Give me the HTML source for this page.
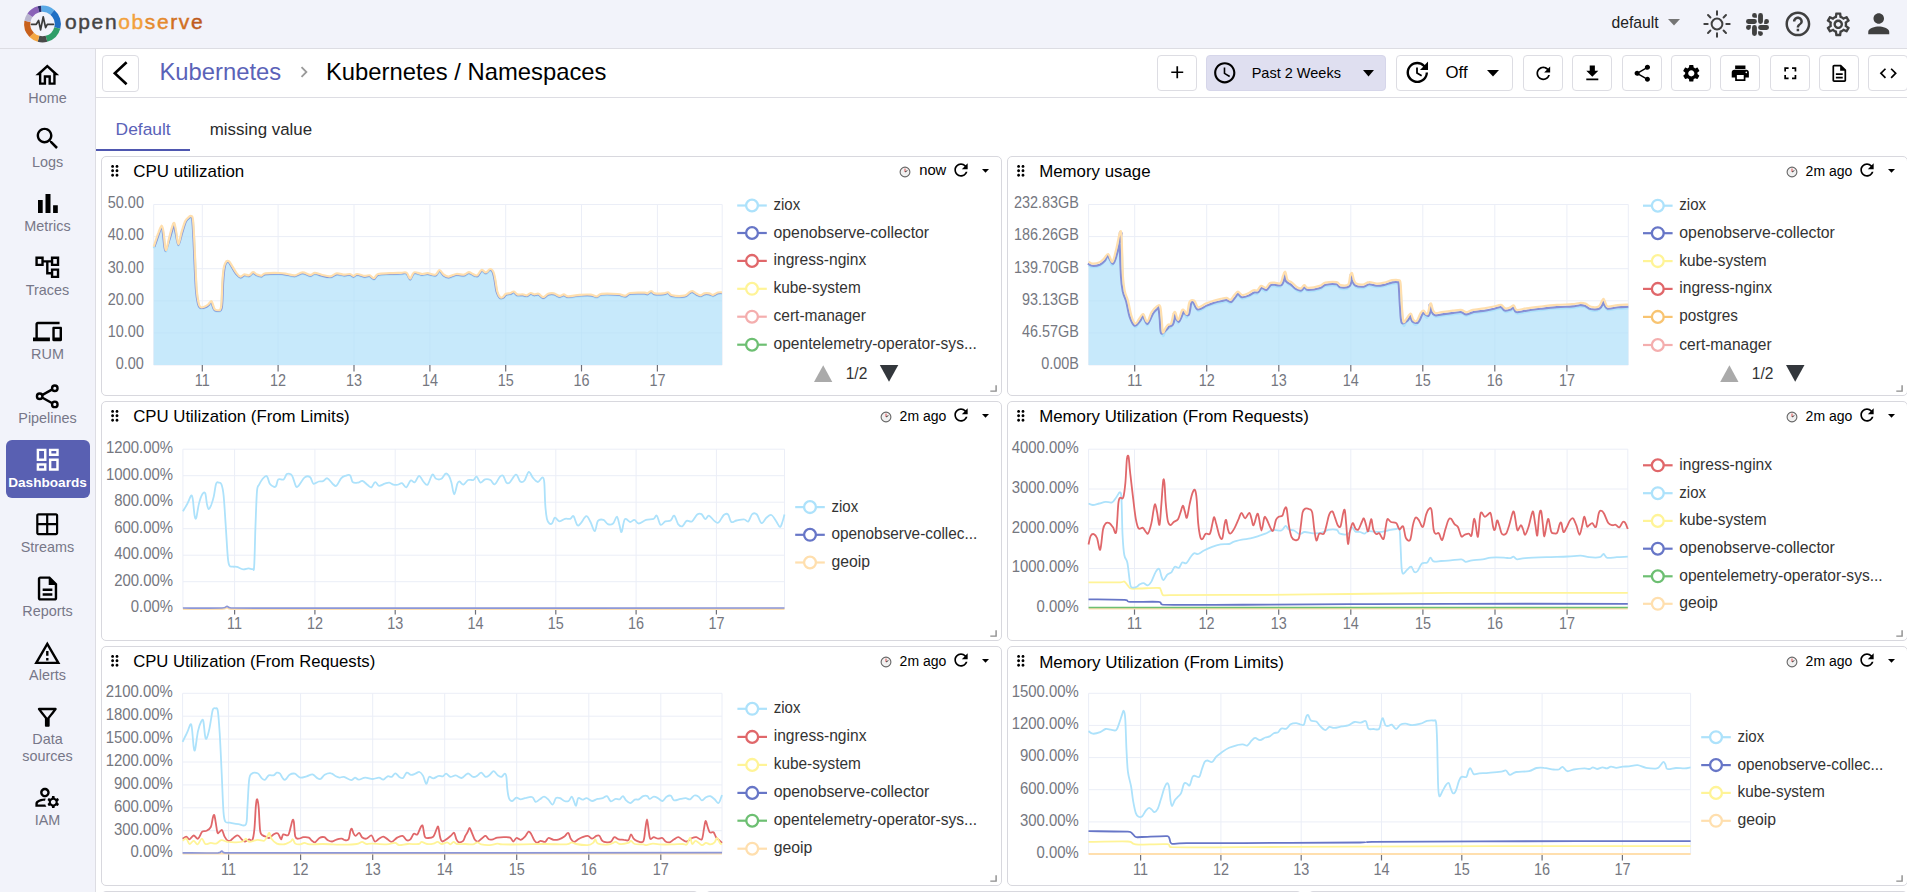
<!DOCTYPE html><html><head><meta charset="utf-8"><title>OpenObserve</title><style>
*{box-sizing:border-box}
html,body{margin:0;padding:0}
body{width:1907px;height:892px;overflow:hidden;background:#fff;position:relative;font-family:"Liberation Sans",sans-serif;color:#000}
.abs{position:absolute}
.ic{position:absolute;display:block}
.t{position:absolute;white-space:nowrap;line-height:1}
#hdr{left:0;top:0;width:1907px;height:49px;background:#f2f3fa;border-bottom:1px solid #dddde3}
#side{left:0;top:49px;width:96px;height:843px;background:#f2f3fa;border-right:1px solid #dddde3}
#tb{left:96px;top:49px;width:1811px;height:49px;border-bottom:1px solid #dddde3;background:#fff}
.btn{position:absolute;border:1px solid #dddde3;border-radius:4px;background:#fff}
.nav{position:absolute;left:0;width:95px;text-align:center;font-size:14.4px;color:#777788;line-height:1}
.panel{position:absolute;border:1px solid #d8d8de;border-radius:5px;background:#fff}
.ptitle{position:absolute;font-size:16.8px;line-height:1;white-space:nowrap;color:#000}
.pago{position:absolute;font-size:14px;line-height:1;white-space:nowrap;color:#000;text-align:right}
</style></head><body>
<div id="hdr" class="abs"></div>
<svg class="ic" style="left:0;top:0" width="70" height="48" viewBox="0 0 70 48"><path d="M41.17 8.76 A15.30 15.30 0 0 1 52.33 12.28" stroke="#5aa9e6" stroke-width="6.20" fill="none"/><path d="M52.33 12.28 A15.30 15.30 0 0 1 57.28 27.96" stroke="#1f6fc4" stroke-width="6.20" fill="none"/><path d="M57.28 27.96 A15.30 15.30 0 0 1 46.46 38.78" stroke="#2f9e68" stroke-width="6.20" fill="none"/><path d="M46.46 38.78 A15.30 15.30 0 0 1 38.54 38.78" stroke="#4a4a4a" stroke-width="6.20" fill="none"/><path d="M38.54 38.78 A15.30 15.30 0 0 1 31.68 34.82" stroke="#f5a742" stroke-width="6.20" fill="none"/><path d="M31.68 34.82 A15.30 15.30 0 0 1 27.43 21.34" stroke="#c8601c" stroke-width="6.20" fill="none"/><path d="M27.43 21.34 A15.30 15.30 0 0 1 29.97 15.22" stroke="#b9b5cf" stroke-width="6.20" fill="none"/><path d="M29.97 15.22 A15.30 15.30 0 0 1 38.54 9.22" stroke="#8a63b8" stroke-width="6.20" fill="none"/><path d="M38.54 9.22 A15.30 15.30 0 0 1 41.17 8.76" stroke="#2a2a66" stroke-width="6.20" fill="none"/><path d="M31.5 24.3 H36.3 L38.6 20.5 L40.6 29.8 L43.2 16.8 L45.6 27.6 L47.3 24.3 H53.5" stroke="#3a3a3a" stroke-width="1.7" fill="none" stroke-linejoin="round" stroke-linecap="round"/></svg>
<div class="t" style="left:65px;top:11.2px;font-size:21px;letter-spacing:1.62px;-webkit-text-stroke-width:0.45px;color:#444">open<span style="color:#f2a13c">ob</span><span style="color:#e58a2e">se</span><span style="color:#d16f22">rv</span><span style="color:#bf5a1c">e</span></div>
<div class="t" style="left:1611.5px;top:15.3px;font-size:15.7px;color:#222">default</div>
<svg class="ic" style="left:1667.5px;top:19px" width="12" height="7" viewBox="0 0 12 7"><path d="M0 0H12L6 6.5z" fill="#757575"/></svg>
<svg class="ic" style="left:1703px;top:9.8px" width="28" height="28" viewBox="0 0 28 28"><circle cx="14" cy="14" r="5.4" fill="none" stroke="#404040" stroke-width="2"/><line x1="23.30" y1="14.00" x2="26.70" y2="14.00" stroke="#404040" stroke-width="2" stroke-linecap="round"/><line x1="20.58" y1="20.58" x2="22.98" y2="22.98" stroke="#404040" stroke-width="2" stroke-linecap="round"/><line x1="14.00" y1="23.30" x2="14.00" y2="26.70" stroke="#404040" stroke-width="2" stroke-linecap="round"/><line x1="7.42" y1="20.58" x2="5.02" y2="22.98" stroke="#404040" stroke-width="2" stroke-linecap="round"/><line x1="4.70" y1="14.00" x2="1.30" y2="14.00" stroke="#404040" stroke-width="2" stroke-linecap="round"/><line x1="7.42" y1="7.42" x2="5.02" y2="5.02" stroke="#404040" stroke-width="2" stroke-linecap="round"/><line x1="14.00" y1="4.70" x2="14.00" y2="1.30" stroke="#404040" stroke-width="2" stroke-linecap="round"/><line x1="20.58" y1="7.42" x2="22.98" y2="5.02" stroke="#404040" stroke-width="2" stroke-linecap="round"/></svg>
<svg class="ic" style="left:1745.5px;top:12.5px" width="23" height="23" viewBox="0 0 24 24"><path fill="#404040" d="M5.042 15.165a2.528 2.528 0 0 1-2.52 2.523A2.528 2.528 0 0 1 0 15.165a2.527 2.527 0 0 1 2.522-2.520h2.520v2.520zM6.313 15.165a2.527 2.527 0 0 1 2.521-2.520 2.527 2.527 0 0 1 2.521 2.520v6.313A2.528 2.528 0 0 1 8.834 24a2.528 2.528 0 0 1-2.521-2.522v-6.313zM8.834 5.042a2.528 2.528 0 0 1-2.521-2.520A2.528 2.528 0 0 1 8.834 0a2.528 2.528 0 0 1 2.521 2.522v2.520H8.834zM8.834 6.313a2.528 2.528 0 0 1 2.521 2.521 2.528 2.528 0 0 1-2.521 2.521H2.522A2.528 2.528 0 0 1 0 8.834a2.528 2.528 0 0 1 2.522-2.521h6.312zM18.956 8.834a2.528 2.528 0 0 1 2.522-2.521A2.528 2.528 0 0 1 24 8.834a2.528 2.528 0 0 1-2.522 2.521h-2.522V8.834zM17.688 8.834a2.528 2.528 0 0 1-2.523 2.521 2.527 2.527 0 0 1-2.520-2.521V2.522A2.527 2.527 0 0 1 15.165 0a2.528 2.528 0 0 1 2.523 2.522v6.312zM15.165 18.956a2.528 2.528 0 0 1 2.523 2.522A2.528 2.528 0 0 1 15.165 24a2.527 2.527 0 0 1-2.520-2.522v-2.522h2.520zM15.165 17.688a2.527 2.527 0 0 1-2.520-2.523 2.526 2.526 0 0 1 2.520-2.520h6.313A2.527 2.527 0 0 1 24 15.165a2.528 2.528 0 0 1-2.522 2.523h-6.313z"/></svg>
<svg class="ic" style="left:1782.90px;top:8.90px" width="29.80" height="29.80" viewBox="0 0 24 24"><path fill="#404040" d="M11 18h2v-2h-2v2zm1-16C6.480 2 2 6.480 2 12s4.480 10 10 10 10-4.480 10-10S17.520 2 12 2zm0 18c-4.410 0-8-3.590-8-8s3.590-8 8-8 8 3.590 8 8-3.590 8-8 8zm0-14c-2.210 0-4 1.790-4 4h2c0-1.100.900-2 2-2s2 .900 2 2c0 2-3 1.750-3 5h2c0-2.250 3-2.500 3-5 0-2.210-1.790-4-4-4z"/></svg>
<svg class="ic" style="left:1823.65px;top:9.55px" width="28.50" height="28.50" viewBox="0 0 24 24"><path fill="#404040" d="M19.430 12.980c.040-.320.070-.640.070-.980 0-.340-.030-.660-.070-.980l2.110-1.650c.190-.150.240-.420.120-.640l-2-3.460c-.090-.160-.260-.250-.440-.250-.060 0-.120.010-.170.030l-2.490 1c-.520-.400-1.080-.730-1.690-.980l-.380-2.650C14.460 2.180 14.250 2 14 2h-4c-.250 0-.460.180-.490.420l-.380 2.650c-.610.250-1.170.590-1.690.980l-2.490-1c-.060-.020-.120-.030-.180-.030-.170 0-.340.090-.430.250l-2 3.460c-.130.220-.070.490.120.640l2.110 1.650c-.040.320-.070.650-.070.980 0 .330.030.660.070.980l-2.110 1.650c-.190.150-.240.420-.120.640l2 3.460c.090.160.260.250.440.250.060 0 .120-.010.170-.030l2.490-1c.520.400 1.080.730 1.690.980l.380 2.650c.030.240.240.420.490.420h4c.250 0 .460-.180.490-.420l.380-2.650c.610-.250 1.170-.590 1.690-.980l2.490 1c.060.020.120.030.180.030.170 0 .340-.090.430-.250l2-3.460c.120-.220.070-.490-.120-.640l-2.110-1.650zm-1.980-1.710c.040.310.050.520.050.730 0 .210-.020.430-.050.730l-.140 1.130.890.700 1.080.840-.700 1.210-1.270-.510-1.040-.420-.900.680c-.430.320-.840.560-1.250.730l-1.060.430-.160 1.130-.200 1.350h-1.400l-.190-1.350-.160-1.130-1.060-.430c-.430-.180-.830-.410-1.230-.710l-.910-.700-1.060.430-1.270.510-.700-1.210 1.080-.840.890-.700-.140-1.130c-.030-.310-.050-.540-.050-.740s.020-.430.050-.730l.140-1.130-.890-.700-1.080-.840.700-1.210 1.270.510 1.040.420.900-.680c.430-.320.840-.560 1.250-.730l1.060-.430.160-1.130.200-1.350h1.390l.190 1.350.160 1.130 1.060.430c.430.180.830.410 1.230.710l.910.700 1.060-.430 1.270-.510.700 1.210-1.070.850-.890.700.140 1.130zM12 8c-2.210 0-4 1.790-4 4s1.790 4 4 4 4-1.790 4-4-1.790-4-4-4zm0 6c-1.100 0-2-.900-2-2s.900-2 2-2 2 .900 2 2-.900 2-2 2z"/></svg>
<svg class="ic" style="left:1862.85px;top:8.25px" width="31.50" height="31.50" viewBox="0 0 24 24"><path fill="#404040" d="M12 12c2.210 0 4-1.790 4-4s-1.790-4-4-4-4 1.790-4 4 1.790 4 4 4zm0 2c-2.670 0-8 1.340-8 4v2h16v-2c0-2.660-5.330-4-8-4z"/></svg>
<div id="side" class="abs"></div>
<div class="abs" style="left:5.5px;top:440px;width:84px;height:58px;border-radius:6px;background:#5960b2"></div>
<svg class="ic" style="left:33.20px;top:60.70px" width="28.60" height="28.60" viewBox="0 0 24 24"><path fill="#000" d="M12 5.69l5 4.5V18h-2v-6H9v6H7v-7.81l5-4.5M12 3L2 12h3v8h6v-6h2v6h6v-8h3L12 3z"/></svg>
<div class="nav" style="top:91.3px;color:#777788;">Home</div>
<svg class="ic" style="left:32.90px;top:124.40px" width="29.20" height="29.20" viewBox="0 0 24 24"><path fill="#000" d="M15.5 14h-.79l-.28-.27C15.41 12.59 16 11.11 16 9.5 16 5.91 13.09 3 9.5 3S3 5.91 3 9.5 5.91 16 9.5 16c1.61 0 3.09-.59 4.23-1.57l.27.28v.79l5 4.99L20.49 19l-4.99-5zm-6 0C7.01 14 5 11.99 5 9.5S7.01 5 9.5 5 14 7.01 14 9.5 11.99 14 9.5 14z"/></svg>
<div class="nav" style="top:155.3px;color:#777788;">Logs</div>
<svg class="ic" style="left:37.6px;top:193.5px" width="20" height="19.4" viewBox="0 0 20 19.4"><path fill="#000" d="M0 5.9h4.7v13.5H0zM7.5 0h5v19.400h-5zM15.100 11.200h4.700v8.200h-4.700z"/></svg>
<div class="nav" style="top:219.3px;color:#777788;">Metrics</div>
<svg class="ic" style="left:33.20px;top:252.70px" width="28.60" height="28.60" viewBox="0 0 24 24"><path fill="#000" d="M22 11V3h-7v3H9V3H2v8h7V8h2v10h4v3h7v-8h-7v3h-2V8h2v3h7zM7 9H4V5h3v4zm10 6h3v4h-3v-4zm0-10h3v4h-3V5z"/></svg>
<div class="nav" style="top:283.3px;color:#777788;">Traces</div>
<svg class="ic" style="left:33.00px;top:316.50px" width="29.00" height="29.00" viewBox="0 0 24 24"><path fill="#000" d="M4 6h18V4H4c-1.1 0-2 .9-2 2v11H0v3h14v-3H4V6zm19 2h-6c-.55 0-1 .45-1 1v10c0 .55.45 1 1 1h6c.55 0 1-.45 1-1V9c0-.55-.45-1-1-1zm-1 9h-4v-7h4v7z"/></svg>
<div class="nav" style="top:347.3px;color:#777788;">RUM</div>
<svg class="ic" style="left:33.2px;top:382.3px" width="28.6" height="28.6" viewBox="0 0 24 24"><g stroke="#000" stroke-width="2" fill="none"><line x1="7.6" y1="11" x2="16.2" y2="6.2"/><line x1="7.6" y1="13" x2="16.2" y2="17.8"/><circle cx="5.6" cy="12" r="2.3"/><circle cx="18.3" cy="5.2" r="2.3"/><circle cx="18.3" cy="18.8" r="2.3"/></g></svg>
<div class="nav" style="top:411.3px;color:#777788;">Pipelines</div>
<svg class="ic" style="left:32.80px;top:445.30px" width="29.40" height="29.40" viewBox="0 0 24 24"><path fill="#fff" d="M19 5v2h-4V5h4M9 5v6H5V5h4m10 8v6h-4v-6h4M9 17v2H5v-2h4M21 3h-8v6h8V3zM11 3H3v10h8V3zm10 8h-8v10h8V11zm-10 4H3v6h8v-6z"/></svg>
<div class="nav" style="top:475.3px;color:#fff;font-weight:bold;font-size:13.6px;margin-top:0.8px;">Dashboards</div>
<svg class="ic" style="left:34.30px;top:510.80px" width="26.40" height="26.40" viewBox="0 0 24 24"><path fill="#000" d="M20 2H4c-1.1 0-2 .9-2 2v16c0 1.1.9 2 2 2h16c1.1 0 2-.9 2-2V4c0-1.1-.9-2-2-2zm0 9h-7V4h7v7zm-9-7v7H4V4h7zm-7 9h7v7H4v-7zm9 7v-7h7v7h-7z"/></svg>
<div class="nav" style="top:539.8px;color:#777788;">Streams</div>
<svg class="ic" style="left:33.00px;top:573.50px" width="29.00" height="29.00" viewBox="0 0 24 24"><path fill="#000" d="M8 16h8v2H8zm0-4h8v2H8zm6-10H6c-1.1 0-2 .9-2 2v16c0 1.1.89 2 1.99 2H18c1.1 0 2-.9 2-2V8l-6-6zm4 18H6V4h7v5h5v11z"/></svg>
<div class="nav" style="top:603.8px;color:#777788;">Reports</div>
<svg class="ic" style="left:33.20px;top:638.70px" width="28.60" height="28.60" viewBox="0 0 24 24"><path fill="#000" d="M12 5.99L19.53 19H4.47L12 5.99M12 2L1 21h22L12 2zm1 14h-2v2h2v-2zm0-6h-2v4h2v-4z"/></svg>
<div class="nav" style="top:667.8px;color:#777788;">Alerts</div>
<svg class="ic" style="left:33.20px;top:702.70px" width="28.60" height="28.60" viewBox="0 0 24 24"><path fill="#000" d="M7 6h10l-5.01 6.3L7 6zm-2.750-.390C6.270 8.200 10 13 10 13v6c0 .550.450 1 1 1h2c.550 0 1-.450 1-1v-6s3.720-4.800 5.740-7.390c.510-.660.040-1.610-.790-1.610H5.040c-.830 0-1.300.950-.790 1.610z"/></svg>
<div class="nav" style="top:731.8px;color:#777788;">Data</div>
<svg class="ic" style="left:33.20px;top:782.70px" width="28.60" height="28.60" viewBox="0 0 24 24"><path fill="#000" d="M4 18v-.65c0-.34.16-.66.41-.81C6.100 15.530 8.030 15 10 15c.030 0 .050 0 .080.010.100-.700.300-1.370.590-1.980-.220-.020-.440-.030-.670-.030-2.420 0-4.680.670-6.610 1.820-.880.520-1.390 1.500-1.390 2.530V20h9.260c-.420-.600-.750-1.280-.970-2H4zm6-6c2.210 0 4-1.790 4-4s-1.790-4-4-4-4 1.790-4 4 1.790 4 4 4zm0-6c1.100 0 2 .900 2 2s-.900 2-2 2-2-.900-2-2 .900-2 2-2zm10.750 10c0-.220-.030-.420-.060-.630l1.140-1.010-1-1.730-1.450.490c-.320-.270-.680-.480-1.080-.630L18 11h-2l-.300 1.490c-.400.150-.760.360-1.080.630l-1.450-.490-1 1.730 1.140 1.010c-.030.210-.060.410-.060.630s.030.420.060.630l-1.140 1.010 1 1.730 1.450-.490c.320.270.680.480 1.080.630L16 21h2l.300-1.490c.400-.150.760-.360 1.080-.630l1.450.490 1-1.730-1.140-1.010c.030-.210.060-.410.060-.630zM17 18c-1.100 0-2-.900-2-2s.900-2 2-2 2 .900 2 2-.900 2-2 2z"/></svg>
<div class="nav" style="top:812.8px;color:#777788;">IAM</div>
<div class="nav" style="top:748.8px">sources</div>
<div id="tb" class="abs"></div>
<div class="btn" style="left:101.5px;top:54.5px;width:37px;height:37px"></div>
<svg class="ic" style="left:101.5px;top:54.5px" width="37" height="37" viewBox="0 0 37 37"><path d="M24.6 7.3 L12.8 18.2 L24.6 29.2" stroke="#000" stroke-width="2.6" fill="none"/></svg>
<div class="t" style="left:159.5px;top:60.2px;font-size:23.8px;color:#5a62b8">Kubernetes</div>
<svg class="ic" style="left:292.80px;top:60.80px" width="22.00" height="22.00" viewBox="0 0 24 24"><path fill="#9a9a9a" d="M10 6L8.590 7.410 13.170 12l-4.580 4.590L10 18l6-6z"/></svg>
<div class="t" style="left:326px;top:60.2px;font-size:23.8px;color:#000">Kubernetes / Namespaces</div>
<div class="btn" style="left:1157px;top:55px;width:39.5px;height:36px"></div>
<svg class="ic" style="left:1166.95px;top:62.35px" width="20.50" height="20.50" viewBox="0 0 24 24"><path fill="#000" d="M19 13h-6v6h-2v-6H5v-2h6V5h2v6h6v2z"/></svg>
<div class="btn" style="left:1206px;top:55px;width:180px;height:36px;background:#dfdff0;border-color:#d6d6ea"></div>
<svg class="ic" style="left:1212.25px;top:59.85px" width="25.50" height="25.50" viewBox="0 0 24 24"><path fill="#000" d="M11.990 2C6.470 2 2 6.480 2 12s4.470 10 9.990 10C17.520 22 22 17.520 22 12S17.520 2 11.990 2zM12 20c-4.420 0-8-3.580-8-8s3.580-8 8-8 8 3.580 8 8-3.580 8-8 8zm.500-13H11v6l5.250 3.150.750-1.230-4.500-2.670z"/></svg>
<div class="t" style="left:1251.7px;top:65.6px;font-size:14.5px;color:#000">Past 2 Weeks</div>
<svg class="ic" style="left:1362.5px;top:69.8px" width="11" height="7" viewBox="0 0 11 7"><path d="M0 0H11L5.5 6.6z" fill="#000"/></svg>
<div class="btn" style="left:1396px;top:55px;width:117px;height:36px"></div>
<svg class="ic" style="left:1402.60px;top:58.10px" width="28.60" height="28.60" viewBox="0 0 24 24"><path fill="#000" d="M21 10.120h-6.780l2.740-2.820c-2.730-2.700-7.150-2.800-9.880-.100-2.730 2.710-2.730 7.080 0 9.790s7.150 2.710 9.880 0C18.320 15.650 19 14.080 19 12.100h2c0 1.980-.880 4.550-2.640 6.290-3.510 3.480-9.210 3.480-12.720 0-3.500-3.470-3.530-9.110-.020-12.580s9.140-3.470 12.650 0L21 3v7.120zM12.500 8v4.250l3.500 2.080-.720 1.210L11 13V8h1.500z"/></svg>
<div class="t" style="left:1445.5px;top:65.0px;font-size:16.8px;color:#000">Off</div>
<svg class="ic" style="left:1487px;top:69.8px" width="12" height="7" viewBox="0 0 12 7"><path d="M0 0H12L6 6.6z" fill="#000"/></svg>
<div class="btn" style="left:1523.2px;top:55px;width:39.5px;height:36px"></div>
<svg class="ic" style="left:1532.60px;top:62.50px" width="20.60" height="20.60" viewBox="0 0 24 24"><path fill="#000" d="M17.650 6.350C16.200 4.900 14.210 4 12 4c-4.420 0-7.990 3.580-7.990 8s3.570 8 7.990 8c3.730 0 6.840-2.550 7.730-6h-2.080c-.820 2.330-3.040 4-5.650 4-3.310 0-6-2.690-6-6s2.690-6 6-6c1.660 0 3.140.690 4.220 1.780L13 11h7V4l-2.350 2.350z"/></svg>
<div class="btn" style="left:1572.2px;top:55px;width:39.5px;height:36px"></div>
<svg class="ic" style="left:1581.60px;top:62.50px" width="20.60" height="20.60" viewBox="0 0 24 24"><path fill="#000" d="M19 9h-4V3H9v6H5l7 7 7-7zM5 18v2h14v-2H5z"/></svg>
<div class="btn" style="left:1622.2px;top:55px;width:39.5px;height:36px"></div>
<svg class="ic" style="left:1631.60px;top:62.50px" width="20.60" height="20.60" viewBox="0 0 24 24"><path fill="#000" d="M18 16.08c-.76 0-1.44.3-1.96.77L8.91 12.7c.05-.23.09-.46.09-.7s-.04-.47-.09-.7l7.05-4.11c.54.5 1.25.81 2.04.81 1.66 0 3-1.34 3-3s-1.34-3-3-3-3 1.34-3 3c0 .24.04.47.09.7L8.04 9.81C7.5 9.31 6.79 9 6 9c-1.66 0-3 1.34-3 3s1.34 3 3 3c.79 0 1.5-.31 2.04-.81l7.12 4.16c-.05.21-.08.43-.08.65 0 1.61 1.31 2.92 2.92 2.92 1.61 0 2.92-1.31 2.92-2.92s-1.31-2.92-2.92-2.92z"/></svg>
<div class="btn" style="left:1671.2px;top:55px;width:39.5px;height:36px"></div>
<svg class="ic" style="left:1680.60px;top:62.50px" width="20.60" height="20.60" viewBox="0 0 24 24"><path fill="#000" d="M19.140 12.940c.040-.300.060-.610.060-.940 0-.320-.020-.640-.070-.940l2.030-1.580c.180-.140.230-.410.120-.610l-1.920-3.320c-.120-.220-.370-.290-.590-.220l-2.390.960c-.500-.380-1.030-.700-1.620-.940l-.360-2.540c-.040-.240-.240-.410-.480-.410h-3.840c-.240 0-.430.170-.470.410l-.360 2.540c-.590.240-1.130.570-1.620.940l-2.390-.960c-.220-.080-.470 0-.590.220L2.740 8.870c-.120.210-.080.470.120.610l2.030 1.580c-.050.300-.090.630-.090.940s.020.640.070.940l-2.030 1.580c-.180.140-.230.410-.120.610l1.920 3.320c.120.220.370.290.590.220l2.390-.960c.500.380 1.030.700 1.620.940l.360 2.540c.050.240.240.410.480.410h3.840c.240 0 .440-.170.470-.410l.360-2.540c.590-.240 1.130-.560 1.620-.940l2.390.960c.220.080.470 0 .590-.220l1.920-3.320c.120-.220.070-.470-.120-.610l-2.010-1.580zM12 15.600c-1.980 0-3.600-1.620-3.600-3.600s1.620-3.600 3.600-3.600 3.600 1.620 3.600 3.600-1.620 3.600-3.600 3.600z"/></svg>
<div class="btn" style="left:1720.3px;top:55px;width:39.5px;height:36px"></div>
<svg class="ic" style="left:1729.70px;top:62.50px" width="20.60" height="20.60" viewBox="0 0 24 24"><path fill="#000" d="M19 8H5c-1.660 0-3 1.340-3 3v6h4v4h12v-4h4v-6c0-1.660-1.340-3-3-3zm-3 11H8v-5h8v5zm3-7c-.550 0-1-.450-1-1s.450-1 1-1 1 .450 1 1-.450 1-1 1zm-1-9H6v4h12V3z"/></svg>
<div class="btn" style="left:1770.2px;top:55px;width:39.5px;height:36px"></div>
<svg class="ic" style="left:1779.60px;top:62.50px" width="20.60" height="20.60" viewBox="0 0 24 24"><path fill="#000" d="M7 14H5v5h5v-2H7v-3zm-2-4h2V7h3V5H5v5zm12 7h-3v2h5v-5h-2v3zM14 5v2h3v3h2V5h-5z"/></svg>
<div class="btn" style="left:1819.1px;top:55px;width:39.5px;height:36px"></div>
<svg class="ic" style="left:1828.50px;top:62.50px" width="20.60" height="20.60" viewBox="0 0 24 24"><path fill="#000" d="M8 16h8v2H8zm0-4h8v2H8zm6-10H6c-1.1 0-2 .9-2 2v16c0 1.1.89 2 1.99 2H18c1.1 0 2-.9 2-2V8l-6-6zm4 18H6V4h7v5h5v11z"/></svg>
<div class="btn" style="left:1868.2px;top:55px;width:39.5px;height:36px"></div>
<svg class="ic" style="left:1877.60px;top:62.50px" width="20.60" height="20.60" viewBox="0 0 24 24"><path fill="#000" d="M9.400 16.600L4.800 12l4.600-4.600L8 6l-6 6 6 6 1.400-1.400zm5.200 0l4.600-4.600-4.600-4.600L16 6l6 6-6 6-1.400-1.400z"/></svg>
<div class="t" style="left:115.6px;top:120.8px;font-size:17.4px;color:#5a62b8">Default</div>
<div class="abs" style="left:96px;top:149px;width:94px;height:2px;background:#4f57b0"></div>
<div class="t" style="left:209.8px;top:122.3px;font-size:16.9px;color:#2a2a2a">missing value</div>
<div class="panel" style="left:101px;top:156px;width:901px;height:240px"></div>
<svg class="ic" style="left:106.10px;top:161.90px" width="17.60" height="17.60" viewBox="0 0 24 24"><path fill="#000" d="M11 18c0 1.100-.900 2-2 2s-2-.900-2-2 .900-2 2-2 2 .900 2 2zm-2-8c-1.100 0-2 .900-2 2s.900 2 2 2 2-.900 2-2-.900-2-2-2zm0-6c-1.100 0-2 .900-2 2s.900 2 2 2 2-.900 2-2-.900-2-2-2zm6 4c1.100 0 2-.900 2-2s-.900-2-2-2-2 .900-2 2 .900 2 2 2zm0 2c-1.100 0-2 .900-2 2s.900 2 2 2 2-.900 2-2-.900-2-2-2zm0 6c-1.100 0-2 .900-2 2s.900 2 2 2 2-.900 2-2-.900-2-2-2z"/></svg>
<div class="ptitle" style="left:133.2px;top:163.9px;font-size:16.96px">CPU utilization</div>
<svg class="ic" style="left:981.8px;top:169.2px" width="7" height="4" viewBox="0 0 7 4"><path d="M0 0H7L3.5 3.8z" fill="#000"/></svg>
<svg class="ic" style="left:950.60px;top:160.30px" width="20.00" height="20.00" viewBox="0 0 24 24"><path fill="#000" d="M17.650 6.350C16.200 4.900 14.210 4 12 4c-4.420 0-7.990 3.580-7.990 8s3.570 8 7.990 8c3.730 0 6.840-2.550 7.730-6h-2.080c-.820 2.330-3.040 4-5.650 4-3.310 0-6-2.690-6-6s2.690-6 6-6c1.660 0 3.140.690 4.220 1.780L13 11h7V4l-2.350 2.350z"/></svg>
<div class="pago" style="right:960.7px;top:163.7px;font-size:14.8px;top:163.2px">now</div>
<svg class="ic" style="left:898.8px;top:165.8px" width="12" height="12" viewBox="0 0 12 12"><circle cx="6" cy="6" r="4.9" fill="#f0f0f0" stroke="#666" stroke-width="1.1"/><path d="M6 6V2.6" stroke="#e05050" stroke-width="1"/><path d="M6 6L8.4 4.6" stroke="#444" stroke-width="1"/></svg>
<svg class="ic" style="left:989.8px;top:384.6px" width="7" height="7" viewBox="0 0 7 7"><path d="M6.1 0.3V6.1H0.3" stroke="#8c8c8c" stroke-width="1.4" fill="none"/></svg>
<div class="panel" style="left:1007px;top:156px;width:901px;height:240px"></div>
<svg class="ic" style="left:1012.10px;top:161.90px" width="17.60" height="17.60" viewBox="0 0 24 24"><path fill="#000" d="M11 18c0 1.100-.900 2-2 2s-2-.900-2-2 .900-2 2-2 2 .900 2 2zm-2-8c-1.100 0-2 .900-2 2s.900 2 2 2 2-.900 2-2-.900-2-2-2zm0-6c-1.100 0-2 .900-2 2s.900 2 2 2 2-.900 2-2-.900-2-2-2zm6 4c1.100 0 2-.900 2-2s-.900-2-2-2-2 .900-2 2 .900 2 2 2zm0 2c-1.100 0-2 .900-2 2s.900 2 2 2 2-.900 2-2-.900-2-2-2zm0 6c-1.100 0-2 .900-2 2s.900 2 2 2 2-.900 2-2-.900-2-2-2z"/></svg>
<div class="ptitle" style="left:1039.2px;top:163.9px;font-size:16.83px">Memory usage</div>
<svg class="ic" style="left:1887.8px;top:169.2px" width="7" height="4" viewBox="0 0 7 4"><path d="M0 0H7L3.5 3.8z" fill="#000"/></svg>
<svg class="ic" style="left:1856.60px;top:160.30px" width="20.00" height="20.00" viewBox="0 0 24 24"><path fill="#000" d="M17.650 6.350C16.200 4.900 14.210 4 12 4c-4.420 0-7.990 3.580-7.990 8s3.570 8 7.990 8c3.730 0 6.840-2.550 7.730-6h-2.080c-.820 2.330-3.040 4-5.650 4-3.310 0-6-2.690-6-6s2.690-6 6-6c1.660 0 3.140.690 4.220 1.780L13 11h7V4l-2.350 2.350z"/></svg>
<div class="pago" style="right:54.7px;top:163.7px;">2m ago</div>
<svg class="ic" style="left:1786.1px;top:165.8px" width="12" height="12" viewBox="0 0 12 12"><circle cx="6" cy="6" r="4.9" fill="#f0f0f0" stroke="#666" stroke-width="1.1"/><path d="M6 6V2.6" stroke="#e05050" stroke-width="1"/><path d="M6 6L8.4 4.6" stroke="#444" stroke-width="1"/></svg>
<svg class="ic" style="left:1895.8px;top:384.6px" width="7" height="7" viewBox="0 0 7 7"><path d="M6.1 0.3V6.1H0.3" stroke="#8c8c8c" stroke-width="1.4" fill="none"/></svg>
<div class="panel" style="left:101px;top:401px;width:901px;height:240px"></div>
<svg class="ic" style="left:106.10px;top:406.90px" width="17.60" height="17.60" viewBox="0 0 24 24"><path fill="#000" d="M11 18c0 1.100-.900 2-2 2s-2-.900-2-2 .900-2 2-2 2 .900 2 2zm-2-8c-1.100 0-2 .900-2 2s.900 2 2 2 2-.900 2-2-.900-2-2-2zm0-6c-1.100 0-2 .900-2 2s.900 2 2 2 2-.900 2-2-.900-2-2-2zm6 4c1.100 0 2-.900 2-2s-.900-2-2-2-2 .900-2 2 .900 2 2 2zm0 2c-1.100 0-2 .900-2 2s.900 2 2 2 2-.900 2-2-.900-2-2-2zm0 6c-1.100 0-2 .900-2 2s.900 2 2 2 2-.900 2-2-.900-2-2-2z"/></svg>
<div class="ptitle" style="left:133.2px;top:408.9px;font-size:16.81px">CPU Utilization (From Limits)</div>
<svg class="ic" style="left:981.8px;top:414.2px" width="7" height="4" viewBox="0 0 7 4"><path d="M0 0H7L3.5 3.8z" fill="#000"/></svg>
<svg class="ic" style="left:950.60px;top:405.30px" width="20.00" height="20.00" viewBox="0 0 24 24"><path fill="#000" d="M17.650 6.350C16.200 4.900 14.210 4 12 4c-4.420 0-7.990 3.580-7.990 8s3.570 8 7.990 8c3.730 0 6.840-2.550 7.730-6h-2.080c-.820 2.330-3.040 4-5.650 4-3.310 0-6-2.690-6-6s2.690-6 6-6c1.660 0 3.140.690 4.220 1.780L13 11h7V4l-2.350 2.350z"/></svg>
<div class="pago" style="right:960.7px;top:408.7px;">2m ago</div>
<svg class="ic" style="left:880.1px;top:410.8px" width="12" height="12" viewBox="0 0 12 12"><circle cx="6" cy="6" r="4.9" fill="#f0f0f0" stroke="#666" stroke-width="1.1"/><path d="M6 6V2.6" stroke="#e05050" stroke-width="1"/><path d="M6 6L8.4 4.6" stroke="#444" stroke-width="1"/></svg>
<svg class="ic" style="left:989.8px;top:629.6px" width="7" height="7" viewBox="0 0 7 7"><path d="M6.1 0.3V6.1H0.3" stroke="#8c8c8c" stroke-width="1.4" fill="none"/></svg>
<div class="panel" style="left:1007px;top:401px;width:901px;height:240px"></div>
<svg class="ic" style="left:1012.10px;top:406.90px" width="17.60" height="17.60" viewBox="0 0 24 24"><path fill="#000" d="M11 18c0 1.100-.900 2-2 2s-2-.900-2-2 .900-2 2-2 2 .900 2 2zm-2-8c-1.100 0-2 .900-2 2s.900 2 2 2 2-.900 2-2-.900-2-2-2zm0-6c-1.100 0-2 .900-2 2s.900 2 2 2 2-.900 2-2-.900-2-2-2zm6 4c1.100 0 2-.900 2-2s-.900-2-2-2-2 .900-2 2 .900 2 2 2zm0 2c-1.100 0-2 .900-2 2s.900 2 2 2 2-.900 2-2-.900-2-2-2zm0 6c-1.100 0-2 .900-2 2s.900 2 2 2 2-.900 2-2-.900-2-2-2z"/></svg>
<div class="ptitle" style="left:1039.2px;top:408.9px;font-size:16.85px">Memory Utilization (From Requests)</div>
<svg class="ic" style="left:1887.8px;top:414.2px" width="7" height="4" viewBox="0 0 7 4"><path d="M0 0H7L3.5 3.8z" fill="#000"/></svg>
<svg class="ic" style="left:1856.60px;top:405.30px" width="20.00" height="20.00" viewBox="0 0 24 24"><path fill="#000" d="M17.650 6.350C16.200 4.900 14.210 4 12 4c-4.420 0-7.990 3.580-7.990 8s3.570 8 7.990 8c3.730 0 6.840-2.550 7.730-6h-2.080c-.820 2.330-3.040 4-5.650 4-3.310 0-6-2.690-6-6s2.690-6 6-6c1.660 0 3.140.690 4.220 1.780L13 11h7V4l-2.350 2.350z"/></svg>
<div class="pago" style="right:54.7px;top:408.7px;">2m ago</div>
<svg class="ic" style="left:1786.1px;top:410.8px" width="12" height="12" viewBox="0 0 12 12"><circle cx="6" cy="6" r="4.9" fill="#f0f0f0" stroke="#666" stroke-width="1.1"/><path d="M6 6V2.6" stroke="#e05050" stroke-width="1"/><path d="M6 6L8.4 4.6" stroke="#444" stroke-width="1"/></svg>
<svg class="ic" style="left:1895.8px;top:629.6px" width="7" height="7" viewBox="0 0 7 7"><path d="M6.1 0.3V6.1H0.3" stroke="#8c8c8c" stroke-width="1.4" fill="none"/></svg>
<div class="panel" style="left:101px;top:646px;width:901px;height:240px"></div>
<svg class="ic" style="left:106.10px;top:651.90px" width="17.60" height="17.60" viewBox="0 0 24 24"><path fill="#000" d="M11 18c0 1.100-.900 2-2 2s-2-.900-2-2 .900-2 2-2 2 .900 2 2zm-2-8c-1.100 0-2 .900-2 2s.900 2 2 2 2-.900 2-2-.900-2-2-2zm0-6c-1.100 0-2 .900-2 2s.900 2 2 2 2-.900 2-2-.900-2-2-2zm6 4c1.100 0 2-.900 2-2s-.900-2-2-2-2 .900-2 2 .900 2 2 2zm0 2c-1.100 0-2 .900-2 2s.900 2 2 2 2-.900 2-2-.900-2-2-2zm0 6c-1.100 0-2 .900-2 2s.900 2 2 2 2-.900 2-2-.900-2-2-2z"/></svg>
<div class="ptitle" style="left:133.2px;top:653.9px;font-size:16.69px">CPU Utilization (From Requests)</div>
<svg class="ic" style="left:981.8px;top:659.2px" width="7" height="4" viewBox="0 0 7 4"><path d="M0 0H7L3.5 3.8z" fill="#000"/></svg>
<svg class="ic" style="left:950.60px;top:650.30px" width="20.00" height="20.00" viewBox="0 0 24 24"><path fill="#000" d="M17.650 6.350C16.200 4.900 14.210 4 12 4c-4.420 0-7.990 3.580-7.990 8s3.570 8 7.990 8c3.730 0 6.840-2.550 7.730-6h-2.080c-.820 2.330-3.040 4-5.650 4-3.310 0-6-2.690-6-6s2.690-6 6-6c1.660 0 3.140.690 4.220 1.780L13 11h7V4l-2.350 2.350z"/></svg>
<div class="pago" style="right:960.7px;top:653.7px;">2m ago</div>
<svg class="ic" style="left:880.1px;top:655.8px" width="12" height="12" viewBox="0 0 12 12"><circle cx="6" cy="6" r="4.9" fill="#f0f0f0" stroke="#666" stroke-width="1.1"/><path d="M6 6V2.6" stroke="#e05050" stroke-width="1"/><path d="M6 6L8.4 4.6" stroke="#444" stroke-width="1"/></svg>
<svg class="ic" style="left:989.8px;top:874.6px" width="7" height="7" viewBox="0 0 7 7"><path d="M6.1 0.3V6.1H0.3" stroke="#8c8c8c" stroke-width="1.4" fill="none"/></svg>
<div class="panel" style="left:1007px;top:646px;width:901px;height:240px"></div>
<svg class="ic" style="left:1012.10px;top:651.90px" width="17.60" height="17.60" viewBox="0 0 24 24"><path fill="#000" d="M11 18c0 1.100-.900 2-2 2s-2-.900-2-2 .900-2 2-2 2 .900 2 2zm-2-8c-1.100 0-2 .900-2 2s.900 2 2 2 2-.900 2-2-.900-2-2-2zm0-6c-1.100 0-2 .900-2 2s.900 2 2 2 2-.900 2-2-.900-2-2-2zm6 4c1.100 0 2-.900 2-2s-.900-2-2-2-2 .900-2 2 .900 2 2 2zm0 2c-1.100 0-2 .900-2 2s.900 2 2 2 2-.900 2-2-.900-2-2-2zm0 6c-1.100 0-2 .900-2 2s.900 2 2 2 2-.900 2-2-.900-2-2-2z"/></svg>
<div class="ptitle" style="left:1039.2px;top:653.9px;font-size:17.00px">Memory Utilization (From Limits)</div>
<svg class="ic" style="left:1887.8px;top:659.2px" width="7" height="4" viewBox="0 0 7 4"><path d="M0 0H7L3.5 3.8z" fill="#000"/></svg>
<svg class="ic" style="left:1856.60px;top:650.30px" width="20.00" height="20.00" viewBox="0 0 24 24"><path fill="#000" d="M17.650 6.350C16.200 4.900 14.210 4 12 4c-4.420 0-7.990 3.580-7.990 8s3.570 8 7.990 8c3.730 0 6.840-2.550 7.730-6h-2.080c-.820 2.330-3.040 4-5.650 4-3.310 0-6-2.690-6-6s2.690-6 6-6c1.660 0 3.140.690 4.220 1.780L13 11h7V4l-2.350 2.350z"/></svg>
<div class="pago" style="right:54.7px;top:653.7px;">2m ago</div>
<svg class="ic" style="left:1786.1px;top:655.8px" width="12" height="12" viewBox="0 0 12 12"><circle cx="6" cy="6" r="4.9" fill="#f0f0f0" stroke="#666" stroke-width="1.1"/><path d="M6 6V2.6" stroke="#e05050" stroke-width="1"/><path d="M6 6L8.4 4.6" stroke="#444" stroke-width="1"/></svg>
<svg class="ic" style="left:1895.8px;top:874.6px" width="7" height="7" viewBox="0 0 7 7"><path d="M6.1 0.3V6.1H0.3" stroke="#8c8c8c" stroke-width="1.4" fill="none"/></svg>
<div class="panel" style="left:101px;top:891px;width:598px;height:60px"></div>
<div class="panel" style="left:705px;top:891px;width:597px;height:60px"></div>
<div class="panel" style="left:1308px;top:891px;width:600px;height:60px"></div>
<svg class="ic" style="left:0;top:0;pointer-events:none" width="1907" height="892" viewBox="0 0 1907 892" font-family="Liberation Sans, sans-serif"><path d="M153.7 204.5H722.2" stroke="#ebeef7" stroke-width="1"/><path d="M153.7 236.6H722.2" stroke="#ebeef7" stroke-width="1"/><path d="M153.7 268.7H722.2" stroke="#ebeef7" stroke-width="1"/><path d="M153.7 300.8H722.2" stroke="#ebeef7" stroke-width="1"/><path d="M153.7 332.9H722.2" stroke="#ebeef7" stroke-width="1"/><path d="M153.7 365.0H722.2" stroke="#ebeef7" stroke-width="1"/><path d="M153.7 204.5V365.0" stroke="#ebeef7" stroke-width="1"/><path d="M202.3 204.5V365.0" stroke="#ebeef7" stroke-width="1"/><path d="M278.1 204.5V365.0" stroke="#ebeef7" stroke-width="1"/><path d="M354.0 204.5V365.0" stroke="#ebeef7" stroke-width="1"/><path d="M429.9 204.5V365.0" stroke="#ebeef7" stroke-width="1"/><path d="M505.7 204.5V365.0" stroke="#ebeef7" stroke-width="1"/><path d="M581.5 204.5V365.0" stroke="#ebeef7" stroke-width="1"/><path d="M657.4 204.5V365.0" stroke="#ebeef7" stroke-width="1"/><path d="M722.2 204.5V365.0" stroke="#ebeef7" stroke-width="1"/><path d="M202.3 365.0V371.4" stroke="#6E7079" stroke-width="1.2"/><path d="M278.1 365.0V371.4" stroke="#6E7079" stroke-width="1.2"/><path d="M354.0 365.0V371.4" stroke="#6E7079" stroke-width="1.2"/><path d="M429.9 365.0V371.4" stroke="#6E7079" stroke-width="1.2"/><path d="M505.7 365.0V371.4" stroke="#6E7079" stroke-width="1.2"/><path d="M581.5 365.0V371.4" stroke="#6E7079" stroke-width="1.2"/><path d="M657.4 365.0V371.4" stroke="#6E7079" stroke-width="1.2"/><text transform="translate(143.9 208.3) scale(0.890 1)" text-anchor="end" font-size="16.2" fill="#75777f">50.00</text><text transform="translate(143.9 240.4) scale(0.890 1)" text-anchor="end" font-size="16.2" fill="#75777f">40.00</text><text transform="translate(143.9 272.5) scale(0.890 1)" text-anchor="end" font-size="16.2" fill="#75777f">30.00</text><text transform="translate(143.9 304.6) scale(0.890 1)" text-anchor="end" font-size="16.2" fill="#75777f">20.00</text><text transform="translate(143.9 336.7) scale(0.890 1)" text-anchor="end" font-size="16.2" fill="#75777f">10.00</text><text transform="translate(143.9 368.8) scale(0.890 1)" text-anchor="end" font-size="16.2" fill="#75777f">0.00</text><text transform="translate(202.3 386.1) scale(0.890 1)" text-anchor="middle" font-size="16.2" fill="#75777f">11</text><text transform="translate(278.1 386.1) scale(0.890 1)" text-anchor="middle" font-size="16.2" fill="#75777f">12</text><text transform="translate(354.0 386.1) scale(0.890 1)" text-anchor="middle" font-size="16.2" fill="#75777f">13</text><text transform="translate(429.9 386.1) scale(0.890 1)" text-anchor="middle" font-size="16.2" fill="#75777f">14</text><text transform="translate(505.7 386.1) scale(0.890 1)" text-anchor="middle" font-size="16.2" fill="#75777f">15</text><text transform="translate(581.5 386.1) scale(0.890 1)" text-anchor="middle" font-size="16.2" fill="#75777f">16</text><text transform="translate(657.4 386.1) scale(0.890 1)" text-anchor="middle" font-size="16.2" fill="#75777f">17</text><path d="M153.7 246.7C154.5 244.3 157.2 235.9 158.6 232.4C159.9 228.9 161.0 225.5 161.8 225.7C162.7 225.9 163.0 229.3 163.7 233.4C164.4 237.5 164.9 249.2 165.8 250.0C166.7 250.8 168.0 242.2 169.1 238.1C170.2 234.0 171.6 228.2 172.5 225.7C173.4 223.2 173.8 222.2 174.4 223.3C175.0 224.4 175.6 228.9 176.3 232.4C177.0 235.9 177.5 244.2 178.4 244.2C179.3 244.2 180.3 236.3 181.5 232.4C182.7 228.5 184.0 223.6 185.3 221.0C186.6 218.4 188.2 217.6 189.1 216.8C190.0 216.0 190.4 215.6 191.0 216.0C191.6 216.4 192.4 215.4 192.9 219.1C193.4 222.8 193.8 230.5 194.2 238.1C194.6 245.7 195.0 256.2 195.4 264.8C195.8 273.4 196.2 283.2 196.7 289.6C197.2 296.0 198.0 300.1 198.6 303.0C199.2 305.9 199.6 306.5 200.5 307.1C201.4 307.7 203.0 307.2 204.3 306.8C205.6 306.4 207.0 305.5 208.2 304.5C209.4 303.5 210.6 300.8 211.4 301.0C212.2 301.2 212.7 304.4 213.3 305.8C213.9 307.2 214.0 309.0 215.2 309.6C216.3 310.2 219.1 310.7 220.2 309.6C221.2 308.5 221.1 307.6 221.5 303.0C221.9 298.4 222.0 288.1 222.4 282.0C222.8 275.9 223.3 270.1 224.0 266.7C224.7 263.3 225.5 262.3 226.3 261.4C227.2 260.5 228.2 260.7 229.1 261.4C230.0 262.1 230.7 263.8 232.0 265.8C233.3 267.8 235.3 271.6 236.7 273.4C238.1 275.2 239.3 276.4 240.6 276.6C241.9 276.8 243.0 274.6 244.4 274.4C245.8 274.2 247.7 275.7 249.1 275.3C250.5 274.9 251.7 272.2 253.0 272.1C254.3 272.0 255.4 273.8 256.8 274.4C258.2 275.0 260.1 275.9 261.5 275.7C262.9 275.5 262.3 273.8 265.3 273.4C268.3 272.9 275.9 272.9 279.6 273.0C283.3 273.1 284.8 273.6 287.3 274.0C289.9 274.4 292.4 275.6 294.9 275.3C297.4 275.0 299.9 272.5 302.5 272.4C305.1 272.3 308.1 274.8 310.2 274.9C312.3 275.0 313.0 272.8 314.9 272.8C316.8 272.8 319.1 274.1 321.6 274.7C324.2 275.3 327.7 276.5 330.2 276.3C332.7 276.1 334.4 273.7 336.8 273.4C339.2 273.1 342.3 274.6 344.5 274.7C346.7 274.8 348.5 273.8 350.0 274.0C351.5 274.2 352.1 275.9 353.3 275.9C354.5 275.9 355.3 274.0 357.2 274.0C359.1 274.0 362.7 275.7 364.8 275.9C366.9 276.1 368.1 274.9 369.6 275.3C371.1 275.7 372.5 278.4 373.9 278.2C375.3 278.0 375.5 274.8 378.1 274.0C380.7 273.2 385.8 273.4 389.6 273.2C393.4 273.0 398.1 272.9 401.0 272.8C403.9 272.7 405.2 271.8 406.7 272.8C408.2 273.8 409.0 278.7 410.2 278.6C411.4 278.5 412.0 273.2 414.0 272.4C416.0 271.6 419.7 273.9 422.0 274.0C424.3 274.1 425.5 273.1 427.7 273.2C429.9 273.3 433.3 275.2 435.3 274.7C437.3 274.2 438.1 270.2 439.5 270.2C440.9 270.2 442.4 273.6 443.9 274.7C445.4 275.8 446.6 276.7 448.7 276.6C450.8 276.5 453.8 274.3 456.3 274.0C458.8 273.7 461.8 275.0 463.9 274.7C466.0 274.4 467.1 272.2 468.7 272.1C470.3 272.1 472.1 273.9 473.5 274.4C474.9 274.9 476.0 276.0 477.3 275.3C478.6 274.6 480.1 270.5 481.5 270.0C482.9 269.5 484.4 272.6 485.9 272.4C487.3 272.2 488.9 269.1 490.2 269.0C491.5 268.9 492.6 270.2 493.5 272.1C494.4 274.0 494.8 276.9 495.4 280.1C496.0 283.3 496.5 288.6 497.3 291.5C498.1 294.4 499.2 296.3 500.2 297.2C501.1 298.1 502.1 297.5 503.0 296.9C503.9 296.3 504.6 294.4 505.9 293.8C507.2 293.2 509.3 293.4 510.6 293.0C511.9 292.6 512.8 291.3 513.9 291.5C515.0 291.7 515.8 293.9 517.3 294.4C518.8 294.9 521.4 294.2 523.0 294.4C524.6 294.5 525.5 295.5 526.8 295.3C528.1 295.1 529.4 293.1 530.7 293.0C532.0 292.9 533.2 294.3 534.5 294.4C535.8 294.5 537.1 293.3 538.6 293.8C540.1 294.3 541.7 297.2 543.3 297.2C544.9 297.2 546.4 294.4 548.1 293.8C549.9 293.2 551.9 293.0 553.8 293.4C555.7 293.8 557.9 295.7 559.6 295.9C561.3 296.1 562.5 294.3 563.9 294.4C565.3 294.5 565.5 296.2 568.1 296.3C570.7 296.4 575.8 295.1 579.6 294.8C583.4 294.5 588.1 294.4 591.0 294.6C593.9 294.9 595.0 296.4 596.7 296.3C598.5 296.2 598.0 294.2 601.5 293.8C605.0 293.4 613.7 293.7 617.7 294.0C621.7 294.3 623.2 295.9 625.3 295.7C627.4 295.5 626.9 293.5 630.1 293.0C633.3 292.5 641.5 292.6 644.4 292.7C647.3 292.8 646.2 293.7 647.3 293.4C648.4 293.1 649.8 291.1 651.1 291.1C652.4 291.1 652.8 293.0 654.9 293.4C657.0 293.8 661.3 293.6 663.5 293.4C665.7 293.2 666.8 292.0 668.2 292.3C669.6 292.6 669.3 294.7 672.0 295.3C674.7 295.9 681.5 296.2 684.4 295.7C687.3 295.2 687.9 293.3 689.2 292.5C690.5 291.7 691.1 290.9 692.4 291.1C693.7 291.3 695.4 293.1 696.8 293.8C698.2 294.5 699.3 295.4 700.6 295.3C701.9 295.2 703.1 293.7 704.5 293.4C705.9 293.1 707.8 293.2 709.2 293.4C710.6 293.6 711.6 294.9 713.0 294.8C714.4 294.7 716.3 292.9 717.8 292.5C719.3 292.1 721.3 292.3 722.0 292.3L722.0 365.0L153.7 365.0Z" fill="#c7e9fb" stroke="none"/><clipPath id="cp1"><path d="M153.7 246.7C154.5 244.3 157.2 235.9 158.6 232.4C159.9 228.9 161.0 225.5 161.8 225.7C162.7 225.9 163.0 229.3 163.7 233.4C164.4 237.5 164.9 249.2 165.8 250.0C166.7 250.8 168.0 242.2 169.1 238.1C170.2 234.0 171.6 228.2 172.5 225.7C173.4 223.2 173.8 222.2 174.4 223.3C175.0 224.4 175.6 228.9 176.3 232.4C177.0 235.9 177.5 244.2 178.4 244.2C179.3 244.2 180.3 236.3 181.5 232.4C182.7 228.5 184.0 223.6 185.3 221.0C186.6 218.4 188.2 217.6 189.1 216.8C190.0 216.0 190.4 215.6 191.0 216.0C191.6 216.4 192.4 215.4 192.9 219.1C193.4 222.8 193.8 230.5 194.2 238.1C194.6 245.7 195.0 256.2 195.4 264.8C195.8 273.4 196.2 283.2 196.7 289.6C197.2 296.0 198.0 300.1 198.6 303.0C199.2 305.9 199.6 306.5 200.5 307.1C201.4 307.7 203.0 307.2 204.3 306.8C205.6 306.4 207.0 305.5 208.2 304.5C209.4 303.5 210.6 300.8 211.4 301.0C212.2 301.2 212.7 304.4 213.3 305.8C213.9 307.2 214.0 309.0 215.2 309.6C216.3 310.2 219.1 310.7 220.2 309.6C221.2 308.5 221.1 307.6 221.5 303.0C221.9 298.4 222.0 288.1 222.4 282.0C222.8 275.9 223.3 270.1 224.0 266.7C224.7 263.3 225.5 262.3 226.3 261.4C227.2 260.5 228.2 260.7 229.1 261.4C230.0 262.1 230.7 263.8 232.0 265.8C233.3 267.8 235.3 271.6 236.7 273.4C238.1 275.2 239.3 276.4 240.6 276.6C241.9 276.8 243.0 274.6 244.4 274.4C245.8 274.2 247.7 275.7 249.1 275.3C250.5 274.9 251.7 272.2 253.0 272.1C254.3 272.0 255.4 273.8 256.8 274.4C258.2 275.0 260.1 275.9 261.5 275.7C262.9 275.5 262.3 273.8 265.3 273.4C268.3 272.9 275.9 272.9 279.6 273.0C283.3 273.1 284.8 273.6 287.3 274.0C289.9 274.4 292.4 275.6 294.9 275.3C297.4 275.0 299.9 272.5 302.5 272.4C305.1 272.3 308.1 274.8 310.2 274.9C312.3 275.0 313.0 272.8 314.9 272.8C316.8 272.8 319.1 274.1 321.6 274.7C324.2 275.3 327.7 276.5 330.2 276.3C332.7 276.1 334.4 273.7 336.8 273.4C339.2 273.1 342.3 274.6 344.5 274.7C346.7 274.8 348.5 273.8 350.0 274.0C351.5 274.2 352.1 275.9 353.3 275.9C354.5 275.9 355.3 274.0 357.2 274.0C359.1 274.0 362.7 275.7 364.8 275.9C366.9 276.1 368.1 274.9 369.6 275.3C371.1 275.7 372.5 278.4 373.9 278.2C375.3 278.0 375.5 274.8 378.1 274.0C380.7 273.2 385.8 273.4 389.6 273.2C393.4 273.0 398.1 272.9 401.0 272.8C403.9 272.7 405.2 271.8 406.7 272.8C408.2 273.8 409.0 278.7 410.2 278.6C411.4 278.5 412.0 273.2 414.0 272.4C416.0 271.6 419.7 273.9 422.0 274.0C424.3 274.1 425.5 273.1 427.7 273.2C429.9 273.3 433.3 275.2 435.3 274.7C437.3 274.2 438.1 270.2 439.5 270.2C440.9 270.2 442.4 273.6 443.9 274.7C445.4 275.8 446.6 276.7 448.7 276.6C450.8 276.5 453.8 274.3 456.3 274.0C458.8 273.7 461.8 275.0 463.9 274.7C466.0 274.4 467.1 272.2 468.7 272.1C470.3 272.1 472.1 273.9 473.5 274.4C474.9 274.9 476.0 276.0 477.3 275.3C478.6 274.6 480.1 270.5 481.5 270.0C482.9 269.5 484.4 272.6 485.9 272.4C487.3 272.2 488.9 269.1 490.2 269.0C491.5 268.9 492.6 270.2 493.5 272.1C494.4 274.0 494.8 276.9 495.4 280.1C496.0 283.3 496.5 288.6 497.3 291.5C498.1 294.4 499.2 296.3 500.2 297.2C501.1 298.1 502.1 297.5 503.0 296.9C503.9 296.3 504.6 294.4 505.9 293.8C507.2 293.2 509.3 293.4 510.6 293.0C511.9 292.6 512.8 291.3 513.9 291.5C515.0 291.7 515.8 293.9 517.3 294.4C518.8 294.9 521.4 294.2 523.0 294.4C524.6 294.5 525.5 295.5 526.8 295.3C528.1 295.1 529.4 293.1 530.7 293.0C532.0 292.9 533.2 294.3 534.5 294.4C535.8 294.5 537.1 293.3 538.6 293.8C540.1 294.3 541.7 297.2 543.3 297.2C544.9 297.2 546.4 294.4 548.1 293.8C549.9 293.2 551.9 293.0 553.8 293.4C555.7 293.8 557.9 295.7 559.6 295.9C561.3 296.1 562.5 294.3 563.9 294.4C565.3 294.5 565.5 296.2 568.1 296.3C570.7 296.4 575.8 295.1 579.6 294.8C583.4 294.5 588.1 294.4 591.0 294.6C593.9 294.9 595.0 296.4 596.7 296.3C598.5 296.2 598.0 294.2 601.5 293.8C605.0 293.4 613.7 293.7 617.7 294.0C621.7 294.3 623.2 295.9 625.3 295.7C627.4 295.5 626.9 293.5 630.1 293.0C633.3 292.5 641.5 292.6 644.4 292.7C647.3 292.8 646.2 293.7 647.3 293.4C648.4 293.1 649.8 291.1 651.1 291.1C652.4 291.1 652.8 293.0 654.9 293.4C657.0 293.8 661.3 293.6 663.5 293.4C665.7 293.2 666.8 292.0 668.2 292.3C669.6 292.6 669.3 294.7 672.0 295.3C674.7 295.9 681.5 296.2 684.4 295.7C687.3 295.2 687.9 293.3 689.2 292.5C690.5 291.7 691.1 290.9 692.4 291.1C693.7 291.3 695.4 293.1 696.8 293.8C698.2 294.5 699.3 295.4 700.6 295.3C701.9 295.2 703.1 293.7 704.5 293.4C705.9 293.1 707.8 293.2 709.2 293.4C710.6 293.6 711.6 294.9 713.0 294.8C714.4 294.7 716.3 292.9 717.8 292.5C719.3 292.1 721.3 292.3 722.0 292.3L722.0 365.0L153.7 365.0Z"/></clipPath><g clip-path="url(#cp1)"><path d="M153.7 236.6H722.2" stroke="#bbe0f6" stroke-width="1" opacity="0.35"/><path d="M153.7 268.7H722.2" stroke="#bbe0f6" stroke-width="1" opacity="0.35"/><path d="M153.7 300.8H722.2" stroke="#bbe0f6" stroke-width="1" opacity="0.35"/><path d="M153.7 332.9H722.2" stroke="#bbe0f6" stroke-width="1" opacity="0.35"/><path d="M202.3 204.5V365.0" stroke="#bbe0f6" stroke-width="1" opacity="0.35"/><path d="M278.1 204.5V365.0" stroke="#bbe0f6" stroke-width="1" opacity="0.35"/><path d="M354.0 204.5V365.0" stroke="#bbe0f6" stroke-width="1" opacity="0.35"/><path d="M429.9 204.5V365.0" stroke="#bbe0f6" stroke-width="1" opacity="0.35"/><path d="M505.7 204.5V365.0" stroke="#bbe0f6" stroke-width="1" opacity="0.35"/><path d="M581.5 204.5V365.0" stroke="#bbe0f6" stroke-width="1" opacity="0.35"/><path d="M657.4 204.5V365.0" stroke="#bbe0f6" stroke-width="1" opacity="0.35"/></g><path d="M153.7 248.3C154.5 245.9 157.2 237.5 158.6 234.0C159.9 230.5 161.0 227.1 161.8 227.3C162.7 227.5 163.0 230.9 163.7 235.0C164.4 239.1 164.9 250.8 165.8 251.6C166.7 252.4 168.0 243.8 169.1 239.7C170.2 235.6 171.6 229.8 172.5 227.3C173.4 224.8 173.8 223.8 174.4 224.9C175.0 226.0 175.6 230.5 176.3 234.0C177.0 237.5 177.5 245.8 178.4 245.8C179.3 245.8 180.3 237.9 181.5 234.0C182.7 230.1 184.0 225.2 185.3 222.6C186.6 220.0 188.2 219.2 189.1 218.4C190.0 217.6 190.4 217.2 191.0 217.6C191.6 218.0 192.4 217.0 192.9 220.7C193.4 224.4 193.8 232.1 194.2 239.7C194.6 247.3 195.0 257.8 195.4 266.4C195.8 275.0 196.2 284.8 196.7 291.2C197.2 297.6 198.0 301.7 198.6 304.6C199.2 307.5 199.6 308.1 200.5 308.7C201.4 309.3 203.0 308.8 204.3 308.4C205.6 308.0 207.0 307.1 208.2 306.1C209.4 305.1 210.6 302.4 211.4 302.6C212.2 302.8 212.7 306.0 213.3 307.4C213.9 308.8 214.0 310.6 215.2 311.2C216.3 311.8 219.1 312.3 220.2 311.2C221.2 310.1 221.1 309.2 221.5 304.6C221.9 300.0 222.0 289.7 222.4 283.6C222.8 277.6 223.3 271.7 224.0 268.3C224.7 264.9 225.5 263.9 226.3 263.0C227.2 262.1 228.2 262.3 229.1 263.0C230.0 263.7 230.7 265.4 232.0 267.4C233.3 269.4 235.3 273.2 236.7 275.0C238.1 276.8 239.3 278.0 240.6 278.2C241.9 278.4 243.0 276.2 244.4 276.0C245.8 275.8 247.7 277.3 249.1 276.9C250.5 276.5 251.7 273.9 253.0 273.7C254.3 273.6 255.4 275.4 256.8 276.0C258.2 276.6 260.1 277.5 261.5 277.3C262.9 277.1 262.3 275.4 265.3 275.0C268.3 274.6 275.9 274.5 279.6 274.6C283.3 274.7 284.8 275.2 287.3 275.6C289.9 276.0 292.4 277.2 294.9 276.9C297.4 276.6 299.9 274.1 302.5 274.0C305.1 273.9 308.1 276.4 310.2 276.5C312.3 276.6 313.0 274.4 314.9 274.4C316.8 274.4 319.1 275.7 321.6 276.3C324.2 276.9 327.7 278.1 330.2 277.9C332.7 277.7 334.4 275.3 336.8 275.0C339.2 274.7 342.3 276.2 344.5 276.3C346.7 276.4 348.5 275.4 350.0 275.6C351.5 275.8 352.1 277.5 353.3 277.5C354.5 277.5 355.3 275.6 357.2 275.6C359.1 275.6 362.7 277.3 364.8 277.5C366.9 277.7 368.1 276.5 369.6 276.9C371.1 277.3 372.5 280.0 373.9 279.8C375.3 279.6 375.5 276.4 378.1 275.6C380.7 274.8 385.8 275.0 389.6 274.8C393.4 274.6 398.1 274.5 401.0 274.4C403.9 274.3 405.2 273.4 406.7 274.4C408.2 275.4 409.0 280.3 410.2 280.2C411.4 280.1 412.0 274.8 414.0 274.0C416.0 273.2 419.7 275.5 422.0 275.6C424.3 275.7 425.5 274.7 427.7 274.8C429.9 274.9 433.3 276.8 435.3 276.3C437.3 275.8 438.1 271.8 439.5 271.8C440.9 271.8 442.4 275.2 443.9 276.3C445.4 277.4 446.6 278.3 448.7 278.2C450.8 278.1 453.8 275.9 456.3 275.6C458.8 275.3 461.8 276.6 463.9 276.3C466.0 276.0 467.1 273.8 468.7 273.7C470.3 273.7 472.1 275.5 473.5 276.0C474.9 276.5 476.0 277.6 477.3 276.9C478.6 276.2 480.1 272.1 481.5 271.6C482.9 271.1 484.4 274.2 485.9 274.0C487.3 273.8 488.9 270.7 490.2 270.6C491.5 270.6 492.6 271.9 493.5 273.7C494.4 275.6 494.8 278.5 495.4 281.7C496.0 284.9 496.5 290.2 497.3 293.1C498.1 296.0 499.2 297.9 500.2 298.8C501.1 299.7 502.1 299.1 503.0 298.5C503.9 297.9 504.6 296.1 505.9 295.4C507.2 294.8 509.3 295.0 510.6 294.6C511.9 294.2 512.8 292.9 513.9 293.1C515.0 293.3 515.8 295.5 517.3 296.0C518.8 296.5 521.4 295.9 523.0 296.0C524.6 296.1 525.5 297.1 526.8 296.9C528.1 296.7 529.4 294.8 530.7 294.6C532.0 294.5 533.2 295.9 534.5 296.0C535.8 296.1 537.1 294.9 538.6 295.4C540.1 295.9 541.7 298.8 543.3 298.8C544.9 298.8 546.4 296.0 548.1 295.4C549.9 294.8 551.9 294.6 553.8 295.0C555.7 295.4 557.9 297.3 559.6 297.5C561.3 297.7 562.5 295.9 563.9 296.0C565.3 296.1 565.5 297.8 568.1 297.9C570.7 298.0 575.8 296.7 579.6 296.4C583.4 296.1 588.1 296.0 591.0 296.2C593.9 296.5 595.0 298.0 596.7 297.9C598.5 297.8 598.0 295.8 601.5 295.4C605.0 295.0 613.7 295.3 617.7 295.6C621.7 295.9 623.2 297.5 625.3 297.3C627.4 297.1 626.9 295.1 630.1 294.6C633.3 294.1 641.5 294.2 644.4 294.3C647.3 294.4 646.2 295.3 647.3 295.0C648.4 294.7 649.8 292.7 651.1 292.7C652.4 292.7 652.8 294.6 654.9 295.0C657.0 295.4 661.3 295.2 663.5 295.0C665.7 294.8 666.8 293.6 668.2 293.9C669.6 294.2 669.3 296.3 672.0 296.9C674.7 297.5 681.5 297.8 684.4 297.3C687.3 296.8 687.9 294.9 689.2 294.1C690.5 293.3 691.1 292.5 692.4 292.7C693.7 292.9 695.4 294.7 696.8 295.4C698.2 296.1 699.3 297.0 700.6 296.9C701.9 296.8 703.1 295.3 704.5 295.0C705.9 294.7 707.8 294.8 709.2 295.0C710.6 295.2 711.6 296.6 713.0 296.4C714.4 296.3 716.3 294.5 717.8 294.1C719.3 293.7 721.3 293.9 722.0 293.9" fill="none" stroke="#ade2fb" stroke-width="2.0" stroke-linejoin="round" stroke-linecap="butt"/><path d="M154.6 247.0C155.5 244.6 158.4 236.2 159.5 232.8C160.7 229.4 161.1 226.5 161.6 226.7C162.1 226.8 162.1 229.6 162.7 233.6C163.3 237.6 163.9 250.0 165.1 250.8C166.4 251.6 168.7 242.5 170.1 238.4C171.4 234.2 172.9 228.5 173.4 226.0C173.5 223.6 173.4 222.7 173.5 223.8C173.8 224.9 174.5 229.0 175.3 232.6C176.1 236.2 177.2 245.2 178.4 245.2C179.6 245.2 181.2 236.6 182.5 232.7C183.8 228.7 185.0 224.0 186.2 221.4C187.4 218.9 189.0 218.3 189.8 217.6C190.5 216.8 190.1 216.6 190.5 216.9C190.8 217.1 191.5 215.7 191.9 219.2C192.4 222.8 192.8 230.6 193.2 238.2C193.6 245.8 194.0 256.3 194.4 264.8C194.8 273.4 195.2 283.3 195.7 289.7C196.2 296.1 196.9 300.2 197.6 303.2C198.3 306.3 198.8 307.2 199.9 307.9C201.1 308.7 203.1 308.2 204.6 307.7C206.1 307.3 207.7 306.2 208.8 305.3C209.9 304.3 210.6 301.8 211.2 302.0C211.7 302.1 211.8 304.8 212.4 306.2C213.0 307.6 213.3 309.8 214.7 310.5C216.1 311.2 219.6 311.5 220.9 310.3C222.2 309.1 222.1 307.8 222.5 303.1C222.9 298.4 223.0 288.1 223.4 282.1C223.8 276.0 224.4 270.2 225.0 266.9C225.6 263.6 226.4 262.9 227.0 262.1C227.6 261.3 227.8 261.5 228.5 262.2C229.2 262.9 229.9 264.4 231.2 266.3C232.4 268.3 234.4 272.1 235.9 274.0C237.5 275.9 239.0 277.4 240.5 277.6C241.9 277.8 243.1 275.6 244.6 275.4C246.0 275.2 247.9 276.6 249.4 276.3C250.8 275.9 251.9 273.3 253.1 273.1C254.3 272.9 255.0 274.7 256.4 275.3C257.8 275.9 260.1 276.8 261.6 276.7C263.1 276.5 262.5 274.8 265.4 274.4C268.4 273.9 276.0 273.9 279.6 274.0C283.2 274.1 284.6 274.6 287.2 275.0C289.7 275.4 292.4 276.6 295.0 276.3C297.6 276.0 300.0 273.5 302.5 273.4C305.1 273.3 308.1 275.8 310.2 275.9C312.2 276.0 313.0 273.8 314.9 273.8C316.8 273.8 318.8 275.1 321.4 275.7C323.9 276.3 327.7 277.5 330.3 277.3C332.9 277.1 334.5 274.7 336.9 274.4C339.3 274.1 342.3 275.6 344.5 275.7C346.6 275.8 348.4 274.8 349.9 275.0C351.3 275.2 352.1 276.9 353.3 276.9C354.5 276.9 355.3 275.0 357.2 275.0C359.1 275.0 362.7 276.7 364.7 276.9C366.7 277.1 367.8 275.9 369.4 276.3C370.9 276.7 372.5 279.4 374.1 279.2C375.6 279.0 375.8 275.8 378.4 275.0C381.0 274.1 385.9 274.4 389.7 274.2C393.4 274.0 398.3 273.9 401.0 273.8C403.8 273.7 404.6 272.7 406.2 273.6C407.7 274.6 408.9 279.7 410.3 279.6C411.6 279.5 412.4 274.1 414.4 273.3C416.3 272.6 419.7 274.9 421.9 275.0C424.2 275.1 425.4 274.1 427.6 274.2C429.9 274.3 433.6 276.2 435.5 275.7C437.5 275.2 438.2 271.2 439.5 271.2C440.8 271.2 441.8 274.5 443.3 275.5C444.9 276.6 446.6 277.7 448.8 277.6C450.9 277.5 453.9 275.3 456.4 275.0C459.0 274.7 462.0 276.0 464.1 275.7C466.1 275.4 467.2 273.2 468.7 273.1C470.2 273.0 471.6 274.8 473.2 275.3C474.7 275.9 476.3 276.9 477.8 276.2C479.2 275.4 480.4 271.4 481.8 270.9C483.2 270.5 484.6 273.6 486.0 273.4C487.4 273.2 489.1 270.1 490.2 270.0C491.3 269.9 491.9 270.8 492.6 272.5C493.3 274.2 493.8 277.1 494.4 280.3C495.0 283.5 495.5 288.8 496.3 291.8C497.2 294.7 498.3 296.9 499.5 297.9C500.7 298.9 502.4 298.3 503.5 297.8C504.7 297.2 505.1 295.3 506.4 294.7C507.6 294.1 509.7 294.3 510.9 294.0C512.1 293.6 512.7 292.2 513.7 292.5C514.7 292.7 515.5 294.9 517.0 295.4C518.5 295.8 521.2 295.2 522.9 295.4C524.6 295.6 525.7 296.5 527.0 296.3C528.3 296.1 529.6 294.1 530.8 294.0C532.1 293.8 533.2 295.3 534.4 295.4C535.6 295.5 536.8 294.3 538.3 294.8C539.8 295.2 541.6 298.2 543.3 298.2C545.0 298.2 546.7 295.4 548.4 294.7C550.2 294.1 551.8 294.0 553.6 294.4C555.5 294.7 557.8 296.7 559.5 296.9C561.2 297.1 562.4 295.3 563.9 295.4C565.3 295.5 565.4 297.2 568.1 297.3C570.7 297.4 575.9 296.1 579.7 295.8C583.5 295.5 588.1 295.3 590.9 295.6C593.8 295.8 595.0 297.4 596.8 297.3C598.6 297.2 598.1 295.2 601.6 294.8C605.1 294.4 613.7 294.7 617.6 295.0C621.6 295.3 623.3 296.9 625.4 296.7C627.5 296.5 627.1 294.5 630.3 294.0C633.4 293.5 641.5 293.6 644.4 293.7C647.3 293.8 646.4 294.6 647.5 294.4C648.7 294.1 649.9 292.1 651.1 292.1C652.3 292.1 652.6 294.0 654.7 294.4C656.8 294.8 661.4 294.6 663.6 294.4C665.8 294.2 666.6 293.0 668.0 293.3C669.4 293.6 669.0 295.7 671.8 296.3C674.6 296.8 681.6 297.2 684.6 296.7C687.5 296.2 688.4 294.1 689.7 293.4C691.0 292.6 691.1 291.9 692.2 292.1C693.3 292.3 694.9 294.0 696.3 294.7C697.7 295.4 699.3 296.4 700.7 296.3C702.0 296.2 703.3 294.7 704.7 294.4C706.1 294.1 707.6 294.2 709.0 294.4C710.4 294.6 711.6 295.9 713.1 295.8C714.6 295.6 716.6 293.9 718.1 293.5C719.6 293.0 721.4 293.3 722.0 293.3" fill="none" stroke="#7883d1" stroke-width="1.6" stroke-linejoin="round" stroke-linecap="butt" opacity="0.80"/><path d="M153.7 246.7C154.5 244.3 157.2 235.9 158.6 232.4C159.9 228.9 161.0 225.5 161.8 225.7C162.7 225.9 163.0 229.3 163.7 233.4C164.4 237.5 164.9 249.2 165.8 250.0C166.7 250.8 168.0 242.2 169.1 238.1C170.2 234.0 171.6 228.2 172.5 225.7C173.4 223.2 173.8 222.2 174.4 223.3C175.0 224.4 175.6 228.9 176.3 232.4C177.0 235.9 177.5 244.2 178.4 244.2C179.3 244.2 180.3 236.3 181.5 232.4C182.7 228.5 184.0 223.6 185.3 221.0C186.6 218.4 188.2 217.6 189.1 216.8C190.0 216.0 190.4 215.6 191.0 216.0C191.6 216.4 192.4 215.4 192.9 219.1C193.4 222.8 193.8 230.5 194.2 238.1C194.6 245.7 195.0 256.2 195.4 264.8C195.8 273.4 196.2 283.2 196.7 289.6C197.2 296.0 198.0 300.1 198.6 303.0C199.2 305.9 199.6 306.5 200.5 307.1C201.4 307.7 203.0 307.2 204.3 306.8C205.6 306.4 207.0 305.5 208.2 304.5C209.4 303.5 210.6 300.8 211.4 301.0C212.2 301.2 212.7 304.4 213.3 305.8C213.9 307.2 214.0 309.0 215.2 309.6C216.3 310.2 219.1 310.7 220.2 309.6C221.2 308.5 221.1 307.6 221.5 303.0C221.9 298.4 222.0 288.1 222.4 282.0C222.8 275.9 223.3 270.1 224.0 266.7C224.7 263.3 225.5 262.3 226.3 261.4C227.2 260.5 228.2 260.7 229.1 261.4C230.0 262.1 230.7 263.8 232.0 265.8C233.3 267.8 235.3 271.6 236.7 273.4C238.1 275.2 239.3 276.4 240.6 276.6C241.9 276.8 243.0 274.6 244.4 274.4C245.8 274.2 247.7 275.7 249.1 275.3C250.5 274.9 251.7 272.2 253.0 272.1C254.3 272.0 255.4 273.8 256.8 274.4C258.2 275.0 260.1 275.9 261.5 275.7C262.9 275.5 262.3 273.8 265.3 273.4C268.3 272.9 275.9 272.9 279.6 273.0C283.3 273.1 284.8 273.6 287.3 274.0C289.9 274.4 292.4 275.6 294.9 275.3C297.4 275.0 299.9 272.5 302.5 272.4C305.1 272.3 308.1 274.8 310.2 274.9C312.3 275.0 313.0 272.8 314.9 272.8C316.8 272.8 319.1 274.1 321.6 274.7C324.2 275.3 327.7 276.5 330.2 276.3C332.7 276.1 334.4 273.7 336.8 273.4C339.2 273.1 342.3 274.6 344.5 274.7C346.7 274.8 348.5 273.8 350.0 274.0C351.5 274.2 352.1 275.9 353.3 275.9C354.5 275.9 355.3 274.0 357.2 274.0C359.1 274.0 362.7 275.7 364.8 275.9C366.9 276.1 368.1 274.9 369.6 275.3C371.1 275.7 372.5 278.4 373.9 278.2C375.3 278.0 375.5 274.8 378.1 274.0C380.7 273.2 385.8 273.4 389.6 273.2C393.4 273.0 398.1 272.9 401.0 272.8C403.9 272.7 405.2 271.8 406.7 272.8C408.2 273.8 409.0 278.7 410.2 278.6C411.4 278.5 412.0 273.2 414.0 272.4C416.0 271.6 419.7 273.9 422.0 274.0C424.3 274.1 425.5 273.1 427.7 273.2C429.9 273.3 433.3 275.2 435.3 274.7C437.3 274.2 438.1 270.2 439.5 270.2C440.9 270.2 442.4 273.6 443.9 274.7C445.4 275.8 446.6 276.7 448.7 276.6C450.8 276.5 453.8 274.3 456.3 274.0C458.8 273.7 461.8 275.0 463.9 274.7C466.0 274.4 467.1 272.2 468.7 272.1C470.3 272.1 472.1 273.9 473.5 274.4C474.9 274.9 476.0 276.0 477.3 275.3C478.6 274.6 480.1 270.5 481.5 270.0C482.9 269.5 484.4 272.6 485.9 272.4C487.3 272.2 488.9 269.1 490.2 269.0C491.5 268.9 492.6 270.2 493.5 272.1C494.4 274.0 494.8 276.9 495.4 280.1C496.0 283.3 496.5 288.6 497.3 291.5C498.1 294.4 499.2 296.3 500.2 297.2C501.1 298.1 502.1 297.5 503.0 296.9C503.9 296.3 504.6 294.4 505.9 293.8C507.2 293.2 509.3 293.4 510.6 293.0C511.9 292.6 512.8 291.3 513.9 291.5C515.0 291.7 515.8 293.9 517.3 294.4C518.8 294.9 521.4 294.2 523.0 294.4C524.6 294.5 525.5 295.5 526.8 295.3C528.1 295.1 529.4 293.1 530.7 293.0C532.0 292.9 533.2 294.3 534.5 294.4C535.8 294.5 537.1 293.3 538.6 293.8C540.1 294.3 541.7 297.2 543.3 297.2C544.9 297.2 546.4 294.4 548.1 293.8C549.9 293.2 551.9 293.0 553.8 293.4C555.7 293.8 557.9 295.7 559.6 295.9C561.3 296.1 562.5 294.3 563.9 294.4C565.3 294.5 565.5 296.2 568.1 296.3C570.7 296.4 575.8 295.1 579.6 294.8C583.4 294.5 588.1 294.4 591.0 294.6C593.9 294.9 595.0 296.4 596.7 296.3C598.5 296.2 598.0 294.2 601.5 293.8C605.0 293.4 613.7 293.7 617.7 294.0C621.7 294.3 623.2 295.9 625.3 295.7C627.4 295.5 626.9 293.5 630.1 293.0C633.3 292.5 641.5 292.6 644.4 292.7C647.3 292.8 646.2 293.7 647.3 293.4C648.4 293.1 649.8 291.1 651.1 291.1C652.4 291.1 652.8 293.0 654.9 293.4C657.0 293.8 661.3 293.6 663.5 293.4C665.7 293.2 666.8 292.0 668.2 292.3C669.6 292.6 669.3 294.7 672.0 295.3C674.7 295.9 681.5 296.2 684.4 295.7C687.3 295.2 687.9 293.3 689.2 292.5C690.5 291.7 691.1 290.9 692.4 291.1C693.7 291.3 695.4 293.1 696.8 293.8C698.2 294.5 699.3 295.4 700.6 295.3C701.9 295.2 703.1 293.7 704.5 293.4C705.9 293.1 707.8 293.2 709.2 293.4C710.6 293.6 711.6 294.9 713.0 294.8C714.4 294.7 716.3 292.9 717.8 292.5C719.3 292.1 721.3 292.3 722.0 292.3" fill="none" stroke="#ffdfae" stroke-width="2.2" stroke-linejoin="round" stroke-linecap="butt"/><path d="M737.2 205.5H766.8" stroke="#ade2fb" stroke-width="2.2"/><circle cx="752.0" cy="205.5" r="5.9" fill="#fff" stroke="#ade2fb" stroke-width="2.3"/><text x="773.5" y="210.0" font-size="15.8" fill="#333" textLength="26.7" lengthAdjust="spacingAndGlyphs">ziox</text><path d="M737.2 233.0H766.8" stroke="#6776c7" stroke-width="2.2"/><circle cx="752.0" cy="233.0" r="5.9" fill="#fff" stroke="#6776c7" stroke-width="2.3"/><text x="773.5" y="237.5" font-size="15.8" fill="#333" textLength="155.6" lengthAdjust="spacingAndGlyphs">openobserve-collector</text><path d="M737.2 260.9H766.8" stroke="#e0676a" stroke-width="2.2"/><circle cx="752.0" cy="260.9" r="5.9" fill="#fff" stroke="#e0676a" stroke-width="2.3"/><text x="773.5" y="265.4" font-size="15.8" fill="#333" textLength="92.8" lengthAdjust="spacingAndGlyphs">ingress-nginx</text><path d="M737.2 288.8H766.8" stroke="#fff497" stroke-width="2.2"/><circle cx="752.0" cy="288.8" r="5.9" fill="#fff" stroke="#fff497" stroke-width="2.3"/><text x="773.5" y="293.3" font-size="15.8" fill="#333" textLength="87.2" lengthAdjust="spacingAndGlyphs">kube-system</text><path d="M737.2 316.7H766.8" stroke="#f4aeae" stroke-width="2.2"/><circle cx="752.0" cy="316.7" r="5.9" fill="#fff" stroke="#f4aeae" stroke-width="2.3"/><text x="773.5" y="321.2" font-size="15.8" fill="#333" textLength="92.4" lengthAdjust="spacingAndGlyphs">cert-manager</text><path d="M737.2 344.7H766.8" stroke="#6dbf72" stroke-width="2.2"/><circle cx="752.0" cy="344.7" r="5.9" fill="#fff" stroke="#6dbf72" stroke-width="2.3"/><text x="773.5" y="349.2" font-size="15.8" fill="#333" textLength="203.4" lengthAdjust="spacingAndGlyphs">opentelemetry-operator-sys...</text><path d="M814.0 381.9L832.3 381.9L823.2 365.3Z" fill="#aaa"/><text x="856.5" y="379.0" text-anchor="middle" font-size="15.6" fill="#333">1/2</text><path d="M879.8 365.1L898.3 365.1L889.0 381.8Z" fill="#33373c"/><path d="M1088.6 204.5H1628.3" stroke="#ebeef7" stroke-width="1"/><path d="M1088.6 236.6H1628.3" stroke="#ebeef7" stroke-width="1"/><path d="M1088.6 268.7H1628.3" stroke="#ebeef7" stroke-width="1"/><path d="M1088.6 300.8H1628.3" stroke="#ebeef7" stroke-width="1"/><path d="M1088.6 332.9H1628.3" stroke="#ebeef7" stroke-width="1"/><path d="M1088.6 365.0H1628.3" stroke="#ebeef7" stroke-width="1"/><path d="M1088.6 204.5V365.0" stroke="#ebeef7" stroke-width="1"/><path d="M1134.7 204.5V365.0" stroke="#ebeef7" stroke-width="1"/><path d="M1206.7 204.5V365.0" stroke="#ebeef7" stroke-width="1"/><path d="M1278.8 204.5V365.0" stroke="#ebeef7" stroke-width="1"/><path d="M1350.8 204.5V365.0" stroke="#ebeef7" stroke-width="1"/><path d="M1422.8 204.5V365.0" stroke="#ebeef7" stroke-width="1"/><path d="M1494.8 204.5V365.0" stroke="#ebeef7" stroke-width="1"/><path d="M1566.9 204.5V365.0" stroke="#ebeef7" stroke-width="1"/><path d="M1628.3 204.5V365.0" stroke="#ebeef7" stroke-width="1"/><path d="M1134.7 365.0V371.4" stroke="#6E7079" stroke-width="1.2"/><path d="M1206.7 365.0V371.4" stroke="#6E7079" stroke-width="1.2"/><path d="M1278.8 365.0V371.4" stroke="#6E7079" stroke-width="1.2"/><path d="M1350.8 365.0V371.4" stroke="#6E7079" stroke-width="1.2"/><path d="M1422.8 365.0V371.4" stroke="#6E7079" stroke-width="1.2"/><path d="M1494.8 365.0V371.4" stroke="#6E7079" stroke-width="1.2"/><path d="M1566.9 365.0V371.4" stroke="#6E7079" stroke-width="1.2"/><text transform="translate(1078.8 208.3) scale(0.890 1)" text-anchor="end" font-size="16.2" fill="#75777f">232.83GB</text><text transform="translate(1078.8 240.4) scale(0.890 1)" text-anchor="end" font-size="16.2" fill="#75777f">186.26GB</text><text transform="translate(1078.8 272.5) scale(0.890 1)" text-anchor="end" font-size="16.2" fill="#75777f">139.70GB</text><text transform="translate(1078.8 304.6) scale(0.890 1)" text-anchor="end" font-size="16.2" fill="#75777f">93.13GB</text><text transform="translate(1078.8 336.7) scale(0.890 1)" text-anchor="end" font-size="16.2" fill="#75777f">46.57GB</text><text transform="translate(1078.8 368.8) scale(0.890 1)" text-anchor="end" font-size="16.2" fill="#75777f">0.00B</text><text transform="translate(1134.7 386.1) scale(0.890 1)" text-anchor="middle" font-size="16.2" fill="#75777f">11</text><text transform="translate(1206.7 386.1) scale(0.890 1)" text-anchor="middle" font-size="16.2" fill="#75777f">12</text><text transform="translate(1278.8 386.1) scale(0.890 1)" text-anchor="middle" font-size="16.2" fill="#75777f">13</text><text transform="translate(1350.8 386.1) scale(0.890 1)" text-anchor="middle" font-size="16.2" fill="#75777f">14</text><text transform="translate(1422.8 386.1) scale(0.890 1)" text-anchor="middle" font-size="16.2" fill="#75777f">15</text><text transform="translate(1494.8 386.1) scale(0.890 1)" text-anchor="middle" font-size="16.2" fill="#75777f">16</text><text transform="translate(1566.9 386.1) scale(0.890 1)" text-anchor="middle" font-size="16.2" fill="#75777f">17</text><path d="M1088.6 264.5C1089.2 264.8 1090.7 266.2 1092.4 266.4C1094.2 266.5 1097.2 266.2 1099.1 265.4C1101.0 264.6 1102.3 263.0 1103.8 261.6C1105.3 260.2 1106.8 256.3 1108.2 256.8C1109.6 257.3 1111.1 265.3 1112.4 264.5C1113.7 263.7 1114.9 257.0 1116.2 252.1C1117.5 247.2 1119.1 236.8 1120.0 234.9C1120.9 233.0 1121.1 233.3 1121.6 240.6C1122.1 247.9 1122.4 269.9 1122.9 278.8C1123.4 287.7 1124.0 289.9 1124.8 294.0C1125.6 298.1 1126.9 299.4 1128.0 303.5C1129.1 307.6 1130.3 315.0 1131.5 318.8C1132.7 322.6 1134.0 325.9 1135.3 326.4C1136.6 326.9 1137.8 323.3 1139.1 321.7C1140.4 320.1 1142.0 316.4 1143.3 316.9C1144.6 317.4 1145.7 324.8 1147.1 324.5C1148.5 324.2 1150.0 317.5 1151.5 315.0C1153.0 312.5 1154.9 310.6 1156.3 309.6C1157.7 308.6 1159.2 307.0 1160.1 308.9C1161.0 310.8 1161.1 316.3 1161.6 320.7C1162.1 325.1 1162.2 333.4 1162.9 335.0C1163.6 336.6 1164.9 331.5 1165.8 330.2C1166.7 328.9 1167.2 328.0 1168.1 327.4C1169.0 326.8 1170.2 328.1 1171.1 326.4C1172.0 324.6 1172.7 318.8 1173.4 316.9C1174.1 315.0 1174.5 314.1 1175.3 315.0C1176.1 315.9 1177.1 322.9 1178.2 322.6C1179.3 322.3 1181.0 314.6 1182.0 313.1C1183.0 311.6 1183.7 312.9 1184.5 313.5C1185.3 314.1 1186.2 318.0 1187.1 316.5C1187.9 315.0 1188.4 306.7 1189.6 304.5C1190.8 302.3 1193.0 302.6 1194.4 303.5C1195.8 304.4 1196.3 309.7 1198.2 310.2C1200.1 310.7 1203.2 307.5 1205.8 306.4C1208.3 305.3 1211.0 304.3 1213.5 303.5C1216.0 302.7 1218.9 302.1 1221.1 301.6C1223.3 301.1 1225.2 300.5 1226.8 300.7C1228.4 300.9 1229.3 303.1 1230.6 302.6C1231.9 302.1 1233.2 299.2 1234.4 297.8C1235.6 296.4 1236.6 294.4 1237.9 294.4C1239.2 294.4 1240.4 297.5 1242.1 297.8C1243.8 298.1 1245.9 297.1 1247.8 296.3C1249.7 295.5 1251.9 293.6 1253.5 293.1C1255.1 292.6 1256.0 293.8 1257.3 293.1C1258.6 292.4 1259.7 289.1 1261.1 288.7C1262.5 288.3 1264.5 291.1 1265.9 290.6C1267.3 290.2 1268.3 286.9 1269.7 286.0C1271.1 285.1 1272.7 285.4 1274.5 285.4C1276.3 285.4 1279.1 287.1 1280.5 286.0C1281.9 284.9 1282.2 280.7 1283.0 278.8C1283.8 276.9 1284.5 274.0 1285.3 274.6C1286.0 275.2 1286.4 280.8 1287.5 282.6C1288.6 284.4 1290.4 284.2 1291.9 285.4C1293.4 286.6 1295.2 288.8 1296.7 289.8C1298.2 290.8 1299.6 291.5 1300.9 291.2C1302.2 290.9 1303.1 288.0 1304.3 287.9C1305.5 287.8 1305.5 290.5 1308.1 290.6C1310.6 290.7 1316.7 289.6 1319.6 288.7C1322.5 287.8 1322.4 286.0 1325.3 285.4C1328.2 284.8 1334.2 284.5 1336.7 284.9C1339.2 285.3 1338.6 287.5 1340.5 287.9C1342.4 288.3 1346.6 288.8 1348.2 287.3C1349.8 285.8 1349.5 280.7 1350.1 278.8C1350.7 276.9 1351.4 275.3 1352.0 275.9C1352.6 276.5 1353.2 280.9 1353.9 282.6C1354.6 284.4 1354.6 285.6 1356.2 286.4C1357.8 287.2 1361.2 287.6 1363.4 287.3C1365.6 287.1 1366.9 285.0 1369.1 284.9C1371.3 284.8 1374.2 286.3 1376.8 286.4C1379.3 286.5 1381.9 286.0 1384.4 285.4C1386.9 284.8 1389.6 283.4 1392.0 283.0C1394.4 282.6 1397.3 282.4 1398.7 283.0C1400.1 283.6 1400.1 282.0 1400.6 286.4C1401.1 290.8 1401.4 302.9 1401.9 309.3C1402.4 315.7 1402.8 322.4 1403.5 324.5C1404.2 326.6 1405.1 323.0 1406.3 321.7C1407.5 320.4 1409.5 316.4 1410.7 316.5C1411.9 316.6 1412.4 321.4 1413.4 322.6C1414.4 323.8 1415.6 324.7 1416.8 323.6C1418.0 322.5 1419.5 317.6 1420.6 315.9C1421.7 314.2 1422.4 313.3 1423.5 313.5C1424.6 313.7 1426.2 317.8 1427.3 316.9C1428.3 316.0 1429.2 310.1 1429.8 308.3C1430.4 306.6 1430.6 305.6 1431.1 306.4C1431.6 307.2 1432.3 311.5 1433.0 313.1C1433.7 314.7 1434.1 315.6 1435.5 315.9C1436.9 316.2 1438.7 315.4 1441.6 315.0C1444.5 314.6 1449.7 313.9 1453.0 313.5C1456.3 313.1 1459.2 312.4 1461.4 312.7C1463.6 312.9 1464.3 315.0 1466.2 315.0C1468.1 315.0 1469.9 313.3 1472.9 312.7C1475.9 312.1 1480.8 311.8 1484.3 311.2C1487.8 310.6 1491.1 309.9 1493.9 309.3C1496.7 308.7 1499.2 307.4 1501.1 307.7C1503.0 308.0 1503.8 310.8 1505.3 311.2C1506.8 311.6 1508.7 310.7 1510.1 310.2C1511.5 309.7 1512.8 307.9 1513.9 308.3C1515.0 308.7 1514.6 312.2 1516.7 312.7C1518.8 313.2 1522.2 311.8 1526.3 311.2C1530.4 310.6 1536.4 309.9 1541.5 309.3C1546.6 308.7 1551.7 308.1 1556.8 307.7C1561.9 307.3 1568.2 307.3 1572.0 307.0C1575.8 306.7 1577.4 305.9 1579.6 305.8C1581.8 305.7 1583.5 305.8 1585.4 306.4C1587.3 307.0 1588.9 309.1 1591.1 309.6C1593.3 310.1 1597.0 310.2 1598.7 309.3C1600.5 308.4 1600.8 305.8 1601.6 304.5C1602.4 303.2 1602.9 301.4 1603.5 301.6C1604.1 301.8 1604.7 304.2 1605.4 305.5C1606.1 306.8 1605.8 308.9 1607.9 309.3C1610.0 309.7 1614.4 308.2 1617.8 307.9C1621.2 307.6 1626.5 307.5 1628.3 307.4L1628.3 365.0L1088.6 365.0Z" fill="#c7e9fb" stroke="none"/><clipPath id="cp2"><path d="M1088.6 264.5C1089.2 264.8 1090.7 266.2 1092.4 266.4C1094.2 266.5 1097.2 266.2 1099.1 265.4C1101.0 264.6 1102.3 263.0 1103.8 261.6C1105.3 260.2 1106.8 256.3 1108.2 256.8C1109.6 257.3 1111.1 265.3 1112.4 264.5C1113.7 263.7 1114.9 257.0 1116.2 252.1C1117.5 247.2 1119.1 236.8 1120.0 234.9C1120.9 233.0 1121.1 233.3 1121.6 240.6C1122.1 247.9 1122.4 269.9 1122.9 278.8C1123.4 287.7 1124.0 289.9 1124.8 294.0C1125.6 298.1 1126.9 299.4 1128.0 303.5C1129.1 307.6 1130.3 315.0 1131.5 318.8C1132.7 322.6 1134.0 325.9 1135.3 326.4C1136.6 326.9 1137.8 323.3 1139.1 321.7C1140.4 320.1 1142.0 316.4 1143.3 316.9C1144.6 317.4 1145.7 324.8 1147.1 324.5C1148.5 324.2 1150.0 317.5 1151.5 315.0C1153.0 312.5 1154.9 310.6 1156.3 309.6C1157.7 308.6 1159.2 307.0 1160.1 308.9C1161.0 310.8 1161.1 316.3 1161.6 320.7C1162.1 325.1 1162.2 333.4 1162.9 335.0C1163.6 336.6 1164.9 331.5 1165.8 330.2C1166.7 328.9 1167.2 328.0 1168.1 327.4C1169.0 326.8 1170.2 328.1 1171.1 326.4C1172.0 324.6 1172.7 318.8 1173.4 316.9C1174.1 315.0 1174.5 314.1 1175.3 315.0C1176.1 315.9 1177.1 322.9 1178.2 322.6C1179.3 322.3 1181.0 314.6 1182.0 313.1C1183.0 311.6 1183.7 312.9 1184.5 313.5C1185.3 314.1 1186.2 318.0 1187.1 316.5C1187.9 315.0 1188.4 306.7 1189.6 304.5C1190.8 302.3 1193.0 302.6 1194.4 303.5C1195.8 304.4 1196.3 309.7 1198.2 310.2C1200.1 310.7 1203.2 307.5 1205.8 306.4C1208.3 305.3 1211.0 304.3 1213.5 303.5C1216.0 302.7 1218.9 302.1 1221.1 301.6C1223.3 301.1 1225.2 300.5 1226.8 300.7C1228.4 300.9 1229.3 303.1 1230.6 302.6C1231.9 302.1 1233.2 299.2 1234.4 297.8C1235.6 296.4 1236.6 294.4 1237.9 294.4C1239.2 294.4 1240.4 297.5 1242.1 297.8C1243.8 298.1 1245.9 297.1 1247.8 296.3C1249.7 295.5 1251.9 293.6 1253.5 293.1C1255.1 292.6 1256.0 293.8 1257.3 293.1C1258.6 292.4 1259.7 289.1 1261.1 288.7C1262.5 288.3 1264.5 291.1 1265.9 290.6C1267.3 290.2 1268.3 286.9 1269.7 286.0C1271.1 285.1 1272.7 285.4 1274.5 285.4C1276.3 285.4 1279.1 287.1 1280.5 286.0C1281.9 284.9 1282.2 280.7 1283.0 278.8C1283.8 276.9 1284.5 274.0 1285.3 274.6C1286.0 275.2 1286.4 280.8 1287.5 282.6C1288.6 284.4 1290.4 284.2 1291.9 285.4C1293.4 286.6 1295.2 288.8 1296.7 289.8C1298.2 290.8 1299.6 291.5 1300.9 291.2C1302.2 290.9 1303.1 288.0 1304.3 287.9C1305.5 287.8 1305.5 290.5 1308.1 290.6C1310.6 290.7 1316.7 289.6 1319.6 288.7C1322.5 287.8 1322.4 286.0 1325.3 285.4C1328.2 284.8 1334.2 284.5 1336.7 284.9C1339.2 285.3 1338.6 287.5 1340.5 287.9C1342.4 288.3 1346.6 288.8 1348.2 287.3C1349.8 285.8 1349.5 280.7 1350.1 278.8C1350.7 276.9 1351.4 275.3 1352.0 275.9C1352.6 276.5 1353.2 280.9 1353.9 282.6C1354.6 284.4 1354.6 285.6 1356.2 286.4C1357.8 287.2 1361.2 287.6 1363.4 287.3C1365.6 287.1 1366.9 285.0 1369.1 284.9C1371.3 284.8 1374.2 286.3 1376.8 286.4C1379.3 286.5 1381.9 286.0 1384.4 285.4C1386.9 284.8 1389.6 283.4 1392.0 283.0C1394.4 282.6 1397.3 282.4 1398.7 283.0C1400.1 283.6 1400.1 282.0 1400.6 286.4C1401.1 290.8 1401.4 302.9 1401.9 309.3C1402.4 315.7 1402.8 322.4 1403.5 324.5C1404.2 326.6 1405.1 323.0 1406.3 321.7C1407.5 320.4 1409.5 316.4 1410.7 316.5C1411.9 316.6 1412.4 321.4 1413.4 322.6C1414.4 323.8 1415.6 324.7 1416.8 323.6C1418.0 322.5 1419.5 317.6 1420.6 315.9C1421.7 314.2 1422.4 313.3 1423.5 313.5C1424.6 313.7 1426.2 317.8 1427.3 316.9C1428.3 316.0 1429.2 310.1 1429.8 308.3C1430.4 306.6 1430.6 305.6 1431.1 306.4C1431.6 307.2 1432.3 311.5 1433.0 313.1C1433.7 314.7 1434.1 315.6 1435.5 315.9C1436.9 316.2 1438.7 315.4 1441.6 315.0C1444.5 314.6 1449.7 313.9 1453.0 313.5C1456.3 313.1 1459.2 312.4 1461.4 312.7C1463.6 312.9 1464.3 315.0 1466.2 315.0C1468.1 315.0 1469.9 313.3 1472.9 312.7C1475.9 312.1 1480.8 311.8 1484.3 311.2C1487.8 310.6 1491.1 309.9 1493.9 309.3C1496.7 308.7 1499.2 307.4 1501.1 307.7C1503.0 308.0 1503.8 310.8 1505.3 311.2C1506.8 311.6 1508.7 310.7 1510.1 310.2C1511.5 309.7 1512.8 307.9 1513.9 308.3C1515.0 308.7 1514.6 312.2 1516.7 312.7C1518.8 313.2 1522.2 311.8 1526.3 311.2C1530.4 310.6 1536.4 309.9 1541.5 309.3C1546.6 308.7 1551.7 308.1 1556.8 307.7C1561.9 307.3 1568.2 307.3 1572.0 307.0C1575.8 306.7 1577.4 305.9 1579.6 305.8C1581.8 305.7 1583.5 305.8 1585.4 306.4C1587.3 307.0 1588.9 309.1 1591.1 309.6C1593.3 310.1 1597.0 310.2 1598.7 309.3C1600.5 308.4 1600.8 305.8 1601.6 304.5C1602.4 303.2 1602.9 301.4 1603.5 301.6C1604.1 301.8 1604.7 304.2 1605.4 305.5C1606.1 306.8 1605.8 308.9 1607.9 309.3C1610.0 309.7 1614.4 308.2 1617.8 307.9C1621.2 307.6 1626.5 307.5 1628.3 307.4L1628.3 365.0L1088.6 365.0Z"/></clipPath><g clip-path="url(#cp2)"><path d="M1088.6 236.6H1628.3" stroke="#bbe0f6" stroke-width="1" opacity="0.35"/><path d="M1088.6 268.7H1628.3" stroke="#bbe0f6" stroke-width="1" opacity="0.35"/><path d="M1088.6 300.8H1628.3" stroke="#bbe0f6" stroke-width="1" opacity="0.35"/><path d="M1088.6 332.9H1628.3" stroke="#bbe0f6" stroke-width="1" opacity="0.35"/><path d="M1134.7 204.5V365.0" stroke="#bbe0f6" stroke-width="1" opacity="0.35"/><path d="M1206.7 204.5V365.0" stroke="#bbe0f6" stroke-width="1" opacity="0.35"/><path d="M1278.8 204.5V365.0" stroke="#bbe0f6" stroke-width="1" opacity="0.35"/><path d="M1350.8 204.5V365.0" stroke="#bbe0f6" stroke-width="1" opacity="0.35"/><path d="M1422.8 204.5V365.0" stroke="#bbe0f6" stroke-width="1" opacity="0.35"/><path d="M1494.8 204.5V365.0" stroke="#bbe0f6" stroke-width="1" opacity="0.35"/><path d="M1566.9 204.5V365.0" stroke="#bbe0f6" stroke-width="1" opacity="0.35"/></g><path d="M1088.6 265.4C1089.2 265.7 1090.7 267.1 1092.4 267.3C1094.2 267.4 1097.2 267.1 1099.1 266.3C1101.0 265.5 1102.3 263.9 1103.8 262.5C1105.3 261.1 1106.8 257.2 1108.2 257.7C1109.6 258.2 1111.1 266.2 1112.4 265.4C1113.7 264.6 1114.9 257.9 1116.2 253.0C1117.5 248.1 1119.1 237.7 1120.0 235.8C1120.9 233.9 1121.1 234.2 1121.6 241.5C1122.1 248.8 1122.4 270.8 1122.9 279.7C1123.4 288.6 1124.0 290.8 1124.8 294.9C1125.6 299.0 1126.9 300.3 1128.0 304.4C1129.1 308.5 1130.3 315.9 1131.5 319.7C1132.7 323.5 1134.0 326.8 1135.3 327.3C1136.6 327.8 1137.8 324.2 1139.1 322.6C1140.4 321.0 1142.0 317.3 1143.3 317.8C1144.6 318.3 1145.7 325.7 1147.1 325.4C1148.5 325.1 1150.0 318.4 1151.5 315.9C1153.0 313.4 1154.9 311.5 1156.3 310.5C1157.7 309.5 1159.2 307.9 1160.1 309.8C1161.0 311.6 1161.1 317.2 1161.6 321.6C1162.1 325.9 1162.2 334.3 1162.9 335.9C1163.6 337.5 1164.9 332.4 1165.8 331.1C1166.7 329.8 1167.2 328.9 1168.1 328.3C1169.0 327.7 1170.2 329.0 1171.1 327.3C1172.0 325.5 1172.7 319.7 1173.4 317.8C1174.1 315.9 1174.5 314.9 1175.3 315.9C1176.1 316.8 1177.1 323.8 1178.2 323.5C1179.3 323.2 1181.0 315.5 1182.0 314.0C1183.0 312.5 1183.7 313.8 1184.5 314.4C1185.3 315.0 1186.2 318.9 1187.1 317.4C1187.9 315.9 1188.4 307.6 1189.6 305.4C1190.8 303.2 1193.0 303.4 1194.4 304.4C1195.8 305.3 1196.3 310.6 1198.2 311.1C1200.1 311.6 1203.2 308.4 1205.8 307.3C1208.3 306.2 1211.0 305.2 1213.5 304.4C1216.0 303.6 1218.9 303.0 1221.1 302.5C1223.3 302.0 1225.2 301.4 1226.8 301.6C1228.4 301.8 1229.3 304.0 1230.6 303.5C1231.9 303.0 1233.2 300.1 1234.4 298.7C1235.6 297.3 1236.6 295.3 1237.9 295.3C1239.2 295.3 1240.4 298.4 1242.1 298.7C1243.8 299.0 1245.9 298.0 1247.8 297.2C1249.7 296.4 1251.9 294.5 1253.5 294.0C1255.1 293.5 1256.0 294.7 1257.3 294.0C1258.6 293.3 1259.7 290.0 1261.1 289.6C1262.5 289.2 1264.5 291.9 1265.9 291.5C1267.3 291.1 1268.3 287.8 1269.7 286.9C1271.1 286.0 1272.7 286.3 1274.5 286.3C1276.3 286.3 1279.1 288.0 1280.5 286.9C1281.9 285.8 1282.2 281.6 1283.0 279.7C1283.8 277.8 1284.5 274.9 1285.3 275.5C1286.0 276.1 1286.4 281.7 1287.5 283.5C1288.6 285.3 1290.4 285.1 1291.9 286.3C1293.4 287.5 1295.2 289.7 1296.7 290.7C1298.2 291.7 1299.6 292.4 1300.9 292.1C1302.2 291.8 1303.1 288.9 1304.3 288.8C1305.5 288.7 1305.5 291.4 1308.1 291.5C1310.6 291.6 1316.7 290.5 1319.6 289.6C1322.5 288.7 1322.4 286.9 1325.3 286.3C1328.2 285.7 1334.2 285.4 1336.7 285.8C1339.2 286.2 1338.6 288.4 1340.5 288.8C1342.4 289.2 1346.6 289.7 1348.2 288.2C1349.8 286.7 1349.5 281.6 1350.1 279.7C1350.7 277.8 1351.4 276.2 1352.0 276.8C1352.6 277.4 1353.2 281.8 1353.9 283.5C1354.6 285.2 1354.6 286.5 1356.2 287.3C1357.8 288.1 1361.2 288.4 1363.4 288.2C1365.6 287.9 1366.9 285.9 1369.1 285.8C1371.3 285.6 1374.2 287.2 1376.8 287.3C1379.3 287.4 1381.9 286.9 1384.4 286.3C1386.9 285.7 1389.6 284.3 1392.0 283.9C1394.4 283.5 1397.3 283.3 1398.7 283.9C1400.1 284.5 1400.1 282.9 1400.6 287.3C1401.1 291.7 1401.4 303.8 1401.9 310.2C1402.4 316.6 1402.8 323.3 1403.5 325.4C1404.2 327.5 1405.1 323.9 1406.3 322.6C1407.5 321.3 1409.5 317.2 1410.7 317.4C1411.9 317.5 1412.4 322.3 1413.4 323.5C1414.4 324.7 1415.6 325.6 1416.8 324.5C1418.0 323.4 1419.5 318.5 1420.6 316.8C1421.7 315.1 1422.4 314.2 1423.5 314.4C1424.6 314.6 1426.2 318.7 1427.3 317.8C1428.3 316.9 1429.2 310.9 1429.8 309.2C1430.4 307.4 1430.6 306.5 1431.1 307.3C1431.6 308.1 1432.3 312.4 1433.0 314.0C1433.7 315.6 1434.1 316.5 1435.5 316.8C1436.9 317.1 1438.7 316.3 1441.6 315.9C1444.5 315.5 1449.7 314.8 1453.0 314.4C1456.3 314.0 1459.2 313.3 1461.4 313.6C1463.6 313.8 1464.3 315.9 1466.2 315.9C1468.1 315.9 1469.9 314.2 1472.9 313.6C1475.9 313.0 1480.8 312.7 1484.3 312.1C1487.8 311.5 1491.1 310.8 1493.9 310.2C1496.7 309.6 1499.2 308.3 1501.1 308.6C1503.0 308.9 1503.8 311.7 1505.3 312.1C1506.8 312.5 1508.7 311.6 1510.1 311.1C1511.5 310.6 1512.8 308.8 1513.9 309.2C1515.0 309.6 1514.6 313.1 1516.7 313.6C1518.8 314.1 1522.2 312.7 1526.3 312.1C1530.4 311.5 1536.4 310.8 1541.5 310.2C1546.6 309.6 1551.7 309.0 1556.8 308.6C1561.9 308.2 1568.2 308.2 1572.0 307.9C1575.8 307.6 1577.4 306.8 1579.6 306.7C1581.8 306.6 1583.5 306.7 1585.4 307.3C1587.3 307.9 1588.9 310.0 1591.1 310.5C1593.3 311.0 1597.0 311.1 1598.7 310.2C1600.5 309.3 1600.8 306.7 1601.6 305.4C1602.4 304.1 1602.9 302.3 1603.5 302.5C1604.1 302.7 1604.7 305.1 1605.4 306.4C1606.1 307.7 1605.8 309.8 1607.9 310.2C1610.0 310.6 1614.4 309.1 1617.8 308.8C1621.2 308.5 1626.5 308.4 1628.3 308.3" fill="none" stroke="#ade2fb" stroke-width="2.0" stroke-linejoin="round" stroke-linecap="butt"/><path d="M1087.8 263.7C1088.5 264.0 1090.2 265.6 1092.2 265.8C1094.3 266.0 1097.7 265.5 1099.8 264.7C1102.0 263.8 1103.8 261.9 1105.1 260.5C1106.4 259.1 1106.2 255.6 1107.6 256.1C1109.0 256.6 1111.6 264.6 1113.4 263.6C1115.1 262.6 1116.6 255.1 1118.0 250.1C1119.4 245.0 1121.4 235.2 1121.7 233.2C1119.7 231.2 1119.7 231.0 1119.7 238.2C1119.7 245.4 1120.5 267.5 1121.0 276.4C1121.5 285.4 1122.1 287.7 1122.9 291.9C1123.8 296.1 1125.0 297.3 1126.2 301.5C1127.3 305.7 1128.3 312.8 1129.7 316.9C1131.1 320.9 1132.8 325.1 1134.6 325.7C1136.4 326.3 1139.2 322.0 1140.6 320.4C1141.9 318.8 1141.5 315.6 1142.7 316.2C1143.8 316.8 1145.8 324.3 1147.5 323.9C1149.3 323.4 1151.5 316.0 1153.1 313.5C1154.8 311.0 1156.5 309.7 1157.4 308.6C1158.3 307.6 1158.0 305.6 1158.4 307.2C1158.8 308.8 1159.2 314.1 1159.7 318.4C1160.2 322.7 1159.9 331.5 1161.2 333.3C1162.4 335.0 1166.0 329.9 1167.4 328.8C1168.7 327.6 1168.3 327.1 1169.2 326.4C1170.1 325.8 1171.8 326.7 1172.8 324.8C1173.8 322.9 1175.0 316.9 1175.2 315.1C1173.8 313.2 1173.8 312.6 1173.8 313.7C1174.4 314.9 1177.1 322.3 1178.7 321.9C1180.3 321.6 1182.8 313.2 1183.6 311.7C1183.4 310.1 1183.4 312.0 1183.4 312.6C1184.3 313.1 1187.5 316.5 1188.8 314.9C1190.1 313.3 1190.5 305.0 1191.3 302.9C1192.0 300.9 1192.3 301.5 1193.4 302.6C1194.4 303.7 1195.5 309.0 1197.7 309.5C1199.9 310.1 1203.8 306.8 1206.6 305.6C1209.3 304.5 1211.6 303.6 1214.1 302.8C1216.6 302.0 1219.4 301.4 1221.5 301.0C1223.6 300.5 1225.0 299.9 1226.6 300.1C1228.2 300.2 1229.7 302.5 1231.3 301.9C1232.8 301.3 1234.7 297.9 1235.8 296.6C1236.9 295.2 1236.9 293.7 1237.9 293.8C1238.9 293.9 1240.0 296.9 1241.7 297.2C1243.5 297.5 1246.5 296.4 1248.5 295.6C1250.6 294.8 1252.5 293.0 1254.1 292.4C1255.7 291.8 1257.0 293.0 1258.3 292.2C1259.5 291.5 1260.3 288.4 1261.6 288.0C1263.0 287.6 1265.0 290.4 1266.5 289.9C1268.0 289.4 1269.3 286.0 1270.7 285.1C1272.0 284.3 1272.7 284.8 1274.5 284.8C1276.3 284.8 1280.0 286.3 1281.7 285.0C1283.4 283.7 1284.3 278.9 1284.8 277.0C1284.1 275.1 1284.1 272.9 1284.1 273.6C1284.3 274.2 1284.8 279.3 1285.9 281.1C1287.0 282.9 1289.1 283.1 1290.7 284.4C1292.4 285.7 1293.9 287.9 1295.7 288.9C1297.4 289.9 1299.9 290.8 1301.4 290.5C1302.8 290.3 1303.4 287.4 1304.5 287.3C1305.6 287.2 1305.4 289.9 1308.0 290.0C1310.6 290.1 1317.2 288.9 1320.1 288.0C1323.1 287.1 1323.0 285.4 1325.7 284.8C1328.4 284.1 1334.0 283.9 1336.4 284.3C1338.8 284.7 1337.9 286.9 1340.1 287.3C1342.3 287.6 1347.5 287.9 1349.5 286.2C1351.5 284.5 1351.7 278.8 1351.9 276.9C1350.7 275.0 1350.7 274.1 1350.7 274.7C1350.7 275.4 1351.4 279.0 1352.1 280.8C1352.9 282.6 1353.4 284.6 1355.4 285.6C1357.3 286.6 1361.3 286.9 1363.6 286.7C1365.9 286.5 1367.0 284.4 1369.2 284.3C1371.4 284.1 1374.1 285.7 1376.7 285.8C1379.3 285.9 1382.2 285.3 1384.8 284.8C1387.4 284.2 1390.1 282.8 1392.3 282.4C1394.5 282.0 1396.9 282.0 1398.0 282.3C1398.7 282.6 1398.4 280.0 1398.7 284.1C1399.0 288.2 1399.5 300.5 1400.0 306.9C1400.5 313.4 1400.4 320.4 1401.7 322.6C1403.0 324.9 1406.3 321.6 1407.7 320.5C1409.2 319.3 1409.8 315.7 1410.5 315.9C1411.2 316.0 1410.7 320.2 1412.0 321.3C1413.2 322.4 1416.4 323.6 1418.1 322.5C1419.8 321.3 1421.3 316.1 1422.2 314.5C1423.0 312.8 1422.2 312.6 1423.2 312.9C1424.3 313.1 1427.1 316.9 1428.5 315.9C1429.9 314.8 1431.4 308.3 1431.6 306.4C1429.5 304.6 1429.5 304.1 1429.5 305.0C1429.5 305.8 1430.3 309.7 1431.3 311.4C1432.2 313.1 1433.3 314.8 1435.1 315.3C1436.9 315.8 1438.8 314.8 1441.9 314.4C1444.9 314.0 1450.0 313.3 1453.2 312.9C1456.4 312.5 1459.0 311.8 1461.2 312.1C1463.3 312.3 1464.2 314.4 1466.2 314.4C1468.2 314.4 1470.2 312.7 1473.3 312.1C1476.4 311.4 1481.1 311.1 1484.6 310.6C1488.1 310.0 1491.6 309.2 1494.3 308.7C1497.0 308.1 1499.0 306.8 1500.8 307.1C1502.5 307.4 1503.1 310.1 1504.8 310.5C1506.4 310.9 1509.3 310.0 1510.7 309.5C1512.1 309.0 1512.3 307.2 1513.2 307.6C1514.2 308.0 1514.0 311.5 1516.3 312.1C1518.5 312.6 1522.3 311.1 1526.6 310.6C1530.8 310.0 1536.7 309.3 1541.7 308.7C1546.8 308.1 1551.9 307.5 1556.9 307.1C1562.0 306.7 1568.4 306.7 1572.2 306.4C1575.9 306.1 1577.6 305.3 1579.7 305.2C1581.8 305.1 1583.0 305.1 1584.8 305.7C1586.6 306.3 1588.2 308.5 1590.7 309.0C1593.1 309.4 1597.4 309.5 1599.5 308.5C1601.6 307.5 1602.6 304.3 1603.2 303.0C1603.0 301.7 1603.0 300.8 1603.0 300.9C1603.1 301.1 1603.0 302.7 1603.8 303.9C1604.5 305.2 1605.2 308.1 1607.5 308.7C1609.9 309.2 1614.5 307.6 1618.0 307.3C1621.5 307.0 1626.7 306.9 1628.4 306.8" fill="none" stroke="#8690d6" stroke-width="2.1" stroke-linejoin="round" stroke-linecap="butt"/><path d="M1088.6 261.7C1089.2 262.0 1090.7 263.4 1092.4 263.6C1094.2 263.7 1097.2 263.4 1099.1 262.6C1101.0 261.8 1102.3 260.2 1103.8 258.8C1105.3 257.4 1106.8 253.5 1108.2 254.0C1109.6 254.5 1111.1 262.5 1112.4 261.7C1113.7 260.9 1114.9 254.2 1116.2 249.3C1117.5 244.4 1119.1 234.0 1120.0 232.1C1120.9 230.2 1121.1 230.5 1121.6 237.8C1122.1 245.1 1122.4 267.1 1122.9 276.0C1123.4 284.9 1124.0 287.1 1124.8 291.2C1125.6 295.3 1126.9 296.6 1128.0 300.7C1129.1 304.8 1130.3 312.2 1131.5 316.0C1132.7 319.8 1134.0 323.1 1135.3 323.6C1136.6 324.1 1137.8 320.5 1139.1 318.9C1140.4 317.3 1142.0 313.6 1143.3 314.1C1144.6 314.6 1145.7 322.0 1147.1 321.7C1148.5 321.4 1150.0 314.7 1151.5 312.2C1153.0 309.7 1154.9 307.8 1156.3 306.8C1157.7 305.8 1159.2 304.2 1160.1 306.1C1161.0 307.9 1161.1 313.5 1161.6 317.9C1162.1 322.2 1162.2 330.6 1162.9 332.2C1163.6 333.8 1164.9 328.7 1165.8 327.4C1166.7 326.1 1167.2 325.2 1168.1 324.6C1169.0 324.0 1170.2 325.3 1171.1 323.6C1172.0 321.8 1172.7 316.0 1173.4 314.1C1174.1 312.2 1174.5 311.2 1175.3 312.2C1176.1 313.1 1177.1 320.1 1178.2 319.8C1179.3 319.5 1181.0 311.8 1182.0 310.3C1183.0 308.8 1183.7 310.1 1184.5 310.7C1185.3 311.3 1186.2 315.2 1187.1 313.7C1187.9 312.2 1188.4 303.9 1189.6 301.7C1190.8 299.5 1193.0 299.8 1194.4 300.7C1195.8 301.6 1196.3 306.9 1198.2 307.4C1200.1 307.9 1203.2 304.7 1205.8 303.6C1208.3 302.5 1211.0 301.5 1213.5 300.7C1216.0 299.9 1218.9 299.3 1221.1 298.8C1223.3 298.3 1225.2 297.7 1226.8 297.9C1228.4 298.1 1229.3 300.3 1230.6 299.8C1231.9 299.3 1233.2 296.4 1234.4 295.0C1235.6 293.6 1236.6 291.6 1237.9 291.6C1239.2 291.6 1240.4 294.7 1242.1 295.0C1243.8 295.3 1245.9 294.3 1247.8 293.5C1249.7 292.7 1251.9 290.8 1253.5 290.3C1255.1 289.8 1256.0 291.0 1257.3 290.3C1258.6 289.6 1259.7 286.3 1261.1 285.9C1262.5 285.5 1264.5 288.2 1265.9 287.8C1267.3 287.4 1268.3 284.1 1269.7 283.2C1271.1 282.3 1272.7 282.6 1274.5 282.6C1276.3 282.6 1279.1 284.3 1280.5 283.2C1281.9 282.1 1282.2 277.9 1283.0 276.0C1283.8 274.1 1284.5 271.2 1285.3 271.8C1286.0 272.4 1286.4 278.0 1287.5 279.8C1288.6 281.6 1290.4 281.4 1291.9 282.6C1293.4 283.8 1295.2 286.0 1296.7 287.0C1298.2 288.0 1299.6 288.7 1300.9 288.4C1302.2 288.1 1303.1 285.2 1304.3 285.1C1305.5 285.0 1305.5 287.7 1308.1 287.8C1310.6 287.9 1316.7 286.8 1319.6 285.9C1322.5 285.0 1322.4 283.2 1325.3 282.6C1328.2 282.0 1334.2 281.7 1336.7 282.1C1339.2 282.5 1338.6 284.7 1340.5 285.1C1342.4 285.5 1346.6 286.0 1348.2 284.5C1349.8 283.0 1349.5 277.9 1350.1 276.0C1350.7 274.1 1351.4 272.5 1352.0 273.1C1352.6 273.7 1353.2 278.1 1353.9 279.8C1354.6 281.6 1354.6 282.8 1356.2 283.6C1357.8 284.4 1361.2 284.8 1363.4 284.5C1365.6 284.2 1366.9 282.2 1369.1 282.1C1371.3 281.9 1374.2 283.5 1376.8 283.6C1379.3 283.7 1381.9 283.2 1384.4 282.6C1386.9 282.0 1389.6 280.6 1392.0 280.2C1394.4 279.8 1397.3 279.6 1398.7 280.2C1400.1 280.8 1400.1 279.2 1400.6 283.6C1401.1 288.0 1401.4 300.1 1401.9 306.5C1402.4 312.9 1402.8 319.6 1403.5 321.7C1404.2 323.8 1405.1 320.2 1406.3 318.9C1407.5 317.6 1409.5 313.5 1410.7 313.7C1411.9 313.9 1412.4 318.6 1413.4 319.8C1414.4 321.0 1415.6 321.9 1416.8 320.8C1418.0 319.7 1419.5 314.8 1420.6 313.1C1421.7 311.4 1422.4 310.5 1423.5 310.7C1424.6 310.9 1426.2 315.0 1427.3 314.1C1428.3 313.2 1429.2 307.2 1429.8 305.5C1430.4 303.8 1430.6 302.8 1431.1 303.6C1431.6 304.4 1432.3 308.7 1433.0 310.3C1433.7 311.9 1434.1 312.8 1435.5 313.1C1436.9 313.4 1438.7 312.6 1441.6 312.2C1444.5 311.8 1449.7 311.1 1453.0 310.7C1456.3 310.3 1459.2 309.6 1461.4 309.9C1463.6 310.1 1464.3 312.2 1466.2 312.2C1468.1 312.2 1469.9 310.5 1472.9 309.9C1475.9 309.3 1480.8 309.0 1484.3 308.4C1487.8 307.8 1491.1 307.1 1493.9 306.5C1496.7 305.9 1499.2 304.6 1501.1 304.9C1503.0 305.2 1503.8 308.0 1505.3 308.4C1506.8 308.8 1508.7 307.9 1510.1 307.4C1511.5 306.9 1512.8 305.1 1513.9 305.5C1515.0 305.9 1514.6 309.4 1516.7 309.9C1518.8 310.4 1522.2 309.0 1526.3 308.4C1530.4 307.8 1536.4 307.1 1541.5 306.5C1546.6 305.9 1551.7 305.3 1556.8 304.9C1561.9 304.5 1568.2 304.5 1572.0 304.2C1575.8 303.9 1577.4 303.1 1579.6 303.0C1581.8 302.9 1583.5 303.0 1585.4 303.6C1587.3 304.2 1588.9 306.3 1591.1 306.8C1593.3 307.3 1597.0 307.4 1598.7 306.5C1600.5 305.6 1600.8 303.0 1601.6 301.7C1602.4 300.4 1602.9 298.6 1603.5 298.8C1604.1 299.0 1604.7 301.4 1605.4 302.7C1606.1 304.0 1605.8 306.1 1607.9 306.5C1610.0 306.9 1614.4 305.4 1617.8 305.1C1621.2 304.8 1626.5 304.7 1628.3 304.6" fill="none" stroke="#ffdfae" stroke-width="2.2" stroke-linejoin="round" stroke-linecap="butt"/><path d="M1643.0 205.7H1672.6" stroke="#ade2fb" stroke-width="2.2"/><circle cx="1657.8" cy="205.7" r="5.9" fill="#fff" stroke="#ade2fb" stroke-width="2.3"/><text x="1679.3" y="210.2" font-size="15.8" fill="#333" textLength="26.7" lengthAdjust="spacingAndGlyphs">ziox</text><path d="M1643.0 233.2H1672.6" stroke="#6776c7" stroke-width="2.2"/><circle cx="1657.8" cy="233.2" r="5.9" fill="#fff" stroke="#6776c7" stroke-width="2.3"/><text x="1679.3" y="237.7" font-size="15.8" fill="#333" textLength="155.6" lengthAdjust="spacingAndGlyphs">openobserve-collector</text><path d="M1643.0 261.1H1672.6" stroke="#fff497" stroke-width="2.2"/><circle cx="1657.8" cy="261.1" r="5.9" fill="#fff" stroke="#fff497" stroke-width="2.3"/><text x="1679.3" y="265.6" font-size="15.8" fill="#333" textLength="87.2" lengthAdjust="spacingAndGlyphs">kube-system</text><path d="M1643.0 288.9H1672.6" stroke="#e0676a" stroke-width="2.2"/><circle cx="1657.8" cy="288.9" r="5.9" fill="#fff" stroke="#e0676a" stroke-width="2.3"/><text x="1679.3" y="293.4" font-size="15.8" fill="#333" textLength="92.8" lengthAdjust="spacingAndGlyphs">ingress-nginx</text><path d="M1643.0 316.9H1672.6" stroke="#f8c471" stroke-width="2.2"/><circle cx="1657.8" cy="316.9" r="5.9" fill="#fff" stroke="#f8c471" stroke-width="2.3"/><text x="1679.3" y="321.4" font-size="15.8" fill="#333" textLength="58.7" lengthAdjust="spacingAndGlyphs">postgres</text><path d="M1643.0 345.0H1672.6" stroke="#f4aeae" stroke-width="2.2"/><circle cx="1657.8" cy="345.0" r="5.9" fill="#fff" stroke="#f4aeae" stroke-width="2.3"/><text x="1679.3" y="349.5" font-size="15.8" fill="#333" textLength="92.4" lengthAdjust="spacingAndGlyphs">cert-manager</text><path d="M1720.2 381.9L1738.5 381.9L1729.4 365.3Z" fill="#aaa"/><text x="1762.7" y="379.0" text-anchor="middle" font-size="15.6" fill="#333">1/2</text><path d="M1786.0 365.1L1804.5 365.1L1795.2 381.8Z" fill="#33373c"/><path d="M182.9 449.2H784.5" stroke="#ebeef7" stroke-width="1"/><path d="M182.9 475.7H784.5" stroke="#ebeef7" stroke-width="1"/><path d="M182.9 502.2H784.5" stroke="#ebeef7" stroke-width="1"/><path d="M182.9 528.7H784.5" stroke="#ebeef7" stroke-width="1"/><path d="M182.9 555.2H784.5" stroke="#ebeef7" stroke-width="1"/><path d="M182.9 581.7H784.5" stroke="#ebeef7" stroke-width="1"/><path d="M182.9 608.2H784.5" stroke="#ebeef7" stroke-width="1"/><path d="M182.9 449.2V608.2" stroke="#ebeef7" stroke-width="1"/><path d="M234.6 449.2V608.2" stroke="#ebeef7" stroke-width="1"/><path d="M314.9 449.2V608.2" stroke="#ebeef7" stroke-width="1"/><path d="M395.2 449.2V608.2" stroke="#ebeef7" stroke-width="1"/><path d="M475.5 449.2V608.2" stroke="#ebeef7" stroke-width="1"/><path d="M555.8 449.2V608.2" stroke="#ebeef7" stroke-width="1"/><path d="M636.1 449.2V608.2" stroke="#ebeef7" stroke-width="1"/><path d="M716.4 449.2V608.2" stroke="#ebeef7" stroke-width="1"/><path d="M784.5 449.2V608.2" stroke="#ebeef7" stroke-width="1"/><path d="M234.6 608.2V614.6" stroke="#6E7079" stroke-width="1.2"/><path d="M314.9 608.2V614.6" stroke="#6E7079" stroke-width="1.2"/><path d="M395.2 608.2V614.6" stroke="#6E7079" stroke-width="1.2"/><path d="M475.5 608.2V614.6" stroke="#6E7079" stroke-width="1.2"/><path d="M555.8 608.2V614.6" stroke="#6E7079" stroke-width="1.2"/><path d="M636.1 608.2V614.6" stroke="#6E7079" stroke-width="1.2"/><path d="M716.4 608.2V614.6" stroke="#6E7079" stroke-width="1.2"/><text transform="translate(173.1 453.0) scale(0.921 1)" text-anchor="end" font-size="16.2" fill="#75777f">1200.00%</text><text transform="translate(173.1 479.5) scale(0.921 1)" text-anchor="end" font-size="16.2" fill="#75777f">1000.00%</text><text transform="translate(173.1 506.0) scale(0.921 1)" text-anchor="end" font-size="16.2" fill="#75777f">800.00%</text><text transform="translate(173.1 532.5) scale(0.921 1)" text-anchor="end" font-size="16.2" fill="#75777f">600.00%</text><text transform="translate(173.1 559.0) scale(0.921 1)" text-anchor="end" font-size="16.2" fill="#75777f">400.00%</text><text transform="translate(173.1 585.5) scale(0.921 1)" text-anchor="end" font-size="16.2" fill="#75777f">200.00%</text><text transform="translate(173.1 612.0) scale(0.921 1)" text-anchor="end" font-size="16.2" fill="#75777f">0.00%</text><text transform="translate(234.6 629.3) scale(0.890 1)" text-anchor="middle" font-size="16.2" fill="#75777f">11</text><text transform="translate(314.9 629.3) scale(0.890 1)" text-anchor="middle" font-size="16.2" fill="#75777f">12</text><text transform="translate(395.2 629.3) scale(0.890 1)" text-anchor="middle" font-size="16.2" fill="#75777f">13</text><text transform="translate(475.5 629.3) scale(0.890 1)" text-anchor="middle" font-size="16.2" fill="#75777f">14</text><text transform="translate(555.8 629.3) scale(0.890 1)" text-anchor="middle" font-size="16.2" fill="#75777f">15</text><text transform="translate(636.1 629.3) scale(0.890 1)" text-anchor="middle" font-size="16.2" fill="#75777f">16</text><text transform="translate(716.4 629.3) scale(0.890 1)" text-anchor="middle" font-size="16.2" fill="#75777f">17</text><path d="M182.9 511.3C183.7 509.9 186.5 505.4 187.8 502.8C189.2 500.2 190.2 496.5 191.0 495.8C191.8 495.1 192.1 495.3 192.7 498.6C193.3 501.9 194.0 512.4 194.6 515.6C195.2 518.8 195.6 519.7 196.3 517.7C197.0 515.8 197.9 507.8 198.9 503.9C199.9 500.0 201.2 496.1 202.3 494.3C203.4 492.5 204.4 491.6 205.2 493.2C206.0 494.8 206.3 501.2 206.9 503.9C207.5 506.6 208.0 509.0 208.7 509.2C209.4 509.4 210.3 507.1 211.2 505.0C212.0 502.9 213.0 499.9 213.8 496.4C214.6 492.8 215.3 486.0 216.1 483.7C216.9 481.4 217.8 482.5 218.7 482.6C219.6 482.7 220.6 482.2 221.4 484.3C222.2 486.4 222.9 488.6 223.6 495.4C224.3 502.2 225.0 514.9 225.7 525.2C226.4 535.5 227.2 550.4 227.8 557.1C228.4 563.9 228.7 564.1 229.5 565.7C230.3 567.3 231.7 566.5 232.9 566.7C234.1 566.9 235.1 566.5 236.8 566.9C238.5 567.3 241.2 569.0 243.2 569.3C245.1 569.5 246.9 568.4 248.5 568.4C250.1 568.4 251.8 569.5 252.7 569.1C253.6 568.7 253.7 573.0 254.2 565.7C254.7 558.4 255.0 537.6 255.5 525.2C256.0 512.8 256.4 497.9 257.0 491.1C257.6 484.4 258.2 486.8 259.1 484.7C260.1 482.6 261.5 480.3 262.7 478.8C263.9 477.3 265.3 475.9 266.2 475.8C267.1 475.7 267.3 477.0 267.9 478.3C268.5 479.6 268.8 482.3 269.8 483.7C270.8 485.1 272.9 486.5 274.0 486.9C275.1 487.2 275.5 487.1 276.2 485.8C276.9 484.6 277.1 480.5 278.3 479.4C279.5 478.3 282.2 480.3 283.6 479.4C285.0 478.5 285.6 474.9 286.8 474.1C288.1 473.3 290.0 473.8 291.1 474.5C292.2 475.2 292.4 476.3 293.2 478.3C294.0 480.3 295.1 485.1 296.0 486.4C296.9 487.6 297.0 487.3 298.5 485.8C300.0 484.3 302.9 478.7 304.9 477.3C306.8 475.9 308.8 476.2 310.2 477.3C311.6 478.4 312.0 483.0 313.4 483.7C314.8 484.4 317.2 481.9 318.8 481.5C320.4 481.1 321.6 481.6 323.0 481.1C324.4 480.6 325.7 477.9 327.3 478.3C328.9 478.7 331.1 482.4 332.6 483.7C334.1 484.9 335.0 486.7 336.4 485.8C337.8 484.9 339.6 480.0 341.1 478.3C342.6 476.6 343.9 476.3 345.4 475.8C346.9 475.3 348.9 474.3 350.1 475.4C351.3 476.5 351.5 481.0 352.8 482.2C354.1 483.4 356.6 482.8 358.2 482.6C359.8 482.4 360.8 480.5 362.4 480.9C364.0 481.3 366.2 484.0 367.7 485.1C369.2 486.2 370.1 487.8 371.4 487.3C372.6 486.8 373.9 482.4 375.2 482.2C376.5 481.9 377.4 485.6 379.0 485.8C380.6 486.1 383.1 484.2 384.8 483.7C386.5 483.2 387.9 482.4 389.3 482.6C390.8 482.8 392.1 484.4 393.5 484.7C394.9 485.0 396.4 484.9 397.8 484.7C399.2 484.4 400.6 482.8 402.0 483.2C403.4 483.6 404.9 487.8 406.3 487.3C407.7 486.9 409.2 481.4 410.6 480.5C412.0 479.6 413.4 483.0 414.8 482.2C416.2 481.4 417.7 475.9 419.1 475.8C420.5 475.7 421.9 480.0 423.3 481.5C424.7 483.0 426.1 485.8 427.6 484.7C429.1 483.6 430.9 475.7 432.3 474.7C433.7 473.7 434.6 478.1 436.1 478.8C437.6 479.5 439.8 479.7 441.4 478.8C443.0 477.9 444.4 474.1 445.7 473.6C446.9 473.1 447.9 474.3 448.9 475.8C449.8 477.3 450.5 479.5 451.4 482.6C452.3 485.7 453.2 494.1 454.2 494.3C455.2 494.5 456.5 485.8 457.4 483.7C458.3 481.6 458.5 481.3 459.5 481.5C460.5 481.7 462.0 484.9 463.4 484.7C464.8 484.4 466.4 480.8 468.1 480.0C469.8 479.2 472.0 480.6 473.4 480.0C474.8 479.4 475.4 476.2 476.6 476.6C477.8 477.0 479.0 482.1 480.4 482.6C481.8 483.1 483.4 479.8 485.1 479.4C486.8 479.0 488.8 479.2 490.4 480.0C492.0 480.8 493.1 484.9 494.7 484.3C496.3 483.7 498.6 478.0 500.0 476.6C501.4 475.2 502.1 474.8 503.2 475.8C504.3 476.8 505.3 481.5 506.4 482.6C507.5 483.7 508.0 483.9 509.6 482.6C511.2 481.3 514.2 474.9 516.0 474.7C517.8 474.5 518.8 480.5 520.2 481.5C521.6 482.5 523.1 482.1 524.5 480.5C525.9 478.9 527.4 472.3 528.8 471.9C530.2 471.5 531.5 476.2 533.0 477.9C534.5 479.6 536.3 482.1 537.9 482.0C539.5 481.9 541.5 477.2 542.6 477.3C543.7 477.4 543.9 478.2 544.3 482.6C544.7 487.0 544.8 497.9 545.2 503.9C545.6 509.9 546.2 515.5 546.9 518.8C547.6 522.1 548.5 522.8 549.4 523.5C550.3 524.2 551.3 524.1 552.2 523.1C553.1 522.1 553.7 518.0 554.9 517.7C556.1 517.4 557.9 521.2 559.6 521.4C561.3 521.6 563.2 519.2 565.0 518.8C566.8 518.4 568.9 519.2 570.3 518.8C571.7 518.4 572.3 515.1 573.5 516.2C574.7 517.3 576.1 524.1 577.3 525.2C578.5 526.4 579.4 524.6 580.9 523.1C582.4 521.6 584.7 516.4 586.3 516.2C587.9 516.0 589.1 519.5 590.5 522.0C591.9 524.5 593.5 531.4 594.8 531.2C596.0 531.0 596.5 522.8 598.0 520.9C599.5 519.0 601.9 519.4 603.5 519.9C605.1 520.4 606.2 523.5 607.8 524.1C609.4 524.7 611.6 524.7 613.1 523.5C614.6 522.3 615.8 516.4 616.9 516.7C618.0 517.0 618.7 522.7 619.5 525.2C620.3 527.8 620.7 533.0 621.6 532.0C622.5 531.0 623.4 520.9 624.8 519.2C626.2 517.5 628.5 521.9 630.1 522.0C631.7 522.1 633.0 519.6 634.4 519.9C635.8 520.1 636.8 523.5 638.7 523.5C640.7 523.5 643.6 520.7 646.1 519.9C648.6 519.1 651.8 519.5 653.6 518.8C655.4 518.1 655.6 514.6 656.8 515.6C658.0 516.6 659.2 523.8 660.6 524.8C662.0 525.8 663.6 522.1 665.3 521.4C667.0 520.7 669.1 521.5 670.6 520.5C672.1 519.5 673.0 515.0 674.2 515.6C675.5 516.2 676.8 522.3 678.1 524.1C679.5 525.9 680.9 526.8 682.3 526.3C683.7 525.8 685.0 521.7 686.6 520.9C688.2 520.1 690.1 522.5 691.9 521.4C693.7 520.3 695.6 515.7 697.2 514.5C698.8 513.3 700.1 513.3 701.5 514.1C702.9 514.9 704.1 519.0 705.3 519.2C706.5 519.5 707.4 515.3 708.9 515.6C710.4 515.9 712.7 519.7 714.3 520.9C715.9 522.1 716.9 523.6 718.5 522.6C720.1 521.6 722.2 516.4 723.8 515.0C725.4 513.6 726.9 513.3 728.1 514.5C729.4 515.7 729.9 521.0 731.3 522.0C732.7 523.0 734.5 520.9 736.6 520.5C738.7 520.1 742.2 519.2 744.1 519.4C746.0 519.5 746.9 522.3 748.3 521.4C749.6 520.5 750.8 515.2 752.2 514.1C753.6 513.0 755.4 513.0 756.9 514.5C758.4 516.0 759.9 522.6 761.5 523.1C763.1 523.6 764.8 519.1 766.4 517.7C768.0 516.4 769.7 514.5 771.3 515.0C772.9 515.5 774.6 518.9 776.0 520.9C777.4 522.9 778.8 526.7 779.9 526.9C781.0 527.1 781.6 524.1 782.4 522.0C783.2 519.9 784.1 515.8 784.5 514.5" fill="none" stroke="#ade2fb" stroke-width="1.8" stroke-linejoin="round" stroke-linecap="butt"/><path d="M182.9 609.0C189.4 609.0 214.7 609.3 222.0 609.0C227.0 608.7 225.5 607.4 227.0 607.4C228.5 607.4 227.0 608.7 231.0 609.0C323.9 609.3 692.2 609.0 784.5 609.0" fill="none" stroke="#ffdfae" stroke-width="2.0" stroke-linejoin="round" stroke-linecap="butt"/><path d="M182.9 608.0C189.4 608.0 214.7 608.3 222.0 608.0C227.0 607.7 225.5 606.3 227.0 606.3C228.5 606.3 227.0 607.7 231.0 608.0C259.8 608.3 307.8 608.2 400.0 608.2C492.2 608.2 720.4 608.0 784.5 608.0" fill="none" stroke="#8c97d8" stroke-width="1.7" stroke-linejoin="round" stroke-linecap="butt"/><path d="M795.2 507.1H824.8" stroke="#ade2fb" stroke-width="2.2"/><circle cx="810.0" cy="507.1" r="5.9" fill="#fff" stroke="#ade2fb" stroke-width="2.3"/><text x="831.5" y="511.6" font-size="15.8" fill="#333" textLength="26.7" lengthAdjust="spacingAndGlyphs">ziox</text><path d="M795.2 534.8H824.8" stroke="#6776c7" stroke-width="2.2"/><circle cx="810.0" cy="534.8" r="5.9" fill="#fff" stroke="#6776c7" stroke-width="2.3"/><text x="831.5" y="539.3" font-size="15.8" fill="#333" textLength="145.7" lengthAdjust="spacingAndGlyphs">openobserve-collec...</text><path d="M795.2 562.5H824.8" stroke="#ffdfae" stroke-width="2.2"/><circle cx="810.0" cy="562.5" r="5.9" fill="#fff" stroke="#ffdfae" stroke-width="2.3"/><text x="831.5" y="567.0" font-size="15.8" fill="#333" textLength="38.6" lengthAdjust="spacingAndGlyphs">geoip</text><path d="M1088.6 449.2H1627.8" stroke="#ebeef7" stroke-width="1"/><path d="M1088.6 489.0H1627.8" stroke="#ebeef7" stroke-width="1"/><path d="M1088.6 528.8H1627.8" stroke="#ebeef7" stroke-width="1"/><path d="M1088.6 568.5H1627.8" stroke="#ebeef7" stroke-width="1"/><path d="M1088.6 608.3H1627.8" stroke="#ebeef7" stroke-width="1"/><path d="M1088.6 449.2V608.3" stroke="#ebeef7" stroke-width="1"/><path d="M1134.5 449.2V608.3" stroke="#ebeef7" stroke-width="1"/><path d="M1206.6 449.2V608.3" stroke="#ebeef7" stroke-width="1"/><path d="M1278.7 449.2V608.3" stroke="#ebeef7" stroke-width="1"/><path d="M1350.8 449.2V608.3" stroke="#ebeef7" stroke-width="1"/><path d="M1422.9 449.2V608.3" stroke="#ebeef7" stroke-width="1"/><path d="M1495.0 449.2V608.3" stroke="#ebeef7" stroke-width="1"/><path d="M1567.1 449.2V608.3" stroke="#ebeef7" stroke-width="1"/><path d="M1627.8 449.2V608.3" stroke="#ebeef7" stroke-width="1"/><path d="M1134.5 608.3V614.7" stroke="#6E7079" stroke-width="1.2"/><path d="M1206.6 608.3V614.7" stroke="#6E7079" stroke-width="1.2"/><path d="M1278.7 608.3V614.7" stroke="#6E7079" stroke-width="1.2"/><path d="M1350.8 608.3V614.7" stroke="#6E7079" stroke-width="1.2"/><path d="M1422.9 608.3V614.7" stroke="#6E7079" stroke-width="1.2"/><path d="M1495.0 608.3V614.7" stroke="#6E7079" stroke-width="1.2"/><path d="M1567.1 608.3V614.7" stroke="#6E7079" stroke-width="1.2"/><text transform="translate(1078.8 453.0) scale(0.921 1)" text-anchor="end" font-size="16.2" fill="#75777f">4000.00%</text><text transform="translate(1078.8 492.8) scale(0.921 1)" text-anchor="end" font-size="16.2" fill="#75777f">3000.00%</text><text transform="translate(1078.8 532.5) scale(0.921 1)" text-anchor="end" font-size="16.2" fill="#75777f">2000.00%</text><text transform="translate(1078.8 572.3) scale(0.921 1)" text-anchor="end" font-size="16.2" fill="#75777f">1000.00%</text><text transform="translate(1078.8 612.1) scale(0.921 1)" text-anchor="end" font-size="16.2" fill="#75777f">0.00%</text><text transform="translate(1134.5 629.4) scale(0.890 1)" text-anchor="middle" font-size="16.2" fill="#75777f">11</text><text transform="translate(1206.6 629.4) scale(0.890 1)" text-anchor="middle" font-size="16.2" fill="#75777f">12</text><text transform="translate(1278.7 629.4) scale(0.890 1)" text-anchor="middle" font-size="16.2" fill="#75777f">13</text><text transform="translate(1350.8 629.4) scale(0.890 1)" text-anchor="middle" font-size="16.2" fill="#75777f">14</text><text transform="translate(1422.9 629.4) scale(0.890 1)" text-anchor="middle" font-size="16.2" fill="#75777f">15</text><text transform="translate(1495.0 629.4) scale(0.890 1)" text-anchor="middle" font-size="16.2" fill="#75777f">16</text><text transform="translate(1567.1 629.4) scale(0.890 1)" text-anchor="middle" font-size="16.2" fill="#75777f">17</text><path d="M1088.6 608.4C1178.5 608.4 1537.9 608.4 1627.8 608.4" fill="none" stroke="#ffdfae" stroke-width="2.0" stroke-linejoin="round" stroke-linecap="butt"/><path d="M1088.6 607.5C1178.5 607.5 1537.9 607.5 1627.8 607.5" fill="none" stroke="#6dbf72" stroke-width="1.6" stroke-linejoin="round" stroke-linecap="butt"/><path d="M1088.5 599.3C1094.5 599.4 1117.8 599.4 1124.7 599.8C1130.1 600.2 1124.7 601.5 1130.1 601.9C1135.8 602.2 1153.3 601.4 1158.8 601.9C1163.1 602.4 1158.8 604.2 1163.1 604.7C1181.6 605.2 1238.8 604.7 1270.0 604.6C1301.2 604.5 1320.0 604.3 1350.0 604.2C1380.0 604.1 1403.7 603.9 1450.0 603.8C1496.3 603.7 1598.2 603.8 1627.8 603.8" fill="none" stroke="#6776c7" stroke-width="1.8" stroke-linejoin="round" stroke-linecap="butt"/><path d="M1088.5 582.3C1093.8 582.3 1114.5 582.4 1120.5 582.3C1124.3 582.2 1123.2 581.2 1124.3 581.6C1125.4 582.0 1126.2 583.6 1127.3 584.8C1128.4 585.9 1128.7 587.9 1130.7 588.5C1132.8 589.1 1134.8 588.6 1139.6 588.5C1144.3 588.4 1155.7 587.7 1159.2 588.0C1160.9 588.3 1160.2 589.0 1160.9 590.2C1161.6 591.4 1161.7 594.3 1163.1 595.1C1164.5 595.9 1163.1 595.2 1169.5 595.1C1187.3 595.0 1239.9 595.0 1270.0 594.8C1300.1 594.6 1320.0 594.3 1350.0 594.0C1380.0 593.7 1403.7 593.1 1450.0 592.9C1496.3 592.7 1598.2 592.9 1627.8 592.9" fill="none" stroke="#fff497" stroke-width="1.8" stroke-linejoin="round" stroke-linecap="butt"/><path d="M1088.5 503.5C1089.2 503.8 1091.0 505.0 1092.8 505.0C1094.6 505.0 1097.1 504.0 1099.2 503.5C1101.3 503.0 1103.5 502.0 1105.6 501.8C1107.7 501.6 1110.2 503.1 1112.0 502.4C1113.8 501.7 1114.9 499.2 1116.2 497.5C1117.5 495.8 1119.1 491.8 1120.0 492.2C1120.9 492.6 1121.1 492.3 1121.5 499.6C1121.9 506.9 1122.1 526.7 1122.6 535.9C1123.1 545.1 1123.5 550.6 1124.3 555.0C1125.1 559.4 1126.4 558.6 1127.3 562.5C1128.2 566.4 1128.8 574.4 1129.4 578.5C1130.0 582.6 1129.9 585.6 1131.1 587.0C1132.3 588.4 1135.0 587.4 1136.4 587.0C1137.8 586.6 1138.4 585.0 1139.6 584.4C1140.8 583.8 1142.2 583.0 1143.5 583.1C1144.8 583.2 1146.4 585.5 1147.7 585.3C1149.0 585.0 1150.1 583.8 1151.4 581.6C1152.7 579.4 1154.3 574.2 1155.6 572.1C1156.9 570.0 1158.2 568.2 1159.2 568.9C1160.2 569.6 1160.7 574.4 1161.4 576.3C1162.1 578.2 1162.5 580.5 1163.5 580.2C1164.5 579.9 1166.0 576.0 1167.3 574.6C1168.6 573.2 1170.3 573.4 1171.6 572.1C1172.8 570.8 1173.6 567.4 1174.8 566.7C1176.0 566.0 1177.8 568.5 1179.0 567.8C1180.2 567.1 1181.0 563.3 1182.2 562.5C1183.5 561.7 1185.1 564.1 1186.5 563.1C1187.9 562.1 1189.5 558.3 1190.8 556.7C1192.0 555.1 1192.8 553.8 1194.0 553.3C1195.2 552.8 1196.6 554.4 1198.2 554.0C1199.8 553.6 1201.2 552.0 1203.5 550.8C1205.8 549.6 1209.2 548.0 1212.1 546.9C1214.9 545.8 1217.8 544.9 1220.6 544.4C1223.4 543.9 1227.0 544.4 1229.1 544.0C1231.2 543.6 1231.3 542.5 1233.4 541.8C1235.5 541.1 1239.1 540.3 1241.9 539.7C1244.7 539.1 1247.6 539.0 1250.4 538.4C1253.2 537.8 1256.4 536.7 1258.9 535.9C1261.4 535.1 1262.9 534.7 1265.3 533.7C1267.7 532.7 1270.5 530.4 1273.2 529.9C1275.9 529.4 1279.2 531.2 1281.3 530.5C1283.4 529.8 1284.3 526.0 1285.6 525.8C1286.8 525.6 1287.4 528.7 1288.8 529.5C1290.2 530.3 1292.3 529.7 1294.1 530.5C1295.9 531.3 1297.6 533.9 1299.4 534.1C1301.2 534.4 1302.4 532.1 1304.7 532.0C1307.0 531.9 1310.5 533.2 1313.3 533.3C1316.1 533.4 1319.3 533.3 1321.8 532.7C1324.3 532.1 1325.7 530.4 1328.2 529.9C1330.7 529.4 1334.8 529.3 1336.7 529.9C1338.7 530.5 1338.0 533.1 1339.9 533.7C1341.9 534.3 1346.4 534.8 1348.4 533.7C1350.4 532.6 1350.8 527.6 1352.0 527.3C1353.2 526.9 1354.1 530.8 1355.4 531.6C1356.8 532.4 1358.6 531.6 1360.1 532.0C1361.6 532.4 1363.0 533.8 1364.4 533.7C1365.8 533.6 1366.1 531.5 1368.6 531.2C1371.1 530.9 1376.1 532.1 1379.3 532.0C1382.5 531.9 1385.0 531.0 1387.8 530.5C1390.6 530.0 1394.3 529.2 1396.3 529.0C1398.2 528.8 1398.8 526.6 1399.5 529.5C1400.2 532.4 1400.2 540.1 1400.6 546.5C1400.9 552.9 1401.2 563.2 1401.6 567.8C1402.0 572.3 1402.2 573.4 1403.1 573.8C1404.0 574.1 1405.7 571.1 1407.0 569.9C1408.3 568.7 1410.0 566.3 1411.2 566.7C1412.4 567.1 1413.3 571.4 1414.4 572.1C1415.5 572.8 1416.3 572.4 1417.6 571.0C1418.8 569.6 1420.3 564.9 1421.9 563.5C1423.5 562.1 1425.8 563.5 1427.2 562.5C1428.6 561.5 1429.3 557.8 1430.4 557.6C1431.5 557.4 1431.8 560.8 1433.6 561.4C1435.4 562.0 1438.2 561.2 1441.1 561.0C1443.9 560.8 1447.3 560.7 1450.7 560.4C1454.1 560.1 1458.8 559.1 1461.3 559.3C1463.8 559.5 1463.8 561.6 1465.6 561.8C1467.4 562.0 1469.2 560.8 1472.0 560.4C1474.8 560.0 1479.4 559.8 1482.6 559.3C1485.8 558.8 1487.5 557.9 1491.1 557.6C1494.6 557.3 1500.7 557.5 1503.9 557.6C1507.1 557.7 1508.7 558.4 1510.3 558.2C1511.9 558.1 1512.4 556.5 1513.5 556.7C1514.6 556.9 1515.1 559.0 1517.1 559.3C1519.0 559.5 1520.3 558.6 1525.2 558.2C1530.1 557.9 1539.4 557.5 1546.5 557.2C1553.6 556.9 1562.1 556.8 1567.8 556.5C1573.5 556.2 1577.0 555.6 1580.6 555.7C1584.1 555.8 1585.9 557.0 1589.1 557.2C1592.3 557.5 1597.4 557.7 1599.8 557.2C1602.2 556.7 1602.4 553.9 1603.6 554.0C1604.8 554.1 1605.0 557.3 1607.2 557.8C1609.4 558.3 1613.4 557.4 1616.8 557.2C1620.2 557.0 1626.0 556.8 1627.8 556.7" fill="none" stroke="#ade2fb" stroke-width="1.8" stroke-linejoin="round" stroke-linecap="butt"/><path d="M1088.5 544.4C1088.9 543.0 1089.8 537.6 1090.7 535.9C1091.6 534.2 1092.8 533.8 1093.8 534.1C1094.8 534.5 1095.9 535.4 1097.0 538.0C1098.1 540.6 1099.2 551.1 1100.2 549.7C1101.2 548.3 1102.1 533.9 1103.0 529.5C1103.9 525.1 1104.5 524.6 1105.6 523.5C1106.7 522.4 1108.2 522.5 1109.4 523.1C1110.6 523.7 1111.9 525.8 1113.0 527.3C1114.1 528.8 1115.3 535.9 1116.2 532.0C1117.1 528.1 1117.7 509.6 1118.3 503.9C1118.9 498.2 1119.2 499.0 1120.0 497.9C1120.8 496.8 1122.3 500.1 1123.2 497.5C1124.1 494.9 1124.8 489.0 1125.4 482.6C1126.0 476.2 1126.4 463.5 1126.9 459.2C1127.4 454.9 1128.1 454.9 1128.6 457.0C1129.1 459.1 1129.3 464.9 1130.1 472.0C1130.9 479.1 1132.3 491.8 1133.3 499.6C1134.2 507.4 1134.9 514.0 1135.8 518.8C1136.7 523.6 1137.4 526.9 1138.6 528.4C1139.8 529.9 1141.6 527.3 1142.8 527.8C1144.0 528.3 1144.7 530.7 1145.6 531.6C1146.5 532.5 1147.2 534.7 1148.2 533.3C1149.2 531.9 1150.5 526.9 1151.4 523.1C1152.3 519.3 1152.9 513.4 1153.5 510.3C1154.1 507.2 1154.6 504.0 1155.2 504.3C1155.8 504.6 1156.4 509.0 1157.1 512.4C1157.8 515.8 1158.8 526.2 1159.5 524.8C1160.2 523.4 1160.8 511.1 1161.4 503.9C1162.0 496.7 1162.6 485.1 1163.1 481.5C1163.6 477.9 1164.0 478.9 1164.4 482.6C1164.9 486.3 1165.2 497.5 1165.8 503.9C1166.4 510.3 1167.0 517.3 1167.8 520.9C1168.6 524.5 1169.5 525.0 1170.5 525.2C1171.5 525.4 1172.5 523.0 1173.7 522.0C1175.0 521.0 1176.9 520.8 1178.0 519.2C1179.1 517.6 1179.7 514.7 1180.5 512.4C1181.3 510.1 1182.2 505.8 1182.9 505.6C1183.6 505.4 1184.1 509.4 1184.8 511.4C1185.5 513.4 1186.1 519.0 1186.9 517.7C1187.7 516.5 1188.8 508.0 1189.7 503.9C1190.6 499.8 1191.6 495.1 1192.5 492.8C1193.4 490.5 1194.3 489.0 1195.0 490.1C1195.7 491.2 1196.2 494.1 1196.7 499.6C1197.2 505.1 1197.6 516.9 1198.2 523.1C1198.8 529.3 1199.6 534.2 1200.3 536.9C1201.0 539.5 1201.6 539.5 1202.5 539.0C1203.4 538.5 1204.5 534.6 1205.7 533.7C1206.9 532.8 1208.8 535.5 1209.9 533.7C1211.0 531.9 1211.8 525.9 1212.5 523.1C1213.2 520.3 1213.6 516.9 1214.2 517.1C1214.8 517.3 1215.4 521.0 1216.3 524.1C1217.2 527.2 1218.5 533.5 1219.5 535.9C1220.5 538.3 1221.5 540.2 1222.3 538.4C1223.1 536.6 1223.8 528.3 1224.4 525.2C1225.0 522.1 1225.5 519.2 1226.1 519.9C1226.7 520.6 1227.3 527.2 1228.0 529.5C1228.7 531.8 1229.1 533.9 1230.2 533.7C1231.3 533.5 1233.0 530.9 1234.4 528.4C1235.8 525.9 1237.5 521.4 1238.7 518.8C1239.9 516.2 1240.4 512.9 1241.5 512.8C1242.6 512.7 1243.8 518.4 1245.1 518.4C1246.4 518.4 1248.2 512.7 1249.3 512.8C1250.4 512.9 1250.8 516.7 1251.5 518.8C1252.2 520.9 1252.6 526.0 1253.6 525.2C1254.5 524.4 1256.3 515.4 1257.2 514.1C1258.1 512.9 1258.2 515.0 1258.9 517.7C1259.6 520.4 1260.6 530.5 1261.5 530.5C1262.4 530.5 1263.5 519.7 1264.3 517.7C1265.1 515.8 1265.3 517.0 1266.4 518.8C1267.5 520.6 1269.6 526.4 1270.7 528.4C1271.8 530.4 1272.3 531.9 1273.2 530.5C1274.1 529.1 1275.1 522.2 1276.0 519.9C1276.9 517.6 1277.6 517.4 1278.7 516.7C1279.8 516.0 1281.4 516.9 1282.4 515.6C1283.4 514.4 1283.8 510.4 1284.5 509.2C1285.2 508.0 1285.9 505.9 1286.6 508.6C1287.3 511.3 1288.0 520.5 1288.8 525.2C1289.6 529.9 1290.5 534.4 1291.5 536.9C1292.5 539.4 1293.9 539.9 1295.1 540.1C1296.3 540.4 1297.8 540.9 1298.8 538.4C1299.8 535.9 1300.3 529.5 1300.9 525.2C1301.5 520.9 1301.9 515.2 1302.6 512.4C1303.3 509.6 1304.1 509.1 1305.2 508.6C1306.3 508.1 1308.2 508.6 1309.4 509.2C1310.6 509.8 1311.4 509.0 1312.2 512.4C1313.0 515.8 1313.6 524.8 1314.3 529.5C1315.0 534.2 1315.6 539.8 1316.4 540.5C1317.2 541.2 1318.0 534.8 1319.2 533.7C1320.5 532.6 1322.7 535.1 1323.9 533.7C1325.1 532.3 1325.6 528.4 1326.5 525.2C1327.4 522.0 1328.2 516.9 1329.2 514.6C1330.2 512.3 1331.4 510.9 1332.4 511.4C1333.4 511.9 1334.1 515.4 1335.0 517.7C1335.9 520.0 1336.8 523.8 1337.7 525.2C1338.6 526.6 1339.6 528.2 1340.5 526.3C1341.4 524.3 1342.4 516.2 1343.1 513.5C1343.8 510.8 1344.3 508.4 1344.8 510.3C1345.3 512.2 1345.8 519.6 1346.3 525.2C1346.8 530.8 1347.4 542.8 1348.0 543.9C1348.6 545.0 1349.1 535.1 1349.9 531.6C1350.7 528.1 1351.8 523.6 1352.7 523.1C1353.6 522.6 1354.5 527.3 1355.4 528.4C1356.4 529.5 1357.3 530.6 1358.4 529.5C1359.5 528.4 1360.9 523.9 1361.8 522.0C1362.7 520.1 1363.2 517.9 1363.9 518.4C1364.6 518.9 1365.4 523.1 1366.1 525.2C1366.8 527.3 1367.3 532.2 1368.2 531.2C1369.1 530.2 1370.4 519.5 1371.2 519.2C1372.0 518.9 1372.5 527.0 1373.3 529.5C1374.1 532.0 1375.1 533.5 1376.1 534.1C1377.1 534.7 1378.1 532.5 1379.3 533.3C1380.5 534.1 1382.4 540.0 1383.5 539.0C1384.6 538.0 1385.0 530.6 1385.7 527.3C1386.4 524.0 1386.5 520.1 1387.4 519.2C1388.3 518.3 1389.5 521.4 1391.0 522.0C1392.5 522.6 1394.9 521.9 1396.3 523.1C1397.7 524.4 1398.4 529.0 1399.5 529.5C1400.6 530.0 1402.0 524.9 1403.1 526.3C1404.2 527.7 1404.7 535.8 1405.9 538.0C1407.1 540.2 1409.0 541.8 1410.2 539.7C1411.4 537.6 1412.0 528.9 1412.9 525.2C1413.8 521.5 1414.5 518.6 1415.5 517.7C1416.5 516.8 1417.5 518.4 1418.7 519.9C1419.9 521.4 1421.7 527.8 1422.9 526.9C1424.1 526.0 1425.1 517.6 1426.1 514.6C1427.1 511.7 1427.8 510.0 1428.7 509.2C1429.6 508.4 1430.7 506.5 1431.5 509.9C1432.3 513.3 1432.9 525.5 1433.6 529.5C1434.3 533.5 1434.8 533.1 1435.7 533.7C1436.6 534.3 1437.8 532.2 1438.9 533.3C1440.0 534.4 1441.0 540.7 1442.1 540.1C1443.2 539.5 1444.2 532.9 1445.3 529.5C1446.4 526.1 1447.5 521.7 1448.5 519.9C1449.5 518.1 1450.1 518.1 1451.1 518.8C1452.1 519.5 1453.3 522.7 1454.5 524.1C1455.7 525.5 1457.0 525.3 1458.1 527.3C1459.2 529.3 1460.2 535.0 1461.3 536.3C1462.4 537.5 1463.2 535.2 1464.5 534.8C1465.8 534.4 1467.6 533.6 1468.8 533.7C1470.0 533.8 1470.7 537.6 1471.5 535.4C1472.3 533.2 1473.1 522.9 1473.7 520.5C1474.3 518.1 1474.4 518.2 1475.1 520.9C1475.8 523.6 1477.1 537.6 1477.9 536.9C1478.7 536.2 1479.4 520.8 1480.0 516.7C1480.6 512.6 1480.7 512.4 1481.5 512.4C1482.3 512.4 1483.6 516.3 1484.7 516.7C1485.8 517.1 1486.9 515.1 1487.9 514.6C1488.9 514.1 1489.8 511.4 1490.7 513.5C1491.6 515.6 1492.5 524.6 1493.2 527.3C1493.9 530.0 1494.3 530.6 1495.0 529.5C1495.7 528.4 1496.4 521.2 1497.1 520.5C1497.8 519.8 1498.4 523.0 1499.2 525.2C1500.0 527.4 1500.7 532.3 1501.8 533.7C1502.9 535.1 1504.8 535.1 1506.0 533.7C1507.2 532.3 1508.1 528.6 1509.2 525.2C1510.3 521.8 1511.6 515.6 1512.4 513.5C1513.2 511.4 1513.4 510.4 1514.1 512.4C1514.8 514.4 1515.7 522.2 1516.3 525.2C1516.9 528.2 1516.9 530.5 1517.7 530.5C1518.5 530.5 1520.0 525.4 1520.9 525.2C1521.8 525.0 1522.4 527.9 1523.1 529.5C1523.8 531.1 1524.3 535.2 1525.2 534.8C1526.1 534.4 1527.3 530.7 1528.4 527.3C1529.5 523.9 1530.8 517.1 1531.6 514.6C1532.4 512.1 1532.7 510.2 1533.3 512.0C1533.9 513.8 1534.7 521.3 1535.4 525.2C1536.1 529.1 1536.7 537.2 1537.3 535.4C1537.9 533.6 1538.6 518.6 1539.3 514.6C1540.0 510.6 1540.6 509.6 1541.2 511.4C1541.8 513.2 1542.4 521.1 1542.9 525.2C1543.4 529.4 1543.7 536.6 1544.4 536.3C1545.1 535.9 1546.2 526.0 1546.9 523.1C1547.6 520.2 1547.9 517.8 1548.6 519.2C1549.3 520.6 1550.3 529.2 1551.2 531.6C1552.1 534.0 1553.0 533.1 1554.0 533.3C1555.0 533.5 1556.2 534.2 1557.2 532.7C1558.2 531.2 1559.0 525.7 1559.7 524.1C1560.4 522.5 1560.8 521.8 1561.4 523.1C1562.0 524.4 1562.6 531.3 1563.5 532.0C1564.4 532.7 1565.6 529.2 1566.7 527.3C1567.8 525.4 1568.8 522.0 1569.9 520.5C1571.0 519.0 1572.0 517.6 1573.1 518.4C1574.2 519.2 1575.2 522.5 1576.3 525.2C1577.4 527.9 1578.5 534.8 1579.5 534.8C1580.5 534.8 1581.5 528.2 1582.3 525.2C1583.1 522.2 1583.6 516.5 1584.4 516.7C1585.2 516.9 1586.2 524.9 1587.0 526.3C1587.8 527.7 1588.2 525.7 1589.1 525.2C1590.0 524.7 1591.2 522.8 1592.3 523.1C1593.4 523.4 1594.8 528.5 1595.9 526.9C1597.0 525.3 1597.9 516.2 1598.7 513.5C1599.5 510.8 1599.9 510.7 1600.8 510.7C1601.7 510.7 1602.8 511.4 1604.0 513.5C1605.2 515.6 1606.9 521.1 1608.3 523.1C1609.7 525.1 1611.3 524.9 1612.5 525.2C1613.7 525.5 1614.5 524.4 1615.7 524.8C1616.9 525.1 1618.2 527.8 1619.4 527.3C1620.6 526.8 1621.8 522.7 1622.8 522.0C1623.8 521.3 1624.5 521.9 1625.3 523.1C1626.1 524.3 1627.4 528.0 1627.8 529.0" fill="none" stroke="#e0676a" stroke-width="1.8" stroke-linejoin="round" stroke-linecap="butt"/><path d="M1643.0 465.3H1672.6" stroke="#e0676a" stroke-width="2.2"/><circle cx="1657.8" cy="465.3" r="5.9" fill="#fff" stroke="#e0676a" stroke-width="2.3"/><text x="1679.3" y="469.8" font-size="15.8" fill="#333" textLength="92.8" lengthAdjust="spacingAndGlyphs">ingress-nginx</text><path d="M1643.0 493.2H1672.6" stroke="#ade2fb" stroke-width="2.2"/><circle cx="1657.8" cy="493.2" r="5.9" fill="#fff" stroke="#ade2fb" stroke-width="2.3"/><text x="1679.3" y="497.7" font-size="15.8" fill="#333" textLength="26.7" lengthAdjust="spacingAndGlyphs">ziox</text><path d="M1643.0 520.9H1672.6" stroke="#fff497" stroke-width="2.2"/><circle cx="1657.8" cy="520.9" r="5.9" fill="#fff" stroke="#fff497" stroke-width="2.3"/><text x="1679.3" y="525.4" font-size="15.8" fill="#333" textLength="87.2" lengthAdjust="spacingAndGlyphs">kube-system</text><path d="M1643.0 548.7H1672.6" stroke="#6776c7" stroke-width="2.2"/><circle cx="1657.8" cy="548.7" r="5.9" fill="#fff" stroke="#6776c7" stroke-width="2.3"/><text x="1679.3" y="553.2" font-size="15.8" fill="#333" textLength="155.6" lengthAdjust="spacingAndGlyphs">openobserve-collector</text><path d="M1643.0 576.3H1672.6" stroke="#6dbf72" stroke-width="2.2"/><circle cx="1657.8" cy="576.3" r="5.9" fill="#fff" stroke="#6dbf72" stroke-width="2.3"/><text x="1679.3" y="580.8" font-size="15.8" fill="#333" textLength="203.4" lengthAdjust="spacingAndGlyphs">opentelemetry-operator-sys...</text><path d="M1643.0 603.8H1672.6" stroke="#ffdfae" stroke-width="2.2"/><circle cx="1657.8" cy="603.8" r="5.9" fill="#fff" stroke="#ffdfae" stroke-width="2.3"/><text x="1679.3" y="608.3" font-size="15.8" fill="#333" textLength="38.6" lengthAdjust="spacingAndGlyphs">geoip</text><path d="M182.6 693.3H722.0" stroke="#ebeef7" stroke-width="1"/><path d="M182.6 716.2H722.0" stroke="#ebeef7" stroke-width="1"/><path d="M182.6 739.1H722.0" stroke="#ebeef7" stroke-width="1"/><path d="M182.6 762.0H722.0" stroke="#ebeef7" stroke-width="1"/><path d="M182.6 784.9H722.0" stroke="#ebeef7" stroke-width="1"/><path d="M182.6 807.8H722.0" stroke="#ebeef7" stroke-width="1"/><path d="M182.6 830.7H722.0" stroke="#ebeef7" stroke-width="1"/><path d="M182.6 853.6H722.0" stroke="#ebeef7" stroke-width="1"/><path d="M182.6 693.3V853.6" stroke="#ebeef7" stroke-width="1"/><path d="M228.6 693.3V853.6" stroke="#ebeef7" stroke-width="1"/><path d="M300.6 693.3V853.6" stroke="#ebeef7" stroke-width="1"/><path d="M372.7 693.3V853.6" stroke="#ebeef7" stroke-width="1"/><path d="M444.7 693.3V853.6" stroke="#ebeef7" stroke-width="1"/><path d="M516.7 693.3V853.6" stroke="#ebeef7" stroke-width="1"/><path d="M588.8 693.3V853.6" stroke="#ebeef7" stroke-width="1"/><path d="M660.8 693.3V853.6" stroke="#ebeef7" stroke-width="1"/><path d="M722.0 693.3V853.6" stroke="#ebeef7" stroke-width="1"/><path d="M228.6 853.6V860.0" stroke="#6E7079" stroke-width="1.2"/><path d="M300.6 853.6V860.0" stroke="#6E7079" stroke-width="1.2"/><path d="M372.7 853.6V860.0" stroke="#6E7079" stroke-width="1.2"/><path d="M444.7 853.6V860.0" stroke="#6E7079" stroke-width="1.2"/><path d="M516.7 853.6V860.0" stroke="#6E7079" stroke-width="1.2"/><path d="M588.8 853.6V860.0" stroke="#6E7079" stroke-width="1.2"/><path d="M660.8 853.6V860.0" stroke="#6E7079" stroke-width="1.2"/><text transform="translate(172.8 697.1) scale(0.921 1)" text-anchor="end" font-size="16.2" fill="#75777f">2100.00%</text><text transform="translate(172.8 720.0) scale(0.921 1)" text-anchor="end" font-size="16.2" fill="#75777f">1800.00%</text><text transform="translate(172.8 742.9) scale(0.921 1)" text-anchor="end" font-size="16.2" fill="#75777f">1500.00%</text><text transform="translate(172.8 765.8) scale(0.921 1)" text-anchor="end" font-size="16.2" fill="#75777f">1200.00%</text><text transform="translate(172.8 788.7) scale(0.921 1)" text-anchor="end" font-size="16.2" fill="#75777f">900.00%</text><text transform="translate(172.8 811.6) scale(0.921 1)" text-anchor="end" font-size="16.2" fill="#75777f">600.00%</text><text transform="translate(172.8 834.5) scale(0.921 1)" text-anchor="end" font-size="16.2" fill="#75777f">300.00%</text><text transform="translate(172.8 857.4) scale(0.921 1)" text-anchor="end" font-size="16.2" fill="#75777f">0.00%</text><text transform="translate(228.6 874.7) scale(0.890 1)" text-anchor="middle" font-size="16.2" fill="#75777f">11</text><text transform="translate(300.6 874.7) scale(0.890 1)" text-anchor="middle" font-size="16.2" fill="#75777f">12</text><text transform="translate(372.7 874.7) scale(0.890 1)" text-anchor="middle" font-size="16.2" fill="#75777f">13</text><text transform="translate(444.7 874.7) scale(0.890 1)" text-anchor="middle" font-size="16.2" fill="#75777f">14</text><text transform="translate(516.7 874.7) scale(0.890 1)" text-anchor="middle" font-size="16.2" fill="#75777f">15</text><text transform="translate(588.8 874.7) scale(0.890 1)" text-anchor="middle" font-size="16.2" fill="#75777f">16</text><text transform="translate(660.8 874.7) scale(0.890 1)" text-anchor="middle" font-size="16.2" fill="#75777f">17</text><path d="M182.6 853.6C272.5 853.6 632.1 853.6 722.0 853.6" fill="none" stroke="#ffdfae" stroke-width="2.0" stroke-linejoin="round" stroke-linecap="butt"/><path d="M182.6 852.9C188.5 852.9 211.5 853.2 218.0 852.9C221.8 852.6 220.6 851.0 221.8 851.0C223.0 851.0 221.8 852.6 225.0 852.9C308.4 853.2 639.2 852.6 722.0 852.6" fill="none" stroke="#8c97d8" stroke-width="1.7" stroke-linejoin="round" stroke-linecap="butt"/><path d="M182.6 741.8C183.4 740.2 186.0 735.1 187.3 732.2C188.6 729.3 189.7 724.8 190.5 724.3C191.3 723.8 191.5 725.2 192.0 729.0C192.5 732.8 193.2 743.7 193.7 747.1C194.2 750.5 194.5 751.9 195.2 749.2C195.9 746.5 197.0 735.7 198.0 731.1C199.0 726.5 200.3 723.2 201.2 721.5C202.1 719.8 202.7 718.6 203.3 720.9C203.9 723.2 204.5 732.4 205.0 735.4C205.5 738.4 205.8 739.5 206.5 738.6C207.2 737.7 208.3 733.5 209.1 730.1C209.9 726.7 210.6 721.8 211.2 718.3C211.8 714.8 212.2 711.1 212.9 709.4C213.6 707.7 214.7 708.0 215.5 708.3C216.3 708.5 217.1 706.7 217.8 710.9C218.5 715.1 219.0 722.5 219.7 733.3C220.4 744.1 221.2 762.8 221.8 775.9C222.4 789.0 222.9 804.5 223.5 812.1C224.1 819.7 224.2 819.8 225.3 821.6C226.4 823.4 227.7 822.3 229.9 822.7C232.1 823.1 235.8 823.9 238.5 824.2C241.2 824.5 244.4 827.1 245.9 824.4C247.4 821.7 246.9 815.2 247.4 807.8C247.9 800.4 248.4 785.8 249.1 780.1C249.8 774.4 250.3 774.8 251.7 773.7C253.1 772.6 255.9 772.5 257.6 773.3C259.3 774.1 260.6 777.3 261.9 778.4C263.1 779.5 264.0 780.2 265.1 779.7C266.2 779.2 267.3 776.1 268.7 775.4C270.1 774.7 272.2 775.8 273.6 775.4C275.0 775.0 275.7 773.0 276.8 772.7C277.9 772.4 279.0 772.8 280.0 773.7C281.0 774.6 281.7 777.0 282.6 778.0C283.5 779.0 284.1 780.2 285.3 779.7C286.5 779.2 288.0 775.8 289.6 774.8C291.2 773.8 293.1 773.2 294.9 773.7C296.7 774.2 298.2 777.2 300.2 777.6C302.1 778.0 304.6 776.8 306.6 776.3C308.6 775.8 310.7 774.2 312.4 774.4C314.1 774.6 315.2 776.8 316.6 777.6C318.0 778.4 319.1 779.5 320.5 779.0C321.9 778.5 322.9 775.8 324.7 774.8C326.5 773.8 329.2 773.0 331.1 773.3C333.0 773.5 334.4 775.6 335.8 776.3C337.2 777.0 338.2 777.5 339.6 777.6C341.0 777.7 341.9 776.5 343.9 776.9C345.9 777.3 349.5 780.0 351.4 780.1C353.2 780.2 353.8 777.7 355.0 777.6C356.2 777.5 357.1 779.7 358.8 779.7C360.5 779.7 362.9 777.7 365.2 777.6C367.5 777.5 370.4 779.0 372.7 779.0C375.0 779.0 377.2 777.5 379.0 777.6C380.8 777.7 381.9 779.9 383.3 779.7C384.7 779.5 386.2 776.8 387.6 776.3C389.0 775.8 390.5 777.4 391.8 776.9C393.1 776.4 394.1 773.3 395.4 773.3C396.6 773.3 398.0 776.1 399.3 776.9C400.6 777.7 401.9 778.7 403.1 778.0C404.3 777.3 405.4 773.2 406.7 772.7C408.0 772.2 409.6 774.6 411.0 774.8C412.4 775.0 413.9 774.2 415.3 773.7C416.7 773.2 418.2 771.6 419.5 772.0C420.8 772.4 422.0 773.9 423.1 775.9C424.2 777.9 425.3 783.7 426.3 783.9C427.3 784.1 427.9 777.8 429.1 776.9C430.3 776.0 431.8 778.6 433.4 778.4C435.0 778.2 437.1 776.2 438.7 775.9C440.3 775.5 441.7 776.7 442.9 776.3C444.1 775.9 444.9 773.6 446.1 773.7C447.4 773.8 448.8 776.6 450.4 776.9C452.0 777.2 453.8 775.2 455.7 775.4C457.6 775.6 459.7 778.2 461.5 778.0C463.3 777.8 465.2 774.9 466.4 774.2C467.6 773.5 467.8 773.2 468.9 773.7C470.0 774.2 471.8 776.5 473.2 776.9C474.6 777.3 475.6 776.6 477.0 775.9C478.4 775.2 479.9 772.5 481.3 772.7C482.7 772.9 484.2 776.5 485.6 776.9C487.0 777.2 488.5 775.8 489.8 774.8C491.1 773.8 492.4 771.1 493.7 771.2C495.0 771.3 496.6 774.5 497.9 775.4C499.2 776.3 500.4 777.2 501.5 776.9C502.6 776.6 503.9 773.7 504.7 773.7C505.5 773.7 506.0 774.4 506.4 776.9C506.8 779.4 506.9 785.0 507.3 788.6C507.7 792.2 508.2 796.1 509.0 798.2C509.8 800.3 511.0 801.1 512.2 801.0C513.4 800.9 515.0 797.9 516.4 797.6C517.8 797.3 519.1 799.3 520.7 799.3C522.3 799.3 524.0 798.1 526.0 797.8C528.0 797.4 530.8 796.5 532.4 797.2C534.0 797.9 534.4 801.4 535.6 801.8C536.9 802.1 538.5 800.1 539.9 799.3C541.3 798.4 542.7 796.6 544.1 796.7C545.5 796.8 547.0 798.4 548.4 799.7C549.8 801.0 551.5 804.9 552.7 804.6C554.0 804.4 554.7 799.3 555.9 798.2C557.1 797.1 558.7 797.7 560.1 798.2C561.5 798.7 563.0 800.5 564.4 801.0C565.8 801.5 567.4 801.7 568.6 801.0C569.8 800.3 570.9 796.6 571.8 796.7C572.7 796.8 573.3 799.9 574.0 801.4C574.7 802.9 575.4 806.2 576.1 805.7C576.8 805.2 577.1 799.2 578.2 798.2C579.3 797.2 581.1 799.7 582.5 799.7C583.9 799.7 585.1 798.0 586.7 798.2C588.3 798.4 590.3 800.9 592.1 801.0C593.9 801.1 595.6 799.4 597.4 798.9C599.2 798.4 601.1 798.7 602.7 798.2C604.3 797.7 605.6 795.6 607.0 796.1C608.4 796.6 609.4 800.9 610.8 801.4C612.2 801.9 614.0 799.2 615.5 798.9C617.0 798.5 618.5 799.8 619.8 799.3C621.0 798.8 622.0 795.9 623.0 796.1C624.0 796.3 624.9 799.2 626.1 800.4C627.3 801.6 629.0 803.2 630.4 803.1C631.8 803.0 633.3 800.3 634.7 799.7C636.1 799.1 637.5 799.9 638.9 799.3C640.3 798.7 641.8 796.6 643.2 796.1C644.6 795.6 646.3 795.6 647.4 796.1C648.5 796.6 648.5 798.8 649.6 798.9C650.7 799.0 652.4 796.8 653.8 796.7C655.2 796.6 656.7 797.5 658.1 798.2C659.5 798.9 661.0 801.2 662.4 801.0C663.8 800.8 665.2 797.6 666.6 796.7C668.0 795.8 669.6 795.1 670.9 795.7C672.1 796.3 672.5 799.9 674.1 800.4C675.7 800.9 678.5 799.3 680.5 798.9C682.5 798.5 684.2 798.1 685.8 798.2C687.4 798.3 688.7 799.8 690.1 799.3C691.5 798.8 692.9 795.9 694.3 795.5C695.7 795.1 697.4 795.9 698.6 796.7C699.9 797.5 700.6 800.3 701.8 800.4C703.0 800.5 704.6 797.9 706.0 797.2C707.4 796.5 708.9 795.8 710.3 796.1C711.7 796.5 713.2 798.1 714.6 799.3C716.0 800.5 717.4 803.3 718.4 803.1C719.4 802.9 720.3 799.6 720.9 798.2C721.5 796.9 721.8 795.5 722.0 795.0" fill="none" stroke="#ade2fb" stroke-width="1.8" stroke-linejoin="round" stroke-linecap="butt"/><path d="M182.6 838.7C183.2 838.4 185.2 836.5 186.3 836.6C187.5 836.7 188.3 839.5 189.5 839.3C190.7 839.1 192.3 835.6 193.7 835.5C195.1 835.4 196.6 839.3 198.0 838.7C199.4 838.1 200.8 833.0 202.2 831.7C203.6 830.4 205.1 831.6 206.5 830.8C207.9 830.0 209.7 829.2 210.8 827.0C211.9 824.8 212.3 819.4 212.9 817.4C213.5 815.4 213.9 814.1 214.4 815.3C214.9 816.5 215.6 821.9 216.1 824.8C216.6 827.7 217.0 831.8 217.6 832.9C218.2 834.0 218.9 832.2 219.7 831.7C220.4 831.2 221.3 829.4 222.1 830.2C222.9 831.0 223.6 834.8 224.6 836.6C225.6 838.4 226.7 840.2 227.8 840.8C228.9 841.4 229.9 840.8 231.0 840.2C232.1 839.6 233.0 838.0 234.2 837.2C235.4 836.4 236.8 835.1 238.0 835.5C239.2 835.9 240.6 838.3 241.7 839.3C242.8 840.3 243.6 841.5 244.8 841.5C246.0 841.5 247.8 839.5 249.1 839.3C250.3 839.1 251.4 841.9 252.3 840.2C253.2 838.5 253.8 834.9 254.4 829.1C255.0 823.4 255.4 810.7 255.9 805.7C256.4 800.7 256.7 798.9 257.2 799.3C257.7 799.6 258.2 802.5 258.7 807.8C259.2 813.1 259.5 826.6 260.2 831.2C260.9 835.8 262.0 834.6 263.0 835.5C264.0 836.4 265.1 836.2 266.1 836.6C267.2 837.0 268.1 838.4 269.3 838.0C270.6 837.6 272.2 835.2 273.6 834.4C275.0 833.6 276.6 832.6 277.9 833.4C279.1 834.2 280.2 839.1 281.1 839.3C282.0 839.5 282.0 835.1 283.2 834.4C284.4 833.7 286.9 836.3 288.1 835.1C289.4 833.9 290.0 829.4 290.7 827.0C291.4 824.6 291.9 821.5 292.4 820.6C292.9 819.7 293.3 818.9 293.8 821.6C294.3 824.3 294.5 833.8 295.3 836.6C296.1 839.5 297.4 838.6 298.7 838.7C300.0 838.8 301.7 837.4 303.4 837.2C305.1 837.0 307.4 837.0 308.8 837.6C310.2 838.2 310.9 840.0 312.0 840.8C313.1 841.6 313.9 842.8 315.1 842.3C316.3 841.8 317.9 838.9 319.4 838.0C320.9 837.1 322.9 836.8 324.3 837.2C325.7 837.6 326.6 839.5 327.9 840.2C329.2 840.9 330.7 841.6 332.2 841.5C333.7 841.4 335.5 839.8 337.1 839.3C338.7 838.8 340.5 838.6 341.8 838.7C343.1 838.9 343.9 840.1 345.0 840.2C346.1 840.3 347.7 840.8 348.6 839.3C349.5 837.8 349.8 833.0 350.3 831.2C350.8 829.4 351.3 828.3 351.8 828.7C352.3 829.1 352.9 832.2 353.5 833.4C354.1 834.6 354.7 836.0 355.6 835.9C356.6 835.8 358.1 832.7 359.2 832.9C360.3 833.1 360.8 836.2 362.0 837.2C363.2 838.2 364.7 839.0 366.3 838.7C367.9 838.4 370.2 835.0 371.6 835.5C373.0 836.0 373.6 841.0 374.8 841.5C376.0 842.0 377.6 839.5 379.0 838.7C380.4 837.9 381.9 836.5 383.3 836.6C384.7 836.7 386.2 838.4 387.6 839.3C389.0 840.2 390.2 842.2 391.8 841.9C393.4 841.6 395.4 838.6 397.2 837.6C399.0 836.6 400.9 835.5 402.5 835.9C404.1 836.3 405.4 839.6 406.7 840.2C408.0 840.8 409.2 840.4 410.4 839.3C411.6 838.2 412.6 834.6 413.8 833.8C415.0 833.0 416.3 835.5 417.4 834.4C418.5 833.3 419.7 828.8 420.6 827.4C421.5 826.0 422.0 824.4 422.7 825.9C423.4 827.4 423.9 834.6 424.8 836.6C425.7 838.6 426.6 838.0 428.0 838.0C429.4 838.0 432.0 838.1 433.4 836.6C434.8 835.1 435.8 830.7 436.6 829.1C437.4 827.5 437.7 825.6 438.3 827.0C438.9 828.4 439.5 835.2 440.2 837.6C440.9 840.0 441.1 841.3 442.3 841.5C443.5 841.7 445.7 839.8 447.2 838.7C448.7 837.6 450.3 836.1 451.5 835.1C452.7 834.1 453.4 832.2 454.2 832.9C455.0 833.6 455.6 837.7 456.4 839.3C457.2 840.9 457.8 842.0 458.9 842.3C460.0 842.5 462.1 841.8 463.2 840.8C464.3 839.8 464.6 837.4 465.3 836.0C466.0 834.6 466.8 833.6 467.5 832.3C468.2 831.0 468.9 828.0 469.6 828.0C470.3 828.0 470.8 830.3 471.7 832.3C472.6 834.3 473.8 838.3 474.9 839.8C476.0 841.3 476.9 841.8 478.1 841.5C479.4 841.2 481.1 838.9 482.4 838.0C483.6 837.1 484.5 835.7 485.6 835.9C486.7 836.1 487.6 838.7 488.8 839.3C490.0 839.9 491.6 839.6 493.0 839.3C494.4 839.0 495.5 838.0 497.3 837.6C499.1 837.2 501.6 837.2 503.7 837.2C505.8 837.2 508.5 836.9 510.1 837.6C511.7 838.3 512.2 841.4 513.3 841.5C514.3 841.6 515.2 838.3 516.4 838.0C517.6 837.7 519.3 840.0 520.7 839.8C522.1 839.6 523.7 838.0 525.0 836.6C526.3 835.2 527.5 832.1 528.6 831.7C529.7 831.3 530.4 832.9 531.4 834.4C532.4 835.9 533.6 839.4 534.6 840.8C535.6 842.2 536.1 842.9 537.1 842.9C538.1 842.9 539.1 841.0 540.5 840.8C541.9 840.6 543.9 842.4 545.2 841.9C546.5 841.4 547.0 838.4 548.4 838.0C549.8 837.6 551.9 839.6 553.7 839.8C555.5 840.0 557.2 839.8 559.0 839.3C560.8 838.8 562.9 837.7 564.4 836.6C565.9 835.5 567.1 832.5 568.2 832.9C569.3 833.2 569.8 837.2 570.8 838.7C571.8 840.2 572.8 841.8 574.0 841.9C575.2 842.0 576.8 840.1 578.2 839.3C579.6 838.5 580.9 837.8 582.5 837.2C584.1 836.6 586.2 835.6 587.8 835.9C589.4 836.1 590.7 838.7 592.1 838.7C593.5 838.7 595.1 836.4 596.3 835.9C597.5 835.4 598.5 835.1 599.5 835.9C600.5 836.7 601.0 839.7 602.3 840.8C603.5 841.9 605.5 842.2 607.0 842.3C608.5 842.4 610.0 842.4 611.2 841.5C612.4 840.6 613.1 837.6 614.4 837.2C615.6 836.8 617.1 838.9 618.7 839.3C620.3 839.7 622.4 839.6 624.0 839.8C625.6 839.9 627.1 841.1 628.3 840.2C629.5 839.3 630.1 834.6 631.0 834.4C631.9 834.1 632.6 837.6 633.6 838.7C634.6 839.8 635.2 840.3 636.8 840.8C638.4 841.3 641.8 843.5 643.2 841.5C644.6 839.5 644.7 832.8 645.3 829.1C645.9 825.4 646.5 819.5 647.0 819.5C647.5 819.5 648.0 825.9 648.5 829.1C649.0 832.3 649.3 837.4 650.2 838.7C651.1 840.1 652.5 837.2 653.8 837.2C655.1 837.2 656.7 838.6 658.1 838.7C659.5 838.8 661.1 837.5 662.4 838.0C663.6 838.5 664.4 840.8 665.6 841.5C666.8 842.2 668.4 842.7 669.8 842.3C671.2 841.9 672.7 840.1 674.1 839.3C675.5 838.4 676.9 837.1 678.3 837.2C679.7 837.3 681.2 839.1 682.6 839.8C684.0 840.5 685.3 841.8 686.9 841.5C688.5 841.2 690.6 838.7 692.2 838.0C693.8 837.3 694.8 837.0 696.4 837.2C698.0 837.4 700.5 840.6 701.8 839.3C703.0 837.9 703.3 832.1 703.9 829.1C704.5 826.1 705.0 821.4 705.6 821.0C706.2 820.6 707.0 825.1 707.7 827.0C708.4 828.9 708.9 831.4 709.9 832.3C710.9 833.2 712.4 831.4 713.5 832.3C714.6 833.2 715.2 836.2 716.3 837.6C717.4 839.0 718.9 839.9 719.9 840.8C720.9 841.7 721.6 842.5 722.0 842.9" fill="none" stroke="#e0676a" stroke-width="1.8" stroke-linejoin="round" stroke-linecap="butt"/><path d="M182.6 840.8C183.2 840.4 185.2 838.2 186.3 838.7C187.5 839.2 188.3 843.6 189.5 844.0C190.7 844.4 192.3 840.7 193.7 840.8C195.0 840.9 196.2 844.8 197.6 844.4C198.9 844.0 200.5 838.8 201.8 838.7C203.1 838.6 203.9 843.3 205.4 844.0C206.9 844.7 209.0 843.0 210.8 842.9C212.6 842.8 214.3 844.0 216.1 843.6C217.9 843.2 219.4 840.5 221.4 840.2C223.4 839.9 225.3 841.5 227.8 841.9C230.3 842.2 233.8 842.4 236.3 842.3C238.8 842.2 241.1 842.1 242.7 841.5C244.3 840.9 244.8 838.6 245.9 838.7C247.0 838.8 247.1 841.7 249.1 841.9C251.1 842.1 255.1 840.0 257.6 839.8C260.1 839.6 262.4 841.3 264.0 840.8C265.6 840.3 266.3 837.9 267.2 836.6C268.1 835.3 268.6 832.5 269.3 832.9C270.0 833.2 270.2 836.9 271.5 838.7C272.8 840.5 274.9 842.7 276.8 843.6C278.8 844.5 281.6 844.4 283.2 844.4C284.8 844.4 285.1 844.1 286.4 843.6C287.6 843.1 289.6 842.2 290.7 841.5C291.8 840.8 292.0 838.9 292.8 839.3C293.6 839.6 294.1 842.8 295.3 843.6C296.5 844.5 298.7 844.5 300.2 844.4C301.7 844.3 302.9 842.9 304.5 842.9C306.1 842.9 306.8 844.2 309.8 844.4C312.8 844.6 316.9 844.0 322.6 844.0C328.3 844.0 338.2 844.7 343.9 844.7C349.6 844.7 353.7 844.5 356.7 844.0C359.7 843.5 360.4 841.9 362.0 841.9C363.6 841.9 364.7 843.7 366.3 844.0C367.9 844.3 368.2 843.5 371.6 843.6C375.0 843.7 382.6 844.5 386.5 844.4C390.4 844.3 392.9 842.8 395.0 842.9C397.1 843.0 397.2 844.9 399.3 845.1C401.4 845.3 404.6 844.2 407.8 844.0C411.0 843.8 416.2 844.4 418.5 844.0C420.8 843.6 420.3 841.9 421.7 841.9C423.1 841.9 425.1 843.7 427.0 844.0C428.9 844.3 431.6 844.0 433.4 843.6C435.2 843.2 436.2 841.8 437.6 841.9C439.0 842.0 440.3 843.9 441.9 844.0C443.5 844.1 445.8 842.2 447.2 842.3C448.6 842.4 449.3 844.5 450.4 844.4C451.5 844.3 452.5 842.0 453.6 841.9C454.7 841.8 454.9 843.6 456.8 844.0C458.8 844.4 462.6 843.9 465.3 844.0C468.0 844.1 470.8 844.7 472.8 844.4C474.8 844.1 476.1 842.3 477.5 842.3C478.9 842.3 479.2 843.9 481.3 844.4C483.4 844.9 487.1 845.2 489.8 845.1C492.5 845.0 495.2 843.7 497.3 843.6C499.4 843.5 498.2 844.3 502.6 844.4C507.0 844.5 516.8 844.5 523.9 844.4C531.0 844.3 538.1 844.0 545.2 844.0C552.3 844.0 562.1 844.7 566.5 844.4C570.9 844.1 570.2 842.4 571.8 842.3C573.4 842.2 573.4 843.5 576.1 844.0C578.8 844.5 585.0 845.3 587.8 845.1C590.6 844.9 591.9 843.9 593.1 842.9C594.4 841.9 594.5 839.2 595.3 839.3C596.1 839.4 595.7 842.8 598.0 843.6C600.3 844.5 606.2 844.7 609.1 844.4C612.0 844.1 613.7 842.0 615.5 841.9C617.3 841.8 617.7 843.8 619.8 844.0C621.9 844.2 626.4 843.4 628.3 842.9C630.2 842.4 629.9 840.6 631.0 840.8C632.1 841.0 632.7 843.4 634.7 844.0C636.7 844.6 641.2 844.2 643.2 844.4C645.2 844.6 644.8 845.2 646.4 845.1C648.0 845.0 650.7 843.7 652.8 843.6C654.9 843.5 656.0 844.3 659.2 844.4C662.4 844.5 668.1 844.5 672.0 844.4C675.9 844.3 680.1 844.0 682.6 844.0C685.1 844.0 685.6 845.5 686.9 844.4C688.1 843.3 689.2 837.7 690.1 837.6C691.0 837.5 691.2 843.5 692.2 844.0C693.2 844.5 694.2 840.6 695.8 840.8C697.4 841.0 700.1 844.8 701.8 845.1C703.5 845.5 704.6 843.0 706.0 842.9C707.4 842.8 708.9 844.5 710.3 844.4C711.7 844.3 713.5 843.4 714.6 842.3C715.7 841.2 716.2 837.9 717.1 838.0C718.0 838.1 719.1 841.8 719.9 842.9C720.7 844.0 721.6 844.1 722.0 844.4" fill="none" stroke="#fff497" stroke-width="1.8" stroke-linejoin="round" stroke-linecap="butt"/><path d="M737.4 708.8H767.0" stroke="#ade2fb" stroke-width="2.2"/><circle cx="752.2" cy="708.8" r="5.9" fill="#fff" stroke="#ade2fb" stroke-width="2.3"/><text x="773.7" y="713.3" font-size="15.8" fill="#333" textLength="26.7" lengthAdjust="spacingAndGlyphs">ziox</text><path d="M737.4 736.9H767.0" stroke="#e0676a" stroke-width="2.2"/><circle cx="752.2" cy="736.9" r="5.9" fill="#fff" stroke="#e0676a" stroke-width="2.3"/><text x="773.7" y="741.4" font-size="15.8" fill="#333" textLength="92.8" lengthAdjust="spacingAndGlyphs">ingress-nginx</text><path d="M737.4 764.9H767.0" stroke="#fff497" stroke-width="2.2"/><circle cx="752.2" cy="764.9" r="5.9" fill="#fff" stroke="#fff497" stroke-width="2.3"/><text x="773.7" y="769.4" font-size="15.8" fill="#333" textLength="87.2" lengthAdjust="spacingAndGlyphs">kube-system</text><path d="M737.4 792.9H767.0" stroke="#6776c7" stroke-width="2.2"/><circle cx="752.2" cy="792.9" r="5.9" fill="#fff" stroke="#6776c7" stroke-width="2.3"/><text x="773.7" y="797.4" font-size="15.8" fill="#333" textLength="155.6" lengthAdjust="spacingAndGlyphs">openobserve-collector</text><path d="M737.4 820.7H767.0" stroke="#6dbf72" stroke-width="2.2"/><circle cx="752.2" cy="820.7" r="5.9" fill="#fff" stroke="#6dbf72" stroke-width="2.3"/><text x="773.7" y="825.2" font-size="15.8" fill="#333" textLength="203.4" lengthAdjust="spacingAndGlyphs">opentelemetry-operator-sys...</text><path d="M737.4 848.7H767.0" stroke="#ffdfae" stroke-width="2.2"/><circle cx="752.2" cy="848.7" r="5.9" fill="#fff" stroke="#ffdfae" stroke-width="2.3"/><text x="773.7" y="853.2" font-size="15.8" fill="#333" textLength="38.6" lengthAdjust="spacingAndGlyphs">geoip</text><path d="M1088.6 693.3H1690.6" stroke="#ebeef7" stroke-width="1"/><path d="M1088.6 725.4H1690.6" stroke="#ebeef7" stroke-width="1"/><path d="M1088.6 757.6H1690.6" stroke="#ebeef7" stroke-width="1"/><path d="M1088.6 789.7H1690.6" stroke="#ebeef7" stroke-width="1"/><path d="M1088.6 821.9H1690.6" stroke="#ebeef7" stroke-width="1"/><path d="M1088.6 854.0H1690.6" stroke="#ebeef7" stroke-width="1"/><path d="M1088.6 693.3V854.0" stroke="#ebeef7" stroke-width="1"/><path d="M1140.6 693.3V854.0" stroke="#ebeef7" stroke-width="1"/><path d="M1220.9 693.3V854.0" stroke="#ebeef7" stroke-width="1"/><path d="M1301.2 693.3V854.0" stroke="#ebeef7" stroke-width="1"/><path d="M1381.5 693.3V854.0" stroke="#ebeef7" stroke-width="1"/><path d="M1461.8 693.3V854.0" stroke="#ebeef7" stroke-width="1"/><path d="M1542.1 693.3V854.0" stroke="#ebeef7" stroke-width="1"/><path d="M1622.4 693.3V854.0" stroke="#ebeef7" stroke-width="1"/><path d="M1690.6 693.3V854.0" stroke="#ebeef7" stroke-width="1"/><path d="M1140.6 854.0V860.4" stroke="#6E7079" stroke-width="1.2"/><path d="M1220.9 854.0V860.4" stroke="#6E7079" stroke-width="1.2"/><path d="M1301.2 854.0V860.4" stroke="#6E7079" stroke-width="1.2"/><path d="M1381.5 854.0V860.4" stroke="#6E7079" stroke-width="1.2"/><path d="M1461.8 854.0V860.4" stroke="#6E7079" stroke-width="1.2"/><path d="M1542.1 854.0V860.4" stroke="#6E7079" stroke-width="1.2"/><path d="M1622.4 854.0V860.4" stroke="#6E7079" stroke-width="1.2"/><text transform="translate(1078.8 697.1) scale(0.921 1)" text-anchor="end" font-size="16.2" fill="#75777f">1500.00%</text><text transform="translate(1078.8 729.2) scale(0.921 1)" text-anchor="end" font-size="16.2" fill="#75777f">1200.00%</text><text transform="translate(1078.8 761.4) scale(0.921 1)" text-anchor="end" font-size="16.2" fill="#75777f">900.00%</text><text transform="translate(1078.8 793.5) scale(0.921 1)" text-anchor="end" font-size="16.2" fill="#75777f">600.00%</text><text transform="translate(1078.8 825.7) scale(0.921 1)" text-anchor="end" font-size="16.2" fill="#75777f">300.00%</text><text transform="translate(1078.8 857.8) scale(0.921 1)" text-anchor="end" font-size="16.2" fill="#75777f">0.00%</text><text transform="translate(1140.6 875.1) scale(0.890 1)" text-anchor="middle" font-size="16.2" fill="#75777f">11</text><text transform="translate(1220.9 875.1) scale(0.890 1)" text-anchor="middle" font-size="16.2" fill="#75777f">12</text><text transform="translate(1301.2 875.1) scale(0.890 1)" text-anchor="middle" font-size="16.2" fill="#75777f">13</text><text transform="translate(1381.5 875.1) scale(0.890 1)" text-anchor="middle" font-size="16.2" fill="#75777f">14</text><text transform="translate(1461.8 875.1) scale(0.890 1)" text-anchor="middle" font-size="16.2" fill="#75777f">15</text><text transform="translate(1542.1 875.1) scale(0.890 1)" text-anchor="middle" font-size="16.2" fill="#75777f">16</text><text transform="translate(1622.4 875.1) scale(0.890 1)" text-anchor="middle" font-size="16.2" fill="#75777f">17</text><path d="M1088.6 854.0C1188.9 854.0 1590.3 854.0 1690.6 854.0" fill="none" stroke="#ffdfae" stroke-width="2.0" stroke-linejoin="round" stroke-linecap="butt"/><path d="M1088.5 841.9C1095.1 841.8 1120.5 841.2 1127.9 841.5C1133.2 841.8 1131.4 843.1 1133.2 843.6C1135.0 844.1 1133.2 844.5 1138.6 844.6C1144.3 844.7 1161.8 843.8 1167.3 844.2C1171.6 844.6 1167.3 846.8 1171.6 847.2C1192.0 847.7 1236.9 847.1 1290.0 846.9C1343.1 846.7 1423.2 846.2 1490.0 846.1C1556.8 846.0 1657.2 846.1 1690.6 846.1" fill="none" stroke="#fff497" stroke-width="1.8" stroke-linejoin="round" stroke-linecap="butt"/><path d="M1088.5 831.2C1095.1 831.3 1120.6 831.3 1127.9 831.7C1132.2 832.1 1130.9 832.5 1132.2 833.4C1133.5 834.3 1134.2 836.4 1135.8 837.0C1137.4 837.6 1136.5 837.1 1141.8 837.0C1147.0 836.9 1162.7 835.8 1167.3 836.1C1169.5 836.4 1168.8 837.5 1169.5 838.7C1170.2 840.0 1169.5 842.9 1171.6 843.6C1174.4 844.4 1171.6 843.3 1186.5 843.2C1206.2 843.1 1261.1 843.0 1290.0 842.9C1318.9 842.8 1346.3 842.7 1360.0 842.5C1372.0 842.3 1360.0 842.1 1372.0 841.9C1392.0 841.7 1426.9 841.4 1480.0 841.3C1533.1 841.2 1655.5 841.2 1690.6 841.2" fill="none" stroke="#6776c7" stroke-width="1.8" stroke-linejoin="round" stroke-linecap="butt"/><path d="M1088.5 731.1C1089.2 731.5 1090.8 733.5 1092.8 733.7C1094.8 733.9 1098.1 733.0 1100.2 732.2C1102.3 731.4 1103.8 729.4 1105.6 729.0C1107.4 728.6 1109.1 729.4 1110.9 729.6C1112.7 729.8 1114.8 731.3 1116.2 730.1C1117.6 728.9 1118.4 725.3 1119.4 722.6C1120.4 719.9 1121.5 716.1 1122.2 714.1C1122.9 712.1 1123.2 710.2 1123.7 710.9C1124.2 711.6 1124.8 712.1 1125.2 718.3C1125.7 724.5 1126.0 739.3 1126.4 748.2C1126.9 757.1 1127.1 765.2 1127.9 771.6C1128.7 778.0 1130.2 781.5 1131.1 786.5C1132.0 791.5 1132.4 797.0 1133.2 801.4C1134.0 805.8 1134.9 810.5 1135.8 813.1C1136.7 815.7 1137.5 816.2 1138.6 816.7C1139.7 817.2 1141.0 817.3 1142.2 816.3C1143.4 815.2 1144.8 811.8 1146.0 810.4C1147.2 809.0 1148.2 807.9 1149.2 807.8C1150.2 807.7 1151.1 809.2 1152.0 809.9C1152.9 810.6 1153.5 812.3 1154.5 812.1C1155.5 811.9 1156.6 811.0 1157.7 808.9C1158.8 806.8 1159.8 802.7 1160.9 799.3C1162.0 795.9 1163.1 791.3 1164.1 788.6C1165.1 785.9 1166.1 783.6 1166.9 783.3C1167.7 782.9 1168.4 783.7 1169.0 786.5C1169.6 789.3 1170.0 797.0 1170.5 800.3C1171.0 803.6 1171.3 806.1 1172.0 806.1C1172.7 806.1 1173.9 801.8 1174.8 800.3C1175.7 798.8 1176.5 798.3 1177.6 797.1C1178.7 795.9 1180.2 795.1 1181.2 792.9C1182.2 790.7 1183.0 785.5 1183.9 783.9C1184.8 782.3 1185.5 783.0 1186.5 783.3C1187.5 783.5 1188.7 786.5 1189.7 785.4C1190.7 784.3 1191.6 778.5 1192.5 776.9C1193.4 775.3 1193.9 775.8 1195.0 775.8C1196.1 775.8 1198.2 777.9 1199.3 776.9C1200.4 775.9 1200.9 772.0 1201.8 769.5C1202.7 767.0 1203.7 763.5 1204.6 762.0C1205.5 760.5 1206.2 760.5 1207.4 760.5C1208.7 760.5 1210.6 762.6 1212.1 762.0C1213.6 761.4 1214.7 758.3 1216.3 756.7C1217.9 755.1 1219.5 753.9 1221.6 752.4C1223.7 750.9 1226.4 748.9 1229.1 747.7C1231.8 746.5 1235.3 745.6 1237.6 745.0C1239.9 744.4 1241.3 744.2 1242.9 744.3C1244.5 744.4 1245.8 746.2 1247.2 745.6C1248.6 745.0 1250.2 742.0 1251.5 740.7C1252.8 739.4 1253.7 738.0 1255.1 737.9C1256.5 737.8 1258.3 740.2 1260.0 740.1C1261.7 740.0 1263.7 738.1 1265.3 737.5C1266.9 736.9 1268.2 737.1 1269.6 736.4C1271.0 735.7 1272.4 733.9 1273.8 733.2C1275.2 732.5 1276.8 733.0 1278.1 732.2C1279.3 731.4 1279.9 729.2 1281.3 728.6C1282.7 728.0 1284.9 729.3 1286.4 728.6C1288.0 727.9 1289.0 725.2 1290.6 724.3C1292.2 723.4 1294.4 723.2 1296.0 723.2C1297.6 723.2 1298.9 724.0 1300.2 724.3C1301.5 724.5 1302.9 725.9 1303.9 724.7C1304.9 723.5 1305.3 718.9 1306.0 717.3C1306.7 715.7 1307.3 714.6 1308.1 715.1C1308.9 715.6 1309.6 719.4 1310.9 720.5C1312.2 721.6 1314.6 720.5 1316.2 721.5C1317.8 722.5 1319.0 725.0 1320.5 726.4C1322.0 727.8 1323.7 730.0 1325.2 730.1C1326.7 730.2 1327.9 727.3 1329.4 726.9C1330.9 726.5 1332.2 728.0 1334.3 727.9C1336.4 727.8 1339.5 726.8 1341.8 726.4C1344.1 726.0 1346.1 726.1 1348.2 725.4C1350.3 724.7 1352.4 722.5 1354.5 722.0C1356.6 721.5 1359.0 722.8 1360.9 722.6C1362.8 722.5 1364.5 720.1 1365.8 721.1C1367.0 722.1 1367.1 727.3 1368.4 728.6C1369.7 729.9 1371.9 728.9 1373.7 729.0C1375.5 729.1 1377.8 730.2 1379.0 729.0C1380.2 727.8 1380.5 723.3 1381.2 721.5C1381.9 719.7 1382.2 717.7 1382.9 718.3C1383.6 718.9 1384.5 724.0 1385.4 725.2C1386.4 726.5 1387.5 725.9 1388.6 725.8C1389.7 725.7 1390.5 724.2 1391.8 724.7C1393.0 725.2 1394.7 729.0 1396.1 729.0C1397.5 729.0 1398.7 725.6 1400.3 724.7C1401.9 723.8 1403.7 723.6 1405.7 723.7C1407.7 723.8 1409.6 725.2 1412.1 725.2C1414.6 725.2 1418.1 724.4 1420.6 723.7C1423.1 723.0 1424.9 721.4 1427.0 720.9C1429.1 720.4 1431.9 720.2 1433.4 720.5C1434.9 720.8 1435.5 718.7 1436.1 722.6C1436.7 726.5 1436.9 734.0 1437.2 743.9C1437.5 753.8 1437.7 773.5 1438.0 782.2C1438.3 790.9 1438.5 794.8 1439.3 796.1C1440.1 797.5 1441.8 792.2 1442.9 790.3C1444.0 788.4 1445.1 786.0 1446.1 784.8C1447.1 783.6 1447.9 782.3 1448.7 782.9C1449.5 783.5 1450.1 786.9 1450.8 788.6C1451.5 790.3 1452.1 792.9 1452.9 793.3C1453.7 793.7 1454.7 793.2 1455.7 791.2C1456.7 789.2 1457.9 783.6 1458.9 781.2C1459.9 778.8 1460.2 777.6 1461.5 776.9C1462.8 776.2 1465.2 778.0 1466.4 776.9C1467.6 775.8 1467.8 771.9 1468.5 770.5C1469.2 769.1 1469.7 767.8 1470.6 768.4C1471.5 769.0 1472.4 773.3 1473.8 774.1C1475.2 774.9 1477.1 773.5 1479.1 773.3C1481.0 773.1 1483.6 773.2 1485.5 773.1C1487.4 773.0 1488.0 773.0 1490.6 772.7C1493.2 772.5 1498.7 772.0 1501.3 771.6C1503.9 771.2 1504.6 770.0 1506.0 770.5C1507.4 771.0 1508.1 774.5 1509.8 774.8C1511.5 775.0 1513.0 772.6 1516.2 772.0C1519.4 771.4 1525.6 771.9 1529.0 771.2C1532.4 770.5 1533.9 768.6 1536.4 768.0C1538.9 767.4 1541.1 767.5 1543.9 767.8C1546.8 768.0 1551.0 769.2 1553.5 769.5C1556.0 769.8 1557.3 769.9 1558.8 769.5C1560.3 769.1 1561.2 766.6 1562.6 766.9C1564.0 767.2 1565.4 770.8 1567.3 771.2C1569.2 771.6 1570.8 770.0 1573.7 769.5C1576.6 769.0 1581.7 768.5 1584.4 768.4C1587.1 768.3 1588.3 769.2 1589.7 769.0C1591.1 768.8 1591.7 767.3 1592.9 767.3C1594.1 767.3 1595.5 769.0 1597.1 769.0C1598.7 769.0 1600.9 767.4 1602.5 767.3C1604.1 767.2 1605.3 768.5 1606.7 768.4C1608.1 768.3 1609.4 766.8 1611.0 766.7C1612.6 766.6 1614.3 767.8 1616.3 767.8C1618.2 767.8 1620.6 767.0 1622.7 766.7C1624.8 766.5 1626.6 766.5 1629.1 766.3C1631.6 766.0 1634.8 765.0 1637.6 765.2C1640.4 765.5 1642.9 767.3 1646.1 767.8C1649.3 768.3 1654.4 768.8 1656.8 768.4C1659.2 768.0 1659.5 766.3 1660.6 765.2C1661.7 764.1 1662.4 762.2 1663.2 762.0C1664.0 761.8 1664.6 762.9 1665.3 764.1C1666.0 765.3 1665.6 768.4 1667.4 769.0C1669.2 769.6 1673.2 768.1 1676.0 768.0C1678.8 767.9 1682.1 768.5 1684.5 768.4C1686.9 768.3 1689.6 767.5 1690.6 767.3" fill="none" stroke="#ade2fb" stroke-width="1.8" stroke-linejoin="round" stroke-linecap="butt"/><path d="M1701.2 737.2H1730.8" stroke="#ade2fb" stroke-width="2.2"/><circle cx="1716.0" cy="737.2" r="5.9" fill="#fff" stroke="#ade2fb" stroke-width="2.3"/><text x="1737.5" y="741.7" font-size="15.8" fill="#333" textLength="26.7" lengthAdjust="spacingAndGlyphs">ziox</text><path d="M1701.2 765.1H1730.8" stroke="#6776c7" stroke-width="2.2"/><circle cx="1716.0" cy="765.1" r="5.9" fill="#fff" stroke="#6776c7" stroke-width="2.3"/><text x="1737.5" y="769.6" font-size="15.8" fill="#333" textLength="145.7" lengthAdjust="spacingAndGlyphs">openobserve-collec...</text><path d="M1701.2 792.9H1730.8" stroke="#fff497" stroke-width="2.2"/><circle cx="1716.0" cy="792.9" r="5.9" fill="#fff" stroke="#fff497" stroke-width="2.3"/><text x="1737.5" y="797.4" font-size="15.8" fill="#333" textLength="87.2" lengthAdjust="spacingAndGlyphs">kube-system</text><path d="M1701.2 820.8H1730.8" stroke="#ffdfae" stroke-width="2.2"/><circle cx="1716.0" cy="820.8" r="5.9" fill="#fff" stroke="#ffdfae" stroke-width="2.3"/><text x="1737.5" y="825.3" font-size="15.8" fill="#333" textLength="38.6" lengthAdjust="spacingAndGlyphs">geoip</text></svg>
</body></html>
